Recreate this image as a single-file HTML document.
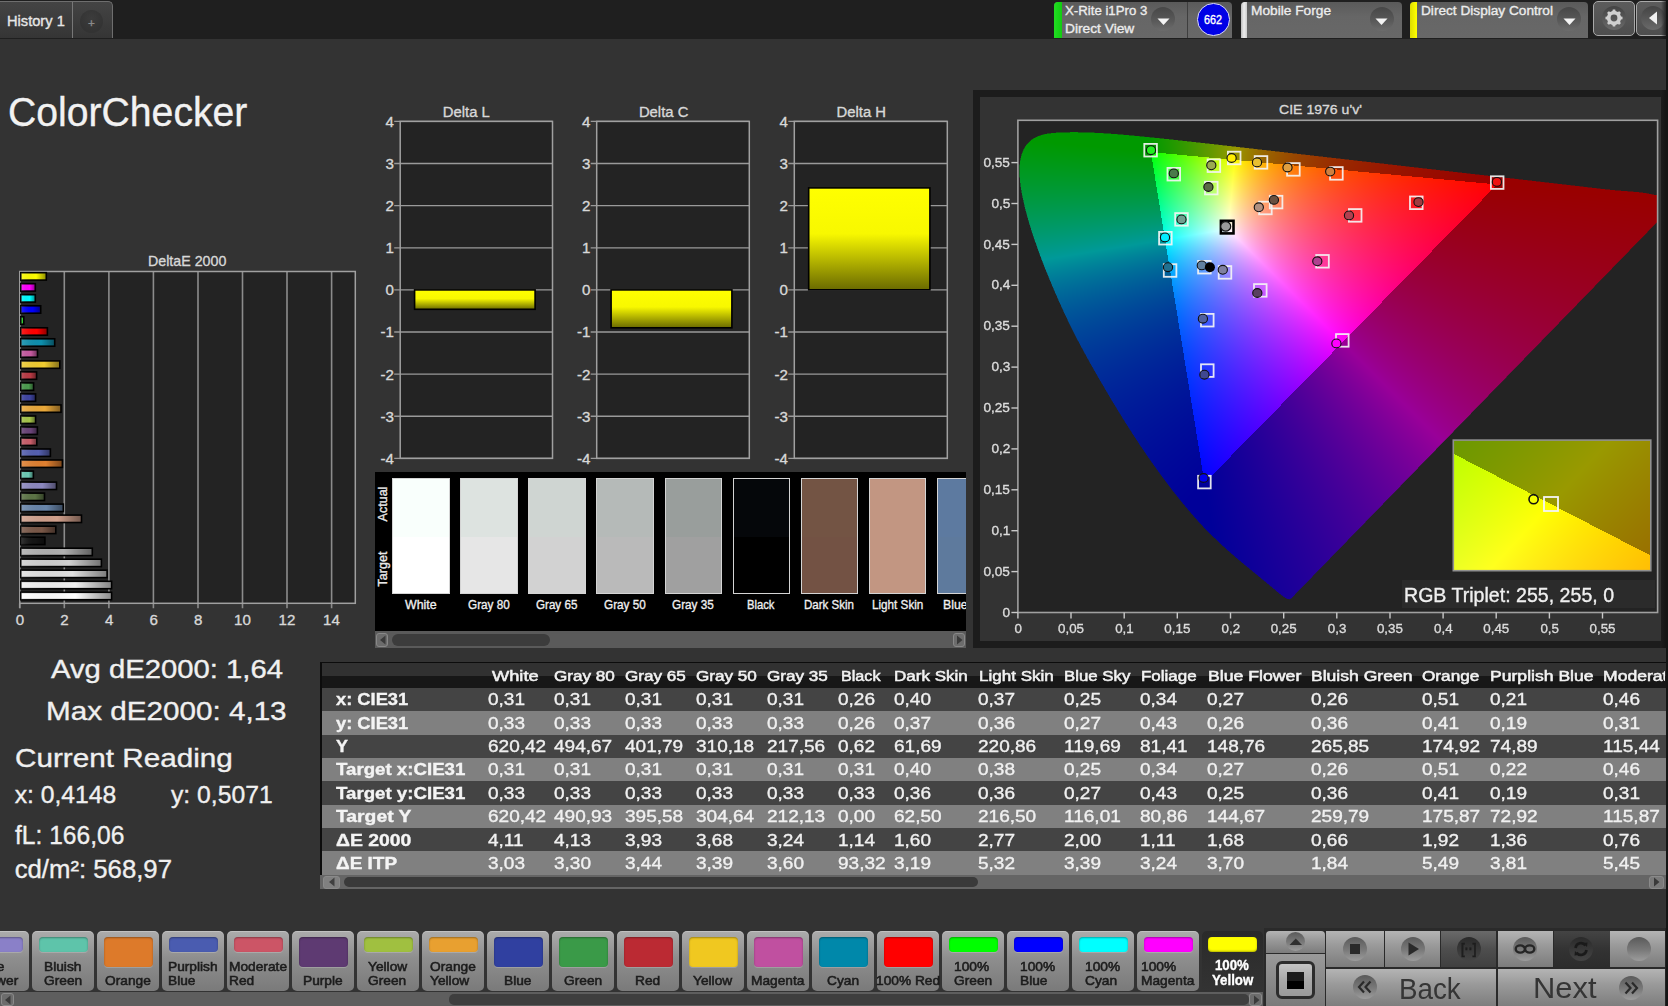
<!DOCTYPE html><html><head><meta charset="utf-8"><style>
html,body{margin:0;padding:0;width:1668px;height:1006px;overflow:hidden;background:#333333;font-family:"Liberation Sans",sans-serif}
.t{position:absolute;white-space:nowrap;-webkit-text-stroke:0.35px currentColor}
svg{position:absolute;left:0;top:0}
</style></head><body>
<div style="position:absolute;left:0.00px;top:0.00px;width:1668.00px;height:39.00px;background:#1f1f1f"></div>
<div style="position:absolute;left:-4px;top:1px;width:117px;height:37px;border:1px solid #6e6e6e;border-bottom:none;border-radius:0 5px 0 0;background:linear-gradient(#444,#353535);box-sizing:border-box"></div>
<div style="position:absolute;left:72.00px;top:2.00px;width:1.00px;height:36.00px;background:#777"></div>
<div style="position:absolute;left:80px;top:10px;width:23px;height:23px;border-radius:50%;background:radial-gradient(circle at 50% 35%,#3c3c3c,#333 70%)"></div>
<div class="t" style="left:88.00px;top:17.15px;font-size:11.63px;line-height:11.63px;color:#8a8a8a;">+</div>
<div class="t" style="left:7.00px;top:13.69px;font-size:14.53px;line-height:14.53px;color:#e6e6e6;transform:scaleX(1.0088);transform-origin:0 0;">History 1</div>
<div style="position:absolute;left:1054.4px;top:1.5px;width:177.5999999999999px;height:36.6px;border-radius:4px 4px 0 0;background:linear-gradient(#5a5a5a,#666 40%,#686868);overflow:hidden"><div style="position:absolute;left:0;top:0;width:7.4px;height:100%;background:linear-gradient(90deg,#22dd22,#11cc11)"></div></div>
<div class="t" style="left:1064.80px;top:3.92px;font-size:13.08px;line-height:13.08px;color:#ececec;transform:scaleX(1.0111);transform-origin:0 0;">X-Rite i1Pro 3</div>
<div class="t" style="left:1064.80px;top:22.97px;font-size:12.79px;line-height:12.79px;color:#ececec;transform:scaleX(1.0754);transform-origin:0 0;">Direct View</div>
<div style="position:absolute;left:1151.1px;top:7.2px;width:24px;height:24px;border-radius:50%;background:linear-gradient(#474747,#5a5a5a 60%,#6c6c6c)"></div>
<svg width="14" height="8" style="left:1156.6px;top:17.7px"><path d="M0.5 0.5 L12.5 0.5 L6.5 7 Z" fill="#f4f4f4"/></svg>
<div style="position:absolute;left:1187.00px;top:2.00px;width:1.20px;height:36.00px;background:#3e3e3e"></div>
<div style="position:absolute;left:1196.8px;top:2.8px;width:32.8px;height:32.8px;border-radius:50%;background:#0000e6;border:1.6px solid #dcdcf8;box-sizing:border-box"></div>
<div class="t" style="left:1203.90px;top:14.26px;font-size:12.21px;line-height:12.21px;color:#ffffff;transform:scaleX(0.8857);transform-origin:0 0;">662</div>
<div style="position:absolute;left:1241px;top:1.5px;width:160.9000000000001px;height:36.6px;border-radius:4px 4px 0 0;background:linear-gradient(#5a5a5a,#666 40%,#686868);overflow:hidden"><div style="position:absolute;left:0;top:0;width:6px;height:100%;background:linear-gradient(90deg,#bbb,#eee 50%,#ccc)"></div></div>
<div class="t" style="left:1251.20px;top:3.92px;font-size:13.08px;line-height:13.08px;color:#ececec;transform:scaleX(1.0487);transform-origin:0 0;">Mobile Forge</div>
<div style="position:absolute;left:1369.9px;top:7.2px;width:24px;height:24px;border-radius:50%;background:linear-gradient(#474747,#5a5a5a 60%,#6c6c6c)"></div>
<svg width="14" height="8" style="left:1375.4px;top:17.7px"><path d="M0.5 0.5 L12.5 0.5 L6.5 7 Z" fill="#f4f4f4"/></svg>
<div style="position:absolute;left:1410.3px;top:1.5px;width:178.20000000000005px;height:36.6px;border-radius:4px 4px 0 0;background:linear-gradient(#5a5a5a,#666 40%,#686868);overflow:hidden"><div style="position:absolute;left:0;top:0;width:7px;height:100%;background:linear-gradient(90deg,#dddd00,#ffff00)"></div></div>
<div class="t" style="left:1421.00px;top:3.92px;font-size:13.08px;line-height:13.08px;color:#ececec;transform:scaleX(1.0437);transform-origin:0 0;">Direct Display Control</div>
<div style="position:absolute;left:1557.1px;top:7.2px;width:24px;height:24px;border-radius:50%;background:linear-gradient(#474747,#5a5a5a 60%,#6c6c6c)"></div>
<svg width="14" height="8" style="left:1562.6px;top:17.7px"><path d="M0.5 0.5 L12.5 0.5 L6.5 7 Z" fill="#f4f4f4"/></svg>
<div style="position:absolute;left:1593.3px;top:1.2px;width:41.6px;height:34.5px;border:1.5px solid #a8a8a8;border-radius:5px;box-sizing:border-box;background:linear-gradient(#5c5c5c,#4e4e4e)"></div>
<div style="position:absolute;left:1602px;top:6px;width:24px;height:24px;border-radius:50%;background:linear-gradient(#444,#5a5a5a 60%,#6a6a6a)"></div>
<svg width="24" height="24" viewBox="-12 -12 24 24" style="left:1602px;top:6px"><path d="M7.03 -1.57 L8.52 -1.20 L8.52 1.20 L7.03 1.57 L6.08 3.86 L6.87 5.17 L5.17 6.87 L3.86 6.08 L1.57 7.03 L1.20 8.52 L-1.20 8.52 L-1.57 7.03 L-3.86 6.08 L-5.17 6.87 L-6.87 5.17 L-6.08 3.86 L-7.03 1.57 L-8.52 1.20 L-8.52 -1.20 L-7.03 -1.57 L-6.08 -3.86 L-6.87 -5.17 L-5.17 -6.87 L-3.86 -6.08 L-1.57 -7.03 L-1.20 -8.52 L1.20 -8.52 L1.57 -7.03 L3.86 -6.08 L5.17 -6.87 L6.87 -5.17 L6.08 -3.86 Z M3.4 0 A3.4 3.4 0 1 0 -3.4 0 A3.4 3.4 0 1 0 3.4 0 Z" fill="#d0d0d0" fill-rule="evenodd"/></svg>
<div style="position:absolute;left:1635.9px;top:1.2px;width:50px;height:34.5px;border:1.5px solid #a8a8a8;border-radius:5px;box-sizing:border-box;background:linear-gradient(#5c5c5c,#4e4e4e)"></div>
<div style="position:absolute;left:1640.7px;top:6px;width:24px;height:24px;border-radius:50%;background:linear-gradient(#444,#5a5a5a 60%,#6a6a6a)"></div>
<svg width="10" height="14" style="left:1648px;top:11px"><path d="M9 0.5 L9 13.5 L1 7 Z" fill="#f0f0f0"/></svg>
<div style="position:absolute;left:1661.00px;top:0.00px;width:7.00px;height:39.00px;background:linear-gradient(90deg,rgba(0,0,0,0),#111)"></div>
<div class="t" style="left:8.40px;top:90.80px;font-size:41.57px;line-height:41.57px;color:#f2f2f2;transform:scaleX(0.9421);transform-origin:0 0;">ColorChecker</div>
<div class="t" style="left:147.90px;top:252.63px;font-size:15.55px;line-height:15.55px;color:#d8d8d8;transform:scaleX(0.9151);transform-origin:0 0;">DeltaE 2000</div>
<svg width="1668" height="1006" style="position:absolute;left:0;top:0"><rect x="19.8" y="271.5" width="335.5" height="331.79999999999995" fill="#232323"/><line x1="64.3" y1="271.5" x2="64.3" y2="608.3" stroke="#8c8c8c" stroke-width="1.6"/><line x1="108.9" y1="271.5" x2="108.9" y2="608.3" stroke="#8c8c8c" stroke-width="1.6"/><line x1="153.4" y1="271.5" x2="153.4" y2="608.3" stroke="#8c8c8c" stroke-width="1.6"/><line x1="198.0" y1="271.5" x2="198.0" y2="608.3" stroke="#8c8c8c" stroke-width="1.6"/><line x1="242.5" y1="271.5" x2="242.5" y2="608.3" stroke="#8c8c8c" stroke-width="1.6"/><line x1="287.0" y1="271.5" x2="287.0" y2="608.3" stroke="#8c8c8c" stroke-width="1.6"/><line x1="331.6" y1="271.5" x2="331.6" y2="608.3" stroke="#8c8c8c" stroke-width="1.6"/><rect x="19.8" y="271.5" width="335.5" height="331.79999999999995" fill="none" stroke="#a0a0a0" stroke-width="1.5"/><line x1="19.8" y1="603.3" x2="19.8" y2="608.3" stroke="#9a9a9a" stroke-width="1.8"/><defs><linearGradient id="bshade" x1="0" y1="0" x2="1" y2="0"><stop offset="0" stop-color="#fff" stop-opacity="0.15"/><stop offset="0.6" stop-color="#000" stop-opacity="0"/><stop offset="1" stop-color="#000" stop-opacity="0.45"/></linearGradient></defs><rect x="20.8" y="272.7" width="25.5" height="7.4" fill="#ffff00" stroke="#000" stroke-width="1.6"/><rect x="20.8" y="272.7" width="25.5" height="7.4" fill="url(#bshade)"/><rect x="20.8" y="283.7" width="14.5" height="7.4" fill="#ff00ff" stroke="#000" stroke-width="1.6"/><rect x="20.8" y="283.7" width="14.5" height="7.4" fill="url(#bshade)"/><rect x="20.8" y="294.7" width="14.5" height="7.4" fill="#00ffff" stroke="#000" stroke-width="1.6"/><rect x="20.8" y="294.7" width="14.5" height="7.4" fill="url(#bshade)"/><rect x="20.8" y="305.8" width="19.9" height="7.4" fill="#0000ff" stroke="#000" stroke-width="1.6"/><rect x="20.8" y="305.8" width="19.9" height="7.4" fill="url(#bshade)"/><rect x="20.8" y="316.8" width="3.0" height="7.4" fill="#33cc33" stroke="#000" stroke-width="1.6"/><rect x="20.8" y="316.8" width="3.0" height="7.4" fill="url(#bshade)"/><rect x="20.8" y="327.8" width="26.6" height="7.4" fill="#ff0000" stroke="#000" stroke-width="1.6"/><rect x="20.8" y="327.8" width="26.6" height="7.4" fill="url(#bshade)"/><rect x="20.8" y="338.8" width="33.9" height="7.4" fill="#0e8fad" stroke="#000" stroke-width="1.6"/><rect x="20.8" y="338.8" width="33.9" height="7.4" fill="url(#bshade)"/><rect x="20.8" y="349.8" width="16.7" height="7.4" fill="#c55aa0" stroke="#000" stroke-width="1.6"/><rect x="20.8" y="349.8" width="16.7" height="7.4" fill="url(#bshade)"/><rect x="20.8" y="360.9" width="39.0" height="7.4" fill="#f0cc30" stroke="#000" stroke-width="1.6"/><rect x="20.8" y="360.9" width="39.0" height="7.4" fill="url(#bshade)"/><rect x="20.8" y="371.9" width="15.8" height="7.4" fill="#b83a44" stroke="#000" stroke-width="1.6"/><rect x="20.8" y="371.9" width="15.8" height="7.4" fill="url(#bshade)"/><rect x="20.8" y="382.9" width="12.8" height="7.4" fill="#4b9a4e" stroke="#000" stroke-width="1.6"/><rect x="20.8" y="382.9" width="12.8" height="7.4" fill="url(#bshade)"/><rect x="20.8" y="393.9" width="14.8" height="7.4" fill="#3f45a0" stroke="#000" stroke-width="1.6"/><rect x="20.8" y="393.9" width="14.8" height="7.4" fill="url(#bshade)"/><rect x="20.8" y="404.9" width="40.2" height="7.4" fill="#eaa83a" stroke="#000" stroke-width="1.6"/><rect x="20.8" y="404.9" width="40.2" height="7.4" fill="url(#bshade)"/><rect x="20.8" y="416.0" width="14.8" height="7.4" fill="#a6c44a" stroke="#000" stroke-width="1.6"/><rect x="20.8" y="416.0" width="14.8" height="7.4" fill="url(#bshade)"/><rect x="20.8" y="427.0" width="16.6" height="7.4" fill="#6a4478" stroke="#000" stroke-width="1.6"/><rect x="20.8" y="427.0" width="16.6" height="7.4" fill="url(#bshade)"/><rect x="20.8" y="438.0" width="16.0" height="7.4" fill="#c85e6a" stroke="#000" stroke-width="1.6"/><rect x="20.8" y="438.0" width="16.0" height="7.4" fill="url(#bshade)"/><rect x="20.8" y="449.0" width="29.6" height="7.4" fill="#5560b0" stroke="#000" stroke-width="1.6"/><rect x="20.8" y="449.0" width="29.6" height="7.4" fill="url(#bshade)"/><rect x="20.8" y="460.0" width="41.6" height="7.4" fill="#e08030" stroke="#000" stroke-width="1.6"/><rect x="20.8" y="460.0" width="41.6" height="7.4" fill="url(#bshade)"/><rect x="20.8" y="471.1" width="12.6" height="7.4" fill="#6ccab4" stroke="#000" stroke-width="1.6"/><rect x="20.8" y="471.1" width="12.6" height="7.4" fill="url(#bshade)"/><rect x="20.8" y="482.1" width="35.7" height="7.4" fill="#8c88c0" stroke="#000" stroke-width="1.6"/><rect x="20.8" y="482.1" width="35.7" height="7.4" fill="url(#bshade)"/><rect x="20.8" y="493.1" width="23.7" height="7.4" fill="#5c7446" stroke="#000" stroke-width="1.6"/><rect x="20.8" y="493.1" width="23.7" height="7.4" fill="url(#bshade)"/><rect x="20.8" y="504.1" width="42.5" height="7.4" fill="#6885aa" stroke="#000" stroke-width="1.6"/><rect x="20.8" y="504.1" width="42.5" height="7.4" fill="url(#bshade)"/><rect x="20.8" y="515.1" width="60.7" height="7.4" fill="#d0a08c" stroke="#000" stroke-width="1.6"/><rect x="20.8" y="515.1" width="60.7" height="7.4" fill="url(#bshade)"/><rect x="20.8" y="526.2" width="35.0" height="7.4" fill="#7a5848" stroke="#000" stroke-width="1.6"/><rect x="20.8" y="526.2" width="35.0" height="7.4" fill="url(#bshade)"/><rect x="20.8" y="537.2" width="24.1" height="7.4" fill="#151515" stroke="#000" stroke-width="1.6"/><rect x="20.8" y="537.2" width="24.1" height="7.4" fill="url(#bshade)"/><rect x="20.8" y="548.2" width="71.5" height="7.4" fill="#b0b0b0" stroke="#000" stroke-width="1.6"/><rect x="20.8" y="548.2" width="71.5" height="7.4" fill="url(#bshade)"/><rect x="20.8" y="559.2" width="80.6" height="7.4" fill="#d0d0d0" stroke="#000" stroke-width="1.6"/><rect x="20.8" y="559.2" width="80.6" height="7.4" fill="url(#bshade)"/><rect x="20.8" y="570.2" width="86.3" height="7.4" fill="#e0e0e0" stroke="#000" stroke-width="1.6"/><rect x="20.8" y="570.2" width="86.3" height="7.4" fill="url(#bshade)"/><rect x="20.8" y="581.3" width="90.8" height="7.4" fill="#f0f0f0" stroke="#000" stroke-width="1.6"/><rect x="20.8" y="581.3" width="90.8" height="7.4" fill="url(#bshade)"/><rect x="20.8" y="592.3" width="90.8" height="7.4" fill="#ffffff" stroke="#000" stroke-width="1.6"/><rect x="20.8" y="592.3" width="90.8" height="7.4" fill="url(#bshade)"/></svg>
<div class="t" style="left:15.80px;top:612.20px;font-size:15.12px;line-height:15.12px;color:#d8d8d8;">0</div>
<div class="t" style="left:60.34px;top:612.20px;font-size:15.12px;line-height:15.12px;color:#d8d8d8;">2</div>
<div class="t" style="left:104.88px;top:612.20px;font-size:15.12px;line-height:15.12px;color:#d8d8d8;">4</div>
<div class="t" style="left:149.42px;top:612.20px;font-size:15.12px;line-height:15.12px;color:#d8d8d8;">6</div>
<div class="t" style="left:193.96px;top:612.20px;font-size:15.12px;line-height:15.12px;color:#d8d8d8;">8</div>
<div class="t" style="left:234.00px;top:612.20px;font-size:15.12px;line-height:15.12px;color:#d8d8d8;">10</div>
<div class="t" style="left:278.54px;top:612.20px;font-size:15.12px;line-height:15.12px;color:#d8d8d8;">12</div>
<div class="t" style="left:323.08px;top:612.20px;font-size:15.12px;line-height:15.12px;color:#d8d8d8;">14</div>
<svg width="1668" height="1006" style="position:absolute;left:0;top:0"><defs><linearGradient id="yb" x1="0" y1="0" x2="0" y2="1"><stop offset="0" stop-color="#ffff00"/><stop offset="0.45" stop-color="#f8f800"/><stop offset="1" stop-color="#6a6a00"/></linearGradient></defs><rect x="400.2" y="121.4" width="152.3" height="336.96" fill="#232323"/><line x1="394.2" y1="121.4" x2="552.5" y2="121.4" stroke="#9a9a9a" stroke-width="1.35"/><line x1="394.2" y1="163.5" x2="552.5" y2="163.5" stroke="#9a9a9a" stroke-width="1.35"/><line x1="394.2" y1="205.6" x2="552.5" y2="205.6" stroke="#9a9a9a" stroke-width="1.35"/><line x1="394.2" y1="247.8" x2="552.5" y2="247.8" stroke="#9a9a9a" stroke-width="1.35"/><line x1="394.2" y1="289.9" x2="552.5" y2="289.9" stroke="#9a9a9a" stroke-width="1.35"/><line x1="394.2" y1="332.0" x2="552.5" y2="332.0" stroke="#9a9a9a" stroke-width="1.35"/><line x1="394.2" y1="374.1" x2="552.5" y2="374.1" stroke="#9a9a9a" stroke-width="1.35"/><line x1="394.2" y1="416.2" x2="552.5" y2="416.2" stroke="#9a9a9a" stroke-width="1.35"/><line x1="394.2" y1="458.4" x2="552.5" y2="458.4" stroke="#9a9a9a" stroke-width="1.35"/><rect x="400.2" y="121.4" width="152.3" height="336.96" fill="none" stroke="#a0a0a0" stroke-width="1.5"/><rect x="414.6" y="289.9" width="120.5" height="19.4" fill="url(#yb)" stroke="#000" stroke-width="1.6"/><rect x="596.7" y="121.4" width="152.5999999999999" height="336.96" fill="#232323"/><line x1="590.7" y1="121.4" x2="749.3" y2="121.4" stroke="#9a9a9a" stroke-width="1.35"/><line x1="590.7" y1="163.5" x2="749.3" y2="163.5" stroke="#9a9a9a" stroke-width="1.35"/><line x1="590.7" y1="205.6" x2="749.3" y2="205.6" stroke="#9a9a9a" stroke-width="1.35"/><line x1="590.7" y1="247.8" x2="749.3" y2="247.8" stroke="#9a9a9a" stroke-width="1.35"/><line x1="590.7" y1="289.9" x2="749.3" y2="289.9" stroke="#9a9a9a" stroke-width="1.35"/><line x1="590.7" y1="332.0" x2="749.3" y2="332.0" stroke="#9a9a9a" stroke-width="1.35"/><line x1="590.7" y1="374.1" x2="749.3" y2="374.1" stroke="#9a9a9a" stroke-width="1.35"/><line x1="590.7" y1="416.2" x2="749.3" y2="416.2" stroke="#9a9a9a" stroke-width="1.35"/><line x1="590.7" y1="458.4" x2="749.3" y2="458.4" stroke="#9a9a9a" stroke-width="1.35"/><rect x="596.7" y="121.4" width="152.5999999999999" height="336.96" fill="none" stroke="#a0a0a0" stroke-width="1.5"/><rect x="611.1" y="289.9" width="120.8" height="37.9" fill="url(#yb)" stroke="#000" stroke-width="1.6"/><rect x="794.3" y="121.4" width="153.0" height="336.96" fill="#232323"/><line x1="788.3" y1="121.4" x2="947.3" y2="121.4" stroke="#9a9a9a" stroke-width="1.35"/><line x1="788.3" y1="163.5" x2="947.3" y2="163.5" stroke="#9a9a9a" stroke-width="1.35"/><line x1="788.3" y1="205.6" x2="947.3" y2="205.6" stroke="#9a9a9a" stroke-width="1.35"/><line x1="788.3" y1="247.8" x2="947.3" y2="247.8" stroke="#9a9a9a" stroke-width="1.35"/><line x1="788.3" y1="289.9" x2="947.3" y2="289.9" stroke="#9a9a9a" stroke-width="1.35"/><line x1="788.3" y1="332.0" x2="947.3" y2="332.0" stroke="#9a9a9a" stroke-width="1.35"/><line x1="788.3" y1="374.1" x2="947.3" y2="374.1" stroke="#9a9a9a" stroke-width="1.35"/><line x1="788.3" y1="416.2" x2="947.3" y2="416.2" stroke="#9a9a9a" stroke-width="1.35"/><line x1="788.3" y1="458.4" x2="947.3" y2="458.4" stroke="#9a9a9a" stroke-width="1.35"/><rect x="794.3" y="121.4" width="153.0" height="336.96" fill="none" stroke="#a0a0a0" stroke-width="1.5"/><rect x="808.7" y="187.9" width="121.2" height="101.9" fill="url(#yb)" stroke="#000" stroke-width="1.6"/></svg>
<div class="t" style="left:442.80px;top:104.65px;font-size:14.83px;line-height:14.83px;color:#d8d8d8;">Delta L</div>
<div class="t" style="left:385.40px;top:113.80px;font-size:15.12px;line-height:15.12px;color:#d8d8d8;">4</div>
<div class="t" style="left:385.40px;top:155.92px;font-size:15.12px;line-height:15.12px;color:#d8d8d8;">3</div>
<div class="t" style="left:385.40px;top:198.04px;font-size:15.12px;line-height:15.12px;color:#d8d8d8;">2</div>
<div class="t" style="left:385.40px;top:240.16px;font-size:15.12px;line-height:15.12px;color:#d8d8d8;">1</div>
<div class="t" style="left:385.40px;top:282.28px;font-size:15.12px;line-height:15.12px;color:#d8d8d8;">0</div>
<div class="t" style="left:380.40px;top:324.40px;font-size:15.12px;line-height:15.12px;color:#d8d8d8;">-1</div>
<div class="t" style="left:380.40px;top:366.52px;font-size:15.12px;line-height:15.12px;color:#d8d8d8;">-2</div>
<div class="t" style="left:380.40px;top:408.64px;font-size:15.12px;line-height:15.12px;color:#d8d8d8;">-3</div>
<div class="t" style="left:380.40px;top:450.76px;font-size:15.12px;line-height:15.12px;color:#d8d8d8;">-4</div>
<div class="t" style="left:638.90px;top:104.65px;font-size:14.83px;line-height:14.83px;color:#d8d8d8;">Delta C</div>
<div class="t" style="left:581.90px;top:113.80px;font-size:15.12px;line-height:15.12px;color:#d8d8d8;">4</div>
<div class="t" style="left:581.90px;top:155.92px;font-size:15.12px;line-height:15.12px;color:#d8d8d8;">3</div>
<div class="t" style="left:581.90px;top:198.04px;font-size:15.12px;line-height:15.12px;color:#d8d8d8;">2</div>
<div class="t" style="left:581.90px;top:240.16px;font-size:15.12px;line-height:15.12px;color:#d8d8d8;">1</div>
<div class="t" style="left:581.90px;top:282.28px;font-size:15.12px;line-height:15.12px;color:#d8d8d8;">0</div>
<div class="t" style="left:576.90px;top:324.40px;font-size:15.12px;line-height:15.12px;color:#d8d8d8;">-1</div>
<div class="t" style="left:576.90px;top:366.52px;font-size:15.12px;line-height:15.12px;color:#d8d8d8;">-2</div>
<div class="t" style="left:576.90px;top:408.64px;font-size:15.12px;line-height:15.12px;color:#d8d8d8;">-3</div>
<div class="t" style="left:576.90px;top:450.76px;font-size:15.12px;line-height:15.12px;color:#d8d8d8;">-4</div>
<div class="t" style="left:836.60px;top:104.65px;font-size:14.83px;line-height:14.83px;color:#d8d8d8;">Delta H</div>
<div class="t" style="left:779.50px;top:113.80px;font-size:15.12px;line-height:15.12px;color:#d8d8d8;">4</div>
<div class="t" style="left:779.50px;top:155.92px;font-size:15.12px;line-height:15.12px;color:#d8d8d8;">3</div>
<div class="t" style="left:779.50px;top:198.04px;font-size:15.12px;line-height:15.12px;color:#d8d8d8;">2</div>
<div class="t" style="left:779.50px;top:240.16px;font-size:15.12px;line-height:15.12px;color:#d8d8d8;">1</div>
<div class="t" style="left:779.50px;top:282.28px;font-size:15.12px;line-height:15.12px;color:#d8d8d8;">0</div>
<div class="t" style="left:774.50px;top:324.40px;font-size:15.12px;line-height:15.12px;color:#d8d8d8;">-1</div>
<div class="t" style="left:774.50px;top:366.52px;font-size:15.12px;line-height:15.12px;color:#d8d8d8;">-2</div>
<div class="t" style="left:774.50px;top:408.64px;font-size:15.12px;line-height:15.12px;color:#d8d8d8;">-3</div>
<div class="t" style="left:774.50px;top:450.76px;font-size:15.12px;line-height:15.12px;color:#d8d8d8;">-4</div>
<div class="t" style="left:50.70px;top:657.42px;font-size:25.73px;line-height:25.73px;color:#f0f0f0;transform:scaleX(1.1373);transform-origin:0 0;">Avg dE2000: 1,64</div>
<div class="t" style="left:46.40px;top:698.52px;font-size:25.73px;line-height:25.73px;color:#f0f0f0;transform:scaleX(1.1526);transform-origin:0 0;">Max dE2000: 4,13</div>
<div class="t" style="left:14.70px;top:746.22px;font-size:25.73px;line-height:25.73px;color:#f0f0f0;transform:scaleX(1.1540);transform-origin:0 0;">Current Reading</div>
<div class="t" style="left:14.70px;top:782.58px;font-size:24.71px;line-height:24.71px;color:#f0f0f0;">x: 0,4148</div>
<div class="t" style="left:171.00px;top:782.58px;font-size:24.71px;line-height:24.71px;color:#f0f0f0;">y: 0,5071</div>
<div class="t" style="left:14.70px;top:823.02px;font-size:25.73px;line-height:25.73px;color:#f0f0f0;transform:scaleX(0.9565);transform-origin:0 0;">fL: 166,06</div>
<div class="t" style="left:14.70px;top:856.52px;font-size:25.73px;line-height:25.73px;color:#f0f0f0;">cd/m²: 568,97</div>
<div style="position:absolute;left:375.00px;top:471.50px;width:591.40px;height:176.50px;background:#000"></div>
<div style="position:absolute;left:375px;top:471.5px;width:591.4px;height:160px;overflow:hidden">
<div style="position:absolute;left:17.30px;top:6.8px;width:57.6px;height:116.2px;border:1.6px solid #d4d4d4;box-sizing:border-box;background:linear-gradient(#f9fffc 51%,#ffffff 51%)"></div>
<div style="position:absolute;left:85.35px;top:6.8px;width:57.6px;height:116.2px;border:1.6px solid #d4d4d4;box-sizing:border-box;background:linear-gradient(#dde3e0 51%,#e6e6e6 51%)"></div>
<div style="position:absolute;left:153.40px;top:6.8px;width:57.6px;height:116.2px;border:1.6px solid #d4d4d4;box-sizing:border-box;background:linear-gradient(#cfd5d2 51%,#d2d2d2 51%)"></div>
<div style="position:absolute;left:221.45px;top:6.8px;width:57.6px;height:116.2px;border:1.6px solid #d4d4d4;box-sizing:border-box;background:linear-gradient(#b5bab8 51%,#bababa 51%)"></div>
<div style="position:absolute;left:289.50px;top:6.8px;width:57.6px;height:116.2px;border:1.6px solid #d4d4d4;box-sizing:border-box;background:linear-gradient(#999e9c 51%,#a0a0a0 51%)"></div>
<div style="position:absolute;left:357.55px;top:6.8px;width:57.6px;height:116.2px;border:1.6px solid #d4d4d4;box-sizing:border-box;background:linear-gradient(#05070a 51%,#000000 51%)"></div>
<div style="position:absolute;left:425.60px;top:6.8px;width:57.6px;height:116.2px;border:1.6px solid #d4d4d4;box-sizing:border-box;background:linear-gradient(#735444 51%,#735244 51%)"></div>
<div style="position:absolute;left:493.65px;top:6.8px;width:57.6px;height:116.2px;border:1.6px solid #d4d4d4;box-sizing:border-box;background:linear-gradient(#c29682 51%,#c29682 51%)"></div>
<div style="position:absolute;left:561.70px;top:6.8px;width:57.6px;height:116.2px;border:1.6px solid #d4d4d4;box-sizing:border-box;background:linear-gradient(#5d7aa0 51%,#5e7a9d 51%)"></div>
</div>
<div class="t" style="left:404.75px;top:598.43px;font-size:13.66px;line-height:13.66px;color:#f0f0f0;transform:scaleX(0.9083);transform-origin:0 0;">White</div>
<div class="t" style="left:468.10px;top:598.43px;font-size:13.66px;line-height:13.66px;color:#f0f0f0;transform:scaleX(0.8592);transform-origin:0 0;">Gray 80</div>
<div class="t" style="left:536.35px;top:598.43px;font-size:13.66px;line-height:13.66px;color:#f0f0f0;transform:scaleX(0.8510);transform-origin:0 0;">Gray 65</div>
<div class="t" style="left:604.20px;top:598.43px;font-size:13.66px;line-height:13.66px;color:#f0f0f0;transform:scaleX(0.8592);transform-origin:0 0;">Gray 50</div>
<div class="t" style="left:672.25px;top:598.43px;font-size:13.66px;line-height:13.66px;color:#f0f0f0;transform:scaleX(0.8592);transform-origin:0 0;">Gray 35</div>
<div class="t" style="left:746.95px;top:598.43px;font-size:13.66px;line-height:13.66px;color:#f0f0f0;transform:scaleX(0.8229);transform-origin:0 0;">Black</div>
<div class="t" style="left:804.05px;top:598.43px;font-size:13.66px;line-height:13.66px;color:#f0f0f0;transform:scaleX(0.8450);transform-origin:0 0;">Dark Skin</div>
<div class="t" style="left:871.75px;top:598.43px;font-size:13.66px;line-height:13.66px;color:#f0f0f0;transform:scaleX(0.8567);transform-origin:0 0;">Light Skin</div>
<div class="t" style="left:943.00px;top:598.43px;font-size:13.66px;line-height:13.66px;color:#f0f0f0;transform:scaleX(0.9000);transform-origin:0 0;">Blue</div>
<div style="position:absolute;left:966.40px;top:471.50px;width:10.00px;height:176.50px;background:#333"></div>
<div class="t" style="left:383.2px;top:503.8px;font-size:12.5px;line-height:12.5px;color:#e8e8e8;transform:translate(-50%,-50%) rotate(-90deg)">Actual</div>
<div class="t" style="left:383.2px;top:569.4px;font-size:12.5px;line-height:12.5px;color:#e8e8e8;transform:translate(-50%,-50%) rotate(-90deg)">Target</div>
<div style="position:absolute;left:375.00px;top:631.20px;width:591.40px;height:16.50px;background:#5a5a5a"></div>
<div style="position:absolute;left:392.3px;top:633.5px;width:157.6px;height:12px;border-radius:6px;background:#3c3c3c"></div>
<div style="position:absolute;left:376px;top:632.5px;width:12px;height:14px;border-radius:3px;background:#6c6c6c;border:1px solid #888;box-sizing:border-box"></div>
<svg width="8" height="10" style="left:378.5px;top:635px"><path d="M6.5 0.5 L6.5 9.5 L1 5 Z" fill="#3a3a3a"/></svg>
<div style="position:absolute;left:952.7px;top:632.5px;width:12px;height:14px;border-radius:3px;background:#6c6c6c;border:1px solid #888;box-sizing:border-box"></div>
<svg width="8" height="10" style="left:956px;top:635px"><path d="M1 0.5 L1 9.5 L6.5 5 Z" fill="#3a3a3a"/></svg>
<div style="position:absolute;left:973.40px;top:90.00px;width:694.60px;height:557.50px;background:#1c1c1c"></div>
<div style="position:absolute;left:980.00px;top:97.00px;width:680.80px;height:544.30px;background:#333333"></div>
<div style="position:absolute;left:1661.00px;top:90.00px;width:7.00px;height:558.00px;background:linear-gradient(90deg,#1c1c1c,#111)"></div>
<div class="t" style="left:1279.15px;top:102.63px;font-size:13.66px;line-height:13.66px;color:#d8d8d8;transform:scaleX(1.0309);transform-origin:0 0;">CIE 1976 u'v'</div>
<svg width="1668" height="1006" style="position:absolute;left:0;top:0"><rect x="1017.9" y="120.3" width="639.6999999999999" height="492.2" fill="#232323"/><clipPath id="pc"><rect x="1017.9" y="120.3" width="639.6999999999999" height="492.2"/></clipPath><clipPath id="lc"><polygon points="1290.9,598.9 1290.8,599.0 1290.6,599.1 1290.4,599.2 1290.1,599.3 1289.9,599.4 1289.7,599.5 1289.5,599.5 1289.3,599.5 1289.2,599.6 1289.0,599.5 1288.7,599.5 1288.5,599.5 1288.2,599.4 1287.9,599.4 1287.6,599.4 1287.2,599.3 1286.7,599.1 1286.0,598.7 1285.2,598.2 1284.3,597.6 1283.4,596.9 1282.3,596.1 1281.0,595.1 1279.5,594.0 1277.9,592.7 1276.2,591.2 1274.3,589.7 1272.2,587.9 1269.9,586.0 1267.4,583.9 1264.4,581.4 1261.1,578.7 1257.6,575.8 1254.0,572.8 1250.6,570.1 1247.6,567.6 1245.0,565.4 1242.7,563.5 1240.6,561.8 1238.6,560.1 1236.4,558.3 1234.1,556.2 1231.5,554.0 1228.9,551.7 1226.1,549.3 1223.3,546.8 1220.4,544.1 1217.4,541.2 1214.4,538.3 1211.3,535.3 1208.1,532.1 1204.8,528.8 1201.2,525.0 1197.5,520.9 1193.5,516.4 1189.3,511.6 1185.0,506.4 1180.5,500.9 1175.8,495.1 1171.1,489.0 1166.2,482.5 1161.1,475.7 1155.9,468.6 1150.6,461.1 1145.2,453.4 1139.8,445.3 1134.3,436.9 1128.7,428.2 1123.0,419.1 1117.2,409.8 1111.5,400.4 1105.9,391.0 1100.3,381.4 1094.7,371.6 1089.1,361.7 1083.6,351.8 1078.3,341.9 1073.3,332.2 1068.6,322.5 1064.0,312.9 1059.6,303.3 1055.5,293.8 1051.5,284.6 1047.8,275.7 1044.4,267.2 1041.2,258.8 1038.2,250.6 1035.4,242.8 1032.8,235.3 1030.5,228.2 1028.5,221.4 1026.7,215.1 1025.1,209.1 1023.8,203.3 1022.6,197.9 1021.6,192.8 1020.8,188.0 1020.2,183.5 1019.7,179.4 1019.5,175.4 1019.4,171.7 1019.4,168.2 1019.6,164.9 1020.0,161.8 1020.5,158.9 1021.1,156.2 1021.9,153.6 1022.8,151.3 1023.9,149.1 1025.1,147.0 1026.4,145.2 1027.8,143.5 1029.4,142.0 1031.0,140.5 1032.7,139.3 1034.5,138.2 1036.4,137.3 1038.3,136.4 1040.4,135.7 1042.5,135.1 1044.6,134.5 1046.8,134.1 1049.1,133.7 1051.4,133.5 1053.8,133.2 1056.2,133.0 1058.6,132.9 1061.1,132.7 1063.6,132.6 1066.1,132.6 1068.6,132.6 1071.1,132.5 1073.6,132.5 1076.1,132.5 1078.6,132.6 1081.2,132.6 1083.7,132.7 1086.3,132.7 1088.9,132.8 1091.5,132.9 1094.1,133.0 1096.7,133.2 1099.4,133.3 1102.1,133.5 1104.9,133.6 1107.7,133.8 1110.5,134.0 1113.3,134.2 1116.2,134.5 1119.2,134.7 1122.2,134.9 1125.2,135.2 1128.2,135.5 1131.3,135.8 1134.5,136.1 1137.7,136.4 1141.0,136.7 1144.3,137.0 1147.6,137.3 1151.0,137.7 1154.5,138.1 1158.1,138.4 1161.7,138.8 1165.3,139.2 1169.1,139.6 1172.9,140.0 1176.7,140.4 1180.6,140.8 1184.6,141.3 1188.7,141.7 1192.8,142.2 1197.0,142.7 1201.3,143.1 1205.6,143.6 1210.0,144.1 1214.5,144.6 1219.1,145.2 1223.7,145.7 1228.5,146.2 1233.3,146.8 1238.1,147.3 1243.1,147.9 1248.1,148.5 1253.2,149.0 1258.4,149.6 1263.6,150.2 1269.0,150.9 1274.4,151.5 1279.9,152.1 1285.4,152.8 1291.1,153.4 1296.8,154.1 1302.6,154.7 1308.4,155.4 1314.3,156.1 1320.3,156.8 1326.4,157.5 1332.5,158.2 1338.7,158.9 1344.9,159.6 1351.2,160.3 1357.6,161.0 1363.9,161.8 1370.3,162.5 1376.7,163.2 1383.2,164.0 1389.7,164.8 1396.3,165.5 1402.7,166.3 1409.1,167.0 1415.1,167.7 1420.6,168.3 1426.0,168.9 1431.9,169.6 1438.7,170.4 1446.8,171.3 1456.7,172.5 1468.3,173.8 1480.7,175.2 1493.3,176.6 1505.5,178.0 1516.6,179.3 1526.8,180.5 1536.5,181.6 1545.7,182.7 1554.6,183.7 1563.0,184.7 1570.9,185.6 1578.4,186.5 1585.2,187.3 1591.6,188.0 1597.7,188.7 1603.6,189.4 1609.5,190.0 1615.3,190.6 1621.1,191.1 1626.6,191.5 1631.9,191.9 1636.7,192.3 1640.9,192.8 1644.3,193.2 1646.9,193.6 1649.0,194.1 1651.0,194.5 1653.3,194.9 1656.2,195.4 1660.0,195.9 1664.6,196.4 1669.4,196.9 1673.9,197.5 1677.8,197.9 1680.6,198.2"/></clipPath><g clip-path="url(#pc)"><g clip-path="url(#lc)"><rect x="1018" y="120" width="10.5" height="10.5" fill="#009900"/><rect x="1028" y="120" width="10.5" height="10.5" fill="#009900"/><rect x="1038" y="120" width="10.5" height="10.5" fill="#009900"/><rect x="1048" y="120" width="10.5" height="10.5" fill="#009900"/><rect x="1058" y="120" width="10.5" height="10.5" fill="#009900"/><rect x="1068" y="120" width="10.5" height="10.5" fill="#009900"/><rect x="1078" y="120" width="10.5" height="10.5" fill="#009900"/><rect x="1088" y="120" width="10.5" height="10.5" fill="#009900"/><rect x="1098" y="120" width="10.5" height="10.5" fill="#009900"/><rect x="1108" y="120" width="10.5" height="10.5" fill="#009900"/><rect x="1118" y="120" width="10.5" height="10.5" fill="#009900"/><rect x="1128" y="120" width="10.5" height="10.5" fill="#009900"/><rect x="1138" y="120" width="10.5" height="10.5" fill="#009900"/><rect x="1148" y="120" width="10.5" height="10.5" fill="#089900"/><rect x="1158" y="120" width="10.5" height="10.5" fill="#169900"/><rect x="1168" y="120" width="10.5" height="10.5" fill="#249900"/><rect x="1178" y="120" width="10.5" height="10.5" fill="#339900"/><rect x="1188" y="120" width="10.5" height="10.5" fill="#449900"/><rect x="1198" y="120" width="10.5" height="10.5" fill="#559900"/><rect x="1208" y="120" width="10.5" height="10.5" fill="#669900"/><rect x="1218" y="120" width="10.5" height="10.5" fill="#7a9900"/><rect x="1228" y="120" width="10.5" height="10.5" fill="#8e9900"/><rect x="1238" y="120" width="10.5" height="10.5" fill="#998e00"/><rect x="1248" y="120" width="10.5" height="10.5" fill="#997d00"/><rect x="1258" y="120" width="10.5" height="10.5" fill="#996e00"/><rect x="1268" y="120" width="10.5" height="10.5" fill="#996200"/><rect x="1278" y="120" width="10.5" height="10.5" fill="#995800"/><rect x="1288" y="120" width="10.5" height="10.5" fill="#994f00"/><rect x="1298" y="120" width="10.5" height="10.5" fill="#994700"/><rect x="1308" y="120" width="10.5" height="10.5" fill="#994000"/><rect x="1318" y="120" width="10.5" height="10.5" fill="#993a00"/><rect x="1328" y="120" width="10.5" height="10.5" fill="#993400"/><rect x="1338" y="120" width="10.5" height="10.5" fill="#992f00"/><rect x="1348" y="120" width="10.5" height="10.5" fill="#992b00"/><rect x="1358" y="120" width="10.5" height="10.5" fill="#992700"/><rect x="1368" y="120" width="10.5" height="10.5" fill="#992300"/><rect x="1378" y="120" width="10.5" height="10.5" fill="#992000"/><rect x="1388" y="120" width="10.5" height="10.5" fill="#991d00"/><rect x="1398" y="120" width="10.5" height="10.5" fill="#991a00"/><rect x="1408" y="120" width="10.5" height="10.5" fill="#991700"/><rect x="1418" y="120" width="10.5" height="10.5" fill="#991500"/><rect x="1428" y="120" width="10.5" height="10.5" fill="#991200"/><rect x="1438" y="120" width="10.5" height="10.5" fill="#991000"/><rect x="1448" y="120" width="10.5" height="10.5" fill="#990e00"/><rect x="1458" y="120" width="10.5" height="10.5" fill="#990c00"/><rect x="1468" y="120" width="10.5" height="10.5" fill="#990b00"/><rect x="1478" y="120" width="10.5" height="10.5" fill="#990900"/><rect x="1488" y="120" width="10.5" height="10.5" fill="#990700"/><rect x="1498" y="120" width="10.5" height="10.5" fill="#990600"/><rect x="1508" y="120" width="10.5" height="10.5" fill="#990500"/><rect x="1518" y="120" width="10.5" height="10.5" fill="#990300"/><rect x="1528" y="120" width="10.5" height="10.5" fill="#990200"/><rect x="1538" y="120" width="10.5" height="10.5" fill="#990100"/><rect x="1548" y="120" width="10.5" height="10.5" fill="#990000"/><rect x="1558" y="120" width="10.5" height="10.5" fill="#990000"/><rect x="1568" y="120" width="10.5" height="10.5" fill="#990000"/><rect x="1578" y="120" width="10.5" height="10.5" fill="#990000"/><rect x="1588" y="120" width="10.5" height="10.5" fill="#990000"/><rect x="1598" y="120" width="10.5" height="10.5" fill="#990000"/><rect x="1608" y="120" width="10.5" height="10.5" fill="#990000"/><rect x="1618" y="120" width="10.5" height="10.5" fill="#990000"/><rect x="1628" y="120" width="10.5" height="10.5" fill="#990000"/><rect x="1638" y="120" width="10.5" height="10.5" fill="#990000"/><rect x="1648" y="120" width="10.5" height="10.5" fill="#990000"/><rect x="1018" y="130" width="10.5" height="10.5" fill="#009900"/><rect x="1028" y="130" width="10.5" height="10.5" fill="#009900"/><rect x="1038" y="130" width="10.5" height="10.5" fill="#009900"/><rect x="1048" y="130" width="10.5" height="10.5" fill="#009900"/><rect x="1058" y="130" width="10.5" height="10.5" fill="#009900"/><rect x="1068" y="130" width="10.5" height="10.5" fill="#009900"/><rect x="1078" y="130" width="10.5" height="10.5" fill="#009900"/><rect x="1088" y="130" width="10.5" height="10.5" fill="#009900"/><rect x="1098" y="130" width="10.5" height="10.5" fill="#009900"/><rect x="1108" y="130" width="10.5" height="10.5" fill="#009900"/><rect x="1118" y="130" width="10.5" height="10.5" fill="#009900"/><rect x="1128" y="130" width="10.5" height="10.5" fill="#009900"/><rect x="1138" y="130" width="10.5" height="10.5" fill="#009900"/><rect x="1148" y="130" width="10.5" height="10.5" fill="#069900"/><rect x="1158" y="130" width="10.5" height="10.5" fill="#149900"/><rect x="1168" y="130" width="10.5" height="10.5" fill="#239900"/><rect x="1178" y="130" width="10.5" height="10.5" fill="#339900"/><rect x="1188" y="130" width="10.5" height="10.5" fill="#439900"/><rect x="1198" y="130" width="10.5" height="10.5" fill="#549900"/><rect x="1208" y="130" width="10.5" height="10.5" fill="#679900"/><rect x="1218" y="130" width="10.5" height="10.5" fill="#7b9900"/><rect x="1228" y="130" width="10.5" height="10.5" fill="#8f9900"/><rect x="1238" y="130" width="10.5" height="10.5" fill="#998c00"/><rect x="1248" y="130" width="10.5" height="10.5" fill="#997b00"/><rect x="1258" y="130" width="10.5" height="10.5" fill="#996c00"/><rect x="1268" y="130" width="10.5" height="10.5" fill="#996000"/><rect x="1278" y="130" width="10.5" height="10.5" fill="#995500"/><rect x="1288" y="130" width="10.5" height="10.5" fill="#994c00"/><rect x="1298" y="130" width="10.5" height="10.5" fill="#994500"/><rect x="1308" y="130" width="10.5" height="10.5" fill="#993e00"/><rect x="1318" y="130" width="10.5" height="10.5" fill="#993800"/><rect x="1328" y="130" width="10.5" height="10.5" fill="#993200"/><rect x="1338" y="130" width="10.5" height="10.5" fill="#992d00"/><rect x="1348" y="130" width="10.5" height="10.5" fill="#992900"/><rect x="1358" y="130" width="10.5" height="10.5" fill="#992500"/><rect x="1368" y="130" width="10.5" height="10.5" fill="#992100"/><rect x="1378" y="130" width="10.5" height="10.5" fill="#991e00"/><rect x="1388" y="130" width="10.5" height="10.5" fill="#991b00"/><rect x="1398" y="130" width="10.5" height="10.5" fill="#991800"/><rect x="1408" y="130" width="10.5" height="10.5" fill="#991600"/><rect x="1418" y="130" width="10.5" height="10.5" fill="#991300"/><rect x="1428" y="130" width="10.5" height="10.5" fill="#991100"/><rect x="1438" y="130" width="10.5" height="10.5" fill="#990f00"/><rect x="1448" y="130" width="10.5" height="10.5" fill="#990d00"/><rect x="1458" y="130" width="10.5" height="10.5" fill="#990b00"/><rect x="1468" y="130" width="10.5" height="10.5" fill="#990900"/><rect x="1478" y="130" width="10.5" height="10.5" fill="#990800"/><rect x="1488" y="130" width="10.5" height="10.5" fill="#990600"/><rect x="1498" y="130" width="10.5" height="10.5" fill="#990500"/><rect x="1508" y="130" width="10.5" height="10.5" fill="#990300"/><rect x="1518" y="130" width="10.5" height="10.5" fill="#990200"/><rect x="1528" y="130" width="10.5" height="10.5" fill="#990100"/><rect x="1538" y="130" width="10.5" height="10.5" fill="#990000"/><rect x="1548" y="130" width="10.5" height="10.5" fill="#990000"/><rect x="1558" y="130" width="10.5" height="10.5" fill="#990000"/><rect x="1568" y="130" width="10.5" height="10.5" fill="#990000"/><rect x="1578" y="130" width="10.5" height="10.5" fill="#990000"/><rect x="1588" y="130" width="10.5" height="10.5" fill="#990000"/><rect x="1598" y="130" width="10.5" height="10.5" fill="#990000"/><rect x="1608" y="130" width="10.5" height="10.5" fill="#990000"/><rect x="1618" y="130" width="10.5" height="10.5" fill="#990000"/><rect x="1628" y="130" width="10.5" height="10.5" fill="#990000"/><rect x="1638" y="130" width="10.5" height="10.5" fill="#990000"/><rect x="1648" y="130" width="10.5" height="10.5" fill="#990000"/><rect x="1018" y="140" width="10.5" height="10.5" fill="#009904"/><rect x="1028" y="140" width="10.5" height="10.5" fill="#009903"/><rect x="1038" y="140" width="10.5" height="10.5" fill="#009903"/><rect x="1048" y="140" width="10.5" height="10.5" fill="#009902"/><rect x="1058" y="140" width="10.5" height="10.5" fill="#009901"/><rect x="1068" y="140" width="10.5" height="10.5" fill="#009900"/><rect x="1078" y="140" width="10.5" height="10.5" fill="#009900"/><rect x="1088" y="140" width="10.5" height="10.5" fill="#009900"/><rect x="1098" y="140" width="10.5" height="10.5" fill="#009900"/><rect x="1108" y="140" width="10.5" height="10.5" fill="#009900"/><rect x="1118" y="140" width="10.5" height="10.5" fill="#009900"/><rect x="1128" y="140" width="10.5" height="10.5" fill="#009900"/><rect x="1138" y="140" width="10.5" height="10.5" fill="#009900"/><rect x="1148" y="140" width="10.5" height="10.5" fill="#049900"/><rect x="1158" y="140" width="10.5" height="10.5" fill="#129900"/><rect x="1168" y="140" width="10.5" height="10.5" fill="#229900"/><rect x="1178" y="140" width="10.5" height="10.5" fill="#329900"/><rect x="1188" y="140" width="10.5" height="10.5" fill="#429900"/><rect x="1198" y="140" width="10.5" height="10.5" fill="#549900"/><rect x="1208" y="140" width="10.5" height="10.5" fill="#679900"/><rect x="1218" y="140" width="10.5" height="10.5" fill="#7c9900"/><rect x="1228" y="140" width="10.5" height="10.5" fill="#919900"/><rect x="1238" y="140" width="10.5" height="10.5" fill="#998a00"/><rect x="1248" y="140" width="10.5" height="10.5" fill="#997800"/><rect x="1258" y="140" width="10.5" height="10.5" fill="#996a00"/><rect x="1268" y="140" width="10.5" height="10.5" fill="#995e00"/><rect x="1278" y="140" width="10.5" height="10.5" fill="#995300"/><rect x="1288" y="140" width="10.5" height="10.5" fill="#994a00"/><rect x="1298" y="140" width="10.5" height="10.5" fill="#994300"/><rect x="1308" y="140" width="10.5" height="10.5" fill="#993c00"/><rect x="1318" y="140" width="10.5" height="10.5" fill="#993600"/><rect x="1328" y="140" width="10.5" height="10.5" fill="#993000"/><rect x="1338" y="140" width="10.5" height="10.5" fill="#992c00"/><rect x="1348" y="140" width="10.5" height="10.5" fill="#992700"/><rect x="1358" y="140" width="10.5" height="10.5" fill="#992300"/><rect x="1368" y="140" width="10.5" height="10.5" fill="#992000"/><rect x="1378" y="140" width="10.5" height="10.5" fill="#991c00"/><rect x="1388" y="140" width="10.5" height="10.5" fill="#991900"/><rect x="1398" y="140" width="10.5" height="10.5" fill="#991700"/><rect x="1408" y="140" width="10.5" height="10.5" fill="#991400"/><rect x="1418" y="140" width="10.5" height="10.5" fill="#991200"/><rect x="1428" y="140" width="10.5" height="10.5" fill="#991000"/><rect x="1438" y="140" width="10.5" height="10.5" fill="#990d00"/><rect x="1448" y="140" width="10.5" height="10.5" fill="#990c00"/><rect x="1458" y="140" width="10.5" height="10.5" fill="#990a00"/><rect x="1468" y="140" width="10.5" height="10.5" fill="#990800"/><rect x="1478" y="140" width="10.5" height="10.5" fill="#990700"/><rect x="1488" y="140" width="10.5" height="10.5" fill="#990500"/><rect x="1498" y="140" width="10.5" height="10.5" fill="#990400"/><rect x="1508" y="140" width="10.5" height="10.5" fill="#990200"/><rect x="1518" y="140" width="10.5" height="10.5" fill="#990100"/><rect x="1528" y="140" width="10.5" height="10.5" fill="#990000"/><rect x="1538" y="140" width="10.5" height="10.5" fill="#990000"/><rect x="1548" y="140" width="10.5" height="10.5" fill="#990000"/><rect x="1558" y="140" width="10.5" height="10.5" fill="#990000"/><rect x="1568" y="140" width="10.5" height="10.5" fill="#990000"/><rect x="1578" y="140" width="10.5" height="10.5" fill="#990000"/><rect x="1588" y="140" width="10.5" height="10.5" fill="#990000"/><rect x="1598" y="140" width="10.5" height="10.5" fill="#990000"/><rect x="1608" y="140" width="10.5" height="10.5" fill="#990000"/><rect x="1618" y="140" width="10.5" height="10.5" fill="#990000"/><rect x="1628" y="140" width="10.5" height="10.5" fill="#990000"/><rect x="1638" y="140" width="10.5" height="10.5" fill="#990000"/><rect x="1648" y="140" width="10.5" height="10.5" fill="#990000"/><rect x="1018" y="150" width="10.5" height="10.5" fill="#00990e"/><rect x="1028" y="150" width="10.5" height="10.5" fill="#00990d"/><rect x="1038" y="150" width="10.5" height="10.5" fill="#00990d"/><rect x="1048" y="150" width="10.5" height="10.5" fill="#00990c"/><rect x="1058" y="150" width="10.5" height="10.5" fill="#00990b"/><rect x="1068" y="150" width="10.5" height="10.5" fill="#00990b"/><rect x="1078" y="150" width="10.5" height="10.5" fill="#00990a"/><rect x="1088" y="150" width="10.5" height="10.5" fill="#009909"/><rect x="1098" y="150" width="10.5" height="10.5" fill="#009908"/><rect x="1108" y="150" width="10.5" height="10.5" fill="#009907"/><rect x="1118" y="150" width="10.5" height="10.5" fill="#009906"/><rect x="1128" y="150" width="10.5" height="10.5" fill="#009905"/><rect x="1138" y="150" width="10.5" height="10.5" fill="#009904"/><rect x="1148" y="150" width="10.5" height="10.5" fill="#06ff09"/><rect x="1158" y="150" width="10.5" height="10.5" fill="#25ff06"/><rect x="1168" y="150" width="10.5" height="10.5" fill="#42ff03"/><rect x="1178" y="150" width="10.5" height="10.5" fill="#309900"/><rect x="1188" y="150" width="10.5" height="10.5" fill="#429900"/><rect x="1198" y="150" width="10.5" height="10.5" fill="#549900"/><rect x="1208" y="150" width="10.5" height="10.5" fill="#689900"/><rect x="1218" y="150" width="10.5" height="10.5" fill="#7d9900"/><rect x="1228" y="150" width="10.5" height="10.5" fill="#939900"/><rect x="1238" y="150" width="10.5" height="10.5" fill="#998800"/><rect x="1248" y="150" width="10.5" height="10.5" fill="#997600"/><rect x="1258" y="150" width="10.5" height="10.5" fill="#996800"/><rect x="1268" y="150" width="10.5" height="10.5" fill="#995b00"/><rect x="1278" y="150" width="10.5" height="10.5" fill="#995100"/><rect x="1288" y="150" width="10.5" height="10.5" fill="#994800"/><rect x="1298" y="150" width="10.5" height="10.5" fill="#994000"/><rect x="1308" y="150" width="10.5" height="10.5" fill="#993a00"/><rect x="1318" y="150" width="10.5" height="10.5" fill="#993400"/><rect x="1328" y="150" width="10.5" height="10.5" fill="#992e00"/><rect x="1338" y="150" width="10.5" height="10.5" fill="#992a00"/><rect x="1348" y="150" width="10.5" height="10.5" fill="#992500"/><rect x="1358" y="150" width="10.5" height="10.5" fill="#992200"/><rect x="1368" y="150" width="10.5" height="10.5" fill="#991e00"/><rect x="1378" y="150" width="10.5" height="10.5" fill="#991b00"/><rect x="1388" y="150" width="10.5" height="10.5" fill="#991800"/><rect x="1398" y="150" width="10.5" height="10.5" fill="#991500"/><rect x="1408" y="150" width="10.5" height="10.5" fill="#991300"/><rect x="1418" y="150" width="10.5" height="10.5" fill="#991000"/><rect x="1428" y="150" width="10.5" height="10.5" fill="#990e00"/><rect x="1438" y="150" width="10.5" height="10.5" fill="#990c00"/><rect x="1448" y="150" width="10.5" height="10.5" fill="#990a00"/><rect x="1458" y="150" width="10.5" height="10.5" fill="#990800"/><rect x="1468" y="150" width="10.5" height="10.5" fill="#990700"/><rect x="1478" y="150" width="10.5" height="10.5" fill="#990500"/><rect x="1488" y="150" width="10.5" height="10.5" fill="#990400"/><rect x="1498" y="150" width="10.5" height="10.5" fill="#990200"/><rect x="1508" y="150" width="10.5" height="10.5" fill="#990100"/><rect x="1518" y="150" width="10.5" height="10.5" fill="#990000"/><rect x="1528" y="150" width="10.5" height="10.5" fill="#990000"/><rect x="1538" y="150" width="10.5" height="10.5" fill="#990000"/><rect x="1548" y="150" width="10.5" height="10.5" fill="#990000"/><rect x="1558" y="150" width="10.5" height="10.5" fill="#990000"/><rect x="1568" y="150" width="10.5" height="10.5" fill="#990000"/><rect x="1578" y="150" width="10.5" height="10.5" fill="#990000"/><rect x="1588" y="150" width="10.5" height="10.5" fill="#990000"/><rect x="1598" y="150" width="10.5" height="10.5" fill="#990000"/><rect x="1608" y="150" width="10.5" height="10.5" fill="#990000"/><rect x="1618" y="150" width="10.5" height="10.5" fill="#990000"/><rect x="1628" y="150" width="10.5" height="10.5" fill="#990000"/><rect x="1638" y="150" width="10.5" height="10.5" fill="#990000"/><rect x="1648" y="150" width="10.5" height="10.5" fill="#990000"/><rect x="1018" y="160" width="10.5" height="10.5" fill="#009918"/><rect x="1028" y="160" width="10.5" height="10.5" fill="#009918"/><rect x="1038" y="160" width="10.5" height="10.5" fill="#009918"/><rect x="1048" y="160" width="10.5" height="10.5" fill="#009917"/><rect x="1058" y="160" width="10.5" height="10.5" fill="#009917"/><rect x="1068" y="160" width="10.5" height="10.5" fill="#009916"/><rect x="1078" y="160" width="10.5" height="10.5" fill="#009915"/><rect x="1088" y="160" width="10.5" height="10.5" fill="#009915"/><rect x="1098" y="160" width="10.5" height="10.5" fill="#009914"/><rect x="1108" y="160" width="10.5" height="10.5" fill="#009914"/><rect x="1118" y="160" width="10.5" height="10.5" fill="#009913"/><rect x="1128" y="160" width="10.5" height="10.5" fill="#009912"/><rect x="1138" y="160" width="10.5" height="10.5" fill="#009912"/><rect x="1148" y="160" width="10.5" height="10.5" fill="#00ff26"/><rect x="1158" y="160" width="10.5" height="10.5" fill="#21ff24"/><rect x="1168" y="160" width="10.5" height="10.5" fill="#3fff23"/><rect x="1178" y="160" width="10.5" height="10.5" fill="#5cff21"/><rect x="1188" y="160" width="10.5" height="10.5" fill="#7aff1f"/><rect x="1198" y="160" width="10.5" height="10.5" fill="#98ff1d"/><rect x="1208" y="160" width="10.5" height="10.5" fill="#b7ff1b"/><rect x="1218" y="160" width="10.5" height="10.5" fill="#d8ff18"/><rect x="1228" y="160" width="10.5" height="10.5" fill="#faff15"/><rect x="1238" y="160" width="10.5" height="10.5" fill="#ffe311"/><rect x="1248" y="160" width="10.5" height="10.5" fill="#ffc80c"/><rect x="1258" y="160" width="10.5" height="10.5" fill="#ffb208"/><rect x="1268" y="160" width="10.5" height="10.5" fill="#ff9f05"/><rect x="1278" y="160" width="10.5" height="10.5" fill="#ff8f02"/><rect x="1288" y="160" width="10.5" height="10.5" fill="#994600"/><rect x="1298" y="160" width="10.5" height="10.5" fill="#993e00"/><rect x="1308" y="160" width="10.5" height="10.5" fill="#993800"/><rect x="1318" y="160" width="10.5" height="10.5" fill="#993200"/><rect x="1328" y="160" width="10.5" height="10.5" fill="#992c00"/><rect x="1338" y="160" width="10.5" height="10.5" fill="#992800"/><rect x="1348" y="160" width="10.5" height="10.5" fill="#992400"/><rect x="1358" y="160" width="10.5" height="10.5" fill="#992000"/><rect x="1368" y="160" width="10.5" height="10.5" fill="#991c00"/><rect x="1378" y="160" width="10.5" height="10.5" fill="#991900"/><rect x="1388" y="160" width="10.5" height="10.5" fill="#991600"/><rect x="1398" y="160" width="10.5" height="10.5" fill="#991400"/><rect x="1408" y="160" width="10.5" height="10.5" fill="#991100"/><rect x="1418" y="160" width="10.5" height="10.5" fill="#990f00"/><rect x="1428" y="160" width="10.5" height="10.5" fill="#990d00"/><rect x="1438" y="160" width="10.5" height="10.5" fill="#990b00"/><rect x="1448" y="160" width="10.5" height="10.5" fill="#990900"/><rect x="1458" y="160" width="10.5" height="10.5" fill="#990700"/><rect x="1468" y="160" width="10.5" height="10.5" fill="#990500"/><rect x="1478" y="160" width="10.5" height="10.5" fill="#990400"/><rect x="1488" y="160" width="10.5" height="10.5" fill="#990300"/><rect x="1498" y="160" width="10.5" height="10.5" fill="#990100"/><rect x="1508" y="160" width="10.5" height="10.5" fill="#990000"/><rect x="1518" y="160" width="10.5" height="10.5" fill="#990000"/><rect x="1528" y="160" width="10.5" height="10.5" fill="#990000"/><rect x="1538" y="160" width="10.5" height="10.5" fill="#990000"/><rect x="1548" y="160" width="10.5" height="10.5" fill="#990000"/><rect x="1558" y="160" width="10.5" height="10.5" fill="#990000"/><rect x="1568" y="160" width="10.5" height="10.5" fill="#990000"/><rect x="1578" y="160" width="10.5" height="10.5" fill="#990000"/><rect x="1588" y="160" width="10.5" height="10.5" fill="#990000"/><rect x="1598" y="160" width="10.5" height="10.5" fill="#990000"/><rect x="1608" y="160" width="10.5" height="10.5" fill="#990000"/><rect x="1618" y="160" width="10.5" height="10.5" fill="#990000"/><rect x="1628" y="160" width="10.5" height="10.5" fill="#990000"/><rect x="1638" y="160" width="10.5" height="10.5" fill="#990000"/><rect x="1648" y="160" width="10.5" height="10.5" fill="#990000"/><rect x="1018" y="170" width="10.5" height="10.5" fill="#009923"/><rect x="1028" y="170" width="10.5" height="10.5" fill="#009923"/><rect x="1038" y="170" width="10.5" height="10.5" fill="#009923"/><rect x="1048" y="170" width="10.5" height="10.5" fill="#009922"/><rect x="1058" y="170" width="10.5" height="10.5" fill="#009922"/><rect x="1068" y="170" width="10.5" height="10.5" fill="#009922"/><rect x="1078" y="170" width="10.5" height="10.5" fill="#009922"/><rect x="1088" y="170" width="10.5" height="10.5" fill="#009921"/><rect x="1098" y="170" width="10.5" height="10.5" fill="#009921"/><rect x="1108" y="170" width="10.5" height="10.5" fill="#009921"/><rect x="1118" y="170" width="10.5" height="10.5" fill="#009920"/><rect x="1128" y="170" width="10.5" height="10.5" fill="#009920"/><rect x="1138" y="170" width="10.5" height="10.5" fill="#009920"/><rect x="1148" y="170" width="10.5" height="10.5" fill="#00991f"/><rect x="1158" y="170" width="10.5" height="10.5" fill="#1dff40"/><rect x="1168" y="170" width="10.5" height="10.5" fill="#3cff3f"/><rect x="1178" y="170" width="10.5" height="10.5" fill="#5aff3e"/><rect x="1188" y="170" width="10.5" height="10.5" fill="#79ff3d"/><rect x="1198" y="170" width="10.5" height="10.5" fill="#98ff3c"/><rect x="1208" y="170" width="10.5" height="10.5" fill="#b8ff3b"/><rect x="1218" y="170" width="10.5" height="10.5" fill="#daff3a"/><rect x="1228" y="170" width="10.5" height="10.5" fill="#fdff39"/><rect x="1238" y="170" width="10.5" height="10.5" fill="#ffdf31"/><rect x="1248" y="170" width="10.5" height="10.5" fill="#ffc42a"/><rect x="1258" y="170" width="10.5" height="10.5" fill="#ffae24"/><rect x="1268" y="170" width="10.5" height="10.5" fill="#ff9c1f"/><rect x="1278" y="170" width="10.5" height="10.5" fill="#ff8c1b"/><rect x="1288" y="170" width="10.5" height="10.5" fill="#ff7e17"/><rect x="1298" y="170" width="10.5" height="10.5" fill="#ff7114"/><rect x="1308" y="170" width="10.5" height="10.5" fill="#ff6611"/><rect x="1318" y="170" width="10.5" height="10.5" fill="#ff5d0e"/><rect x="1328" y="170" width="10.5" height="10.5" fill="#ff540c"/><rect x="1338" y="170" width="10.5" height="10.5" fill="#ff4c0a"/><rect x="1348" y="170" width="10.5" height="10.5" fill="#ff4508"/><rect x="1358" y="170" width="10.5" height="10.5" fill="#ff3e06"/><rect x="1368" y="170" width="10.5" height="10.5" fill="#ff3804"/><rect x="1378" y="170" width="10.5" height="10.5" fill="#ff3202"/><rect x="1388" y="170" width="10.5" height="10.5" fill="#ff2d00"/><rect x="1398" y="170" width="10.5" height="10.5" fill="#991200"/><rect x="1408" y="170" width="10.5" height="10.5" fill="#990f00"/><rect x="1418" y="170" width="10.5" height="10.5" fill="#990d00"/><rect x="1428" y="170" width="10.5" height="10.5" fill="#990b00"/><rect x="1438" y="170" width="10.5" height="10.5" fill="#990900"/><rect x="1448" y="170" width="10.5" height="10.5" fill="#990700"/><rect x="1458" y="170" width="10.5" height="10.5" fill="#990600"/><rect x="1468" y="170" width="10.5" height="10.5" fill="#990400"/><rect x="1478" y="170" width="10.5" height="10.5" fill="#990300"/><rect x="1488" y="170" width="10.5" height="10.5" fill="#990100"/><rect x="1498" y="170" width="10.5" height="10.5" fill="#990000"/><rect x="1508" y="170" width="10.5" height="10.5" fill="#990000"/><rect x="1518" y="170" width="10.5" height="10.5" fill="#990000"/><rect x="1528" y="170" width="10.5" height="10.5" fill="#990000"/><rect x="1538" y="170" width="10.5" height="10.5" fill="#990000"/><rect x="1548" y="170" width="10.5" height="10.5" fill="#990000"/><rect x="1558" y="170" width="10.5" height="10.5" fill="#990000"/><rect x="1568" y="170" width="10.5" height="10.5" fill="#990000"/><rect x="1578" y="170" width="10.5" height="10.5" fill="#990000"/><rect x="1588" y="170" width="10.5" height="10.5" fill="#990000"/><rect x="1598" y="170" width="10.5" height="10.5" fill="#990000"/><rect x="1608" y="170" width="10.5" height="10.5" fill="#990000"/><rect x="1618" y="170" width="10.5" height="10.5" fill="#990000"/><rect x="1628" y="170" width="10.5" height="10.5" fill="#990000"/><rect x="1638" y="170" width="10.5" height="10.5" fill="#990000"/><rect x="1648" y="170" width="10.5" height="10.5" fill="#990000"/><rect x="1018" y="180" width="10.5" height="10.5" fill="#00992e"/><rect x="1028" y="180" width="10.5" height="10.5" fill="#00992e"/><rect x="1038" y="180" width="10.5" height="10.5" fill="#00992e"/><rect x="1048" y="180" width="10.5" height="10.5" fill="#00992e"/><rect x="1058" y="180" width="10.5" height="10.5" fill="#00992e"/><rect x="1068" y="180" width="10.5" height="10.5" fill="#00992e"/><rect x="1078" y="180" width="10.5" height="10.5" fill="#00992e"/><rect x="1088" y="180" width="10.5" height="10.5" fill="#00992e"/><rect x="1098" y="180" width="10.5" height="10.5" fill="#00992e"/><rect x="1108" y="180" width="10.5" height="10.5" fill="#00992e"/><rect x="1118" y="180" width="10.5" height="10.5" fill="#00992e"/><rect x="1128" y="180" width="10.5" height="10.5" fill="#00992e"/><rect x="1138" y="180" width="10.5" height="10.5" fill="#00992e"/><rect x="1148" y="180" width="10.5" height="10.5" fill="#00992e"/><rect x="1158" y="180" width="10.5" height="10.5" fill="#19ff5b"/><rect x="1168" y="180" width="10.5" height="10.5" fill="#39ff5b"/><rect x="1178" y="180" width="10.5" height="10.5" fill="#58ff5b"/><rect x="1188" y="180" width="10.5" height="10.5" fill="#77ff5b"/><rect x="1198" y="180" width="10.5" height="10.5" fill="#98ff5b"/><rect x="1208" y="180" width="10.5" height="10.5" fill="#b9ff5b"/><rect x="1218" y="180" width="10.5" height="10.5" fill="#dcff5b"/><rect x="1228" y="180" width="10.5" height="10.5" fill="#fffc5b"/><rect x="1238" y="180" width="10.5" height="10.5" fill="#ffdb4f"/><rect x="1248" y="180" width="10.5" height="10.5" fill="#ffc145"/><rect x="1258" y="180" width="10.5" height="10.5" fill="#ffaa3d"/><rect x="1268" y="180" width="10.5" height="10.5" fill="#ff9836"/><rect x="1278" y="180" width="10.5" height="10.5" fill="#ff8831"/><rect x="1288" y="180" width="10.5" height="10.5" fill="#ff7a2c"/><rect x="1298" y="180" width="10.5" height="10.5" fill="#ff6e27"/><rect x="1308" y="180" width="10.5" height="10.5" fill="#ff6324"/><rect x="1318" y="180" width="10.5" height="10.5" fill="#ff5920"/><rect x="1328" y="180" width="10.5" height="10.5" fill="#ff501d"/><rect x="1338" y="180" width="10.5" height="10.5" fill="#ff491a"/><rect x="1348" y="180" width="10.5" height="10.5" fill="#ff4118"/><rect x="1358" y="180" width="10.5" height="10.5" fill="#ff3b15"/><rect x="1368" y="180" width="10.5" height="10.5" fill="#ff3513"/><rect x="1378" y="180" width="10.5" height="10.5" fill="#ff2f11"/><rect x="1388" y="180" width="10.5" height="10.5" fill="#ff2a0f"/><rect x="1398" y="180" width="10.5" height="10.5" fill="#ff250d"/><rect x="1408" y="180" width="10.5" height="10.5" fill="#ff200c"/><rect x="1418" y="180" width="10.5" height="10.5" fill="#ff1c0a"/><rect x="1428" y="180" width="10.5" height="10.5" fill="#ff1809"/><rect x="1438" y="180" width="10.5" height="10.5" fill="#ff1407"/><rect x="1448" y="180" width="10.5" height="10.5" fill="#ff1006"/><rect x="1458" y="180" width="10.5" height="10.5" fill="#ff0c05"/><rect x="1468" y="180" width="10.5" height="10.5" fill="#ff0903"/><rect x="1478" y="180" width="10.5" height="10.5" fill="#ff0502"/><rect x="1488" y="180" width="10.5" height="10.5" fill="#ff0101"/><rect x="1498" y="180" width="10.5" height="10.5" fill="#990000"/><rect x="1508" y="180" width="10.5" height="10.5" fill="#990000"/><rect x="1518" y="180" width="10.5" height="10.5" fill="#990000"/><rect x="1528" y="180" width="10.5" height="10.5" fill="#990000"/><rect x="1538" y="180" width="10.5" height="10.5" fill="#990000"/><rect x="1548" y="180" width="10.5" height="10.5" fill="#990000"/><rect x="1558" y="180" width="10.5" height="10.5" fill="#990000"/><rect x="1568" y="180" width="10.5" height="10.5" fill="#990000"/><rect x="1578" y="180" width="10.5" height="10.5" fill="#990000"/><rect x="1588" y="180" width="10.5" height="10.5" fill="#990000"/><rect x="1598" y="180" width="10.5" height="10.5" fill="#990000"/><rect x="1608" y="180" width="10.5" height="10.5" fill="#990000"/><rect x="1618" y="180" width="10.5" height="10.5" fill="#990000"/><rect x="1628" y="180" width="10.5" height="10.5" fill="#990000"/><rect x="1638" y="180" width="10.5" height="10.5" fill="#990000"/><rect x="1648" y="180" width="10.5" height="10.5" fill="#990000"/><rect x="1018" y="190" width="10.5" height="10.5" fill="#00993a"/><rect x="1028" y="190" width="10.5" height="10.5" fill="#00993a"/><rect x="1038" y="190" width="10.5" height="10.5" fill="#00993a"/><rect x="1048" y="190" width="10.5" height="10.5" fill="#00993b"/><rect x="1058" y="190" width="10.5" height="10.5" fill="#00993b"/><rect x="1068" y="190" width="10.5" height="10.5" fill="#00993b"/><rect x="1078" y="190" width="10.5" height="10.5" fill="#00993c"/><rect x="1088" y="190" width="10.5" height="10.5" fill="#00993c"/><rect x="1098" y="190" width="10.5" height="10.5" fill="#00993c"/><rect x="1108" y="190" width="10.5" height="10.5" fill="#00993d"/><rect x="1118" y="190" width="10.5" height="10.5" fill="#00993d"/><rect x="1128" y="190" width="10.5" height="10.5" fill="#00993e"/><rect x="1138" y="190" width="10.5" height="10.5" fill="#00993e"/><rect x="1148" y="190" width="10.5" height="10.5" fill="#00993f"/><rect x="1158" y="190" width="10.5" height="10.5" fill="#14ff76"/><rect x="1168" y="190" width="10.5" height="10.5" fill="#35ff77"/><rect x="1178" y="190" width="10.5" height="10.5" fill="#56ff78"/><rect x="1188" y="190" width="10.5" height="10.5" fill="#76ff79"/><rect x="1198" y="190" width="10.5" height="10.5" fill="#97ff7a"/><rect x="1208" y="190" width="10.5" height="10.5" fill="#baff7c"/><rect x="1218" y="190" width="10.5" height="10.5" fill="#deff7d"/><rect x="1228" y="190" width="10.5" height="10.5" fill="#fff97b"/><rect x="1238" y="190" width="10.5" height="10.5" fill="#ffd76c"/><rect x="1248" y="190" width="10.5" height="10.5" fill="#ffbd60"/><rect x="1258" y="190" width="10.5" height="10.5" fill="#ffa656"/><rect x="1268" y="190" width="10.5" height="10.5" fill="#ff944d"/><rect x="1278" y="190" width="10.5" height="10.5" fill="#ff8446"/><rect x="1288" y="190" width="10.5" height="10.5" fill="#ff763f"/><rect x="1298" y="190" width="10.5" height="10.5" fill="#ff6a3a"/><rect x="1308" y="190" width="10.5" height="10.5" fill="#ff5f35"/><rect x="1318" y="190" width="10.5" height="10.5" fill="#ff5531"/><rect x="1328" y="190" width="10.5" height="10.5" fill="#ff4d2d"/><rect x="1338" y="190" width="10.5" height="10.5" fill="#ff4529"/><rect x="1348" y="190" width="10.5" height="10.5" fill="#ff3e26"/><rect x="1358" y="190" width="10.5" height="10.5" fill="#ff3723"/><rect x="1368" y="190" width="10.5" height="10.5" fill="#ff3121"/><rect x="1378" y="190" width="10.5" height="10.5" fill="#ff2c1e"/><rect x="1388" y="190" width="10.5" height="10.5" fill="#ff261c"/><rect x="1398" y="190" width="10.5" height="10.5" fill="#ff221a"/><rect x="1408" y="190" width="10.5" height="10.5" fill="#ff1d18"/><rect x="1418" y="190" width="10.5" height="10.5" fill="#ff1916"/><rect x="1428" y="190" width="10.5" height="10.5" fill="#ff1414"/><rect x="1438" y="190" width="10.5" height="10.5" fill="#ff1113"/><rect x="1448" y="190" width="10.5" height="10.5" fill="#ff0d11"/><rect x="1458" y="190" width="10.5" height="10.5" fill="#ff0910"/><rect x="1468" y="190" width="10.5" height="10.5" fill="#ff050e"/><rect x="1478" y="190" width="10.5" height="10.5" fill="#ff010d"/><rect x="1488" y="190" width="10.5" height="10.5" fill="#990004"/><rect x="1498" y="190" width="10.5" height="10.5" fill="#990004"/><rect x="1508" y="190" width="10.5" height="10.5" fill="#990003"/><rect x="1518" y="190" width="10.5" height="10.5" fill="#990003"/><rect x="1528" y="190" width="10.5" height="10.5" fill="#990002"/><rect x="1538" y="190" width="10.5" height="10.5" fill="#990002"/><rect x="1548" y="190" width="10.5" height="10.5" fill="#990001"/><rect x="1558" y="190" width="10.5" height="10.5" fill="#990001"/><rect x="1568" y="190" width="10.5" height="10.5" fill="#990001"/><rect x="1578" y="190" width="10.5" height="10.5" fill="#990000"/><rect x="1588" y="190" width="10.5" height="10.5" fill="#990000"/><rect x="1598" y="190" width="10.5" height="10.5" fill="#990000"/><rect x="1608" y="190" width="10.5" height="10.5" fill="#990000"/><rect x="1618" y="190" width="10.5" height="10.5" fill="#990000"/><rect x="1628" y="190" width="10.5" height="10.5" fill="#990000"/><rect x="1638" y="190" width="10.5" height="10.5" fill="#990000"/><rect x="1648" y="190" width="10.5" height="10.5" fill="#990000"/><rect x="1018" y="200" width="10.5" height="10.5" fill="#009946"/><rect x="1028" y="200" width="10.5" height="10.5" fill="#009947"/><rect x="1038" y="200" width="10.5" height="10.5" fill="#009947"/><rect x="1048" y="200" width="10.5" height="10.5" fill="#009948"/><rect x="1058" y="200" width="10.5" height="10.5" fill="#009948"/><rect x="1068" y="200" width="10.5" height="10.5" fill="#009949"/><rect x="1078" y="200" width="10.5" height="10.5" fill="#00994a"/><rect x="1088" y="200" width="10.5" height="10.5" fill="#00994a"/><rect x="1098" y="200" width="10.5" height="10.5" fill="#00994b"/><rect x="1108" y="200" width="10.5" height="10.5" fill="#00994c"/><rect x="1118" y="200" width="10.5" height="10.5" fill="#00994d"/><rect x="1128" y="200" width="10.5" height="10.5" fill="#00994e"/><rect x="1138" y="200" width="10.5" height="10.5" fill="#00994f"/><rect x="1148" y="200" width="10.5" height="10.5" fill="#009950"/><rect x="1158" y="200" width="10.5" height="10.5" fill="#0fff93"/><rect x="1168" y="200" width="10.5" height="10.5" fill="#32ff95"/><rect x="1178" y="200" width="10.5" height="10.5" fill="#53ff97"/><rect x="1188" y="200" width="10.5" height="10.5" fill="#75ff99"/><rect x="1198" y="200" width="10.5" height="10.5" fill="#97ff9b"/><rect x="1208" y="200" width="10.5" height="10.5" fill="#bbff9d"/><rect x="1218" y="200" width="10.5" height="10.5" fill="#e1ffa0"/><rect x="1228" y="200" width="10.5" height="10.5" fill="#fff59c"/><rect x="1238" y="200" width="10.5" height="10.5" fill="#ffd389"/><rect x="1248" y="200" width="10.5" height="10.5" fill="#ffb87a"/><rect x="1258" y="200" width="10.5" height="10.5" fill="#ffa26e"/><rect x="1268" y="200" width="10.5" height="10.5" fill="#ff9063"/><rect x="1278" y="200" width="10.5" height="10.5" fill="#ff805a"/><rect x="1288" y="200" width="10.5" height="10.5" fill="#ff7253"/><rect x="1298" y="200" width="10.5" height="10.5" fill="#ff664c"/><rect x="1308" y="200" width="10.5" height="10.5" fill="#ff5b46"/><rect x="1318" y="200" width="10.5" height="10.5" fill="#ff5241"/><rect x="1328" y="200" width="10.5" height="10.5" fill="#ff493c"/><rect x="1338" y="200" width="10.5" height="10.5" fill="#ff4138"/><rect x="1348" y="200" width="10.5" height="10.5" fill="#ff3a34"/><rect x="1358" y="200" width="10.5" height="10.5" fill="#ff3431"/><rect x="1368" y="200" width="10.5" height="10.5" fill="#ff2e2e"/><rect x="1378" y="200" width="10.5" height="10.5" fill="#ff282b"/><rect x="1388" y="200" width="10.5" height="10.5" fill="#ff2328"/><rect x="1398" y="200" width="10.5" height="10.5" fill="#ff1e26"/><rect x="1408" y="200" width="10.5" height="10.5" fill="#ff1a23"/><rect x="1418" y="200" width="10.5" height="10.5" fill="#ff1521"/><rect x="1428" y="200" width="10.5" height="10.5" fill="#ff111f"/><rect x="1438" y="200" width="10.5" height="10.5" fill="#ff0d1d"/><rect x="1448" y="200" width="10.5" height="10.5" fill="#ff091b"/><rect x="1458" y="200" width="10.5" height="10.5" fill="#ff051a"/><rect x="1468" y="200" width="10.5" height="10.5" fill="#ff0118"/><rect x="1478" y="200" width="10.5" height="10.5" fill="#990009"/><rect x="1488" y="200" width="10.5" height="10.5" fill="#990008"/><rect x="1498" y="200" width="10.5" height="10.5" fill="#990008"/><rect x="1508" y="200" width="10.5" height="10.5" fill="#990007"/><rect x="1518" y="200" width="10.5" height="10.5" fill="#990007"/><rect x="1528" y="200" width="10.5" height="10.5" fill="#990006"/><rect x="1538" y="200" width="10.5" height="10.5" fill="#990006"/><rect x="1548" y="200" width="10.5" height="10.5" fill="#990005"/><rect x="1558" y="200" width="10.5" height="10.5" fill="#990005"/><rect x="1568" y="200" width="10.5" height="10.5" fill="#990004"/><rect x="1578" y="200" width="10.5" height="10.5" fill="#990004"/><rect x="1588" y="200" width="10.5" height="10.5" fill="#990003"/><rect x="1598" y="200" width="10.5" height="10.5" fill="#990003"/><rect x="1608" y="200" width="10.5" height="10.5" fill="#990003"/><rect x="1618" y="200" width="10.5" height="10.5" fill="#990002"/><rect x="1628" y="200" width="10.5" height="10.5" fill="#990002"/><rect x="1638" y="200" width="10.5" height="10.5" fill="#990002"/><rect x="1648" y="200" width="10.5" height="10.5" fill="#990001"/><rect x="1018" y="210" width="10.5" height="10.5" fill="#009953"/><rect x="1028" y="210" width="10.5" height="10.5" fill="#009954"/><rect x="1038" y="210" width="10.5" height="10.5" fill="#009954"/><rect x="1048" y="210" width="10.5" height="10.5" fill="#009955"/><rect x="1058" y="210" width="10.5" height="10.5" fill="#009956"/><rect x="1068" y="210" width="10.5" height="10.5" fill="#009957"/><rect x="1078" y="210" width="10.5" height="10.5" fill="#009958"/><rect x="1088" y="210" width="10.5" height="10.5" fill="#00995a"/><rect x="1098" y="210" width="10.5" height="10.5" fill="#00995b"/><rect x="1108" y="210" width="10.5" height="10.5" fill="#00995c"/><rect x="1118" y="210" width="10.5" height="10.5" fill="#00995d"/><rect x="1128" y="210" width="10.5" height="10.5" fill="#00995f"/><rect x="1138" y="210" width="10.5" height="10.5" fill="#009960"/><rect x="1148" y="210" width="10.5" height="10.5" fill="#009962"/><rect x="1158" y="210" width="10.5" height="10.5" fill="#09ffb0"/><rect x="1168" y="210" width="10.5" height="10.5" fill="#2effb3"/><rect x="1178" y="210" width="10.5" height="10.5" fill="#50ffb6"/><rect x="1188" y="210" width="10.5" height="10.5" fill="#73ffb9"/><rect x="1198" y="210" width="10.5" height="10.5" fill="#97ffbc"/><rect x="1208" y="210" width="10.5" height="10.5" fill="#bcffc0"/><rect x="1218" y="210" width="10.5" height="10.5" fill="#e3ffc4"/><rect x="1228" y="210" width="10.5" height="10.5" fill="#fff1be"/><rect x="1238" y="210" width="10.5" height="10.5" fill="#ffcfa7"/><rect x="1248" y="210" width="10.5" height="10.5" fill="#ffb495"/><rect x="1258" y="210" width="10.5" height="10.5" fill="#ff9e86"/><rect x="1268" y="210" width="10.5" height="10.5" fill="#ff8b79"/><rect x="1278" y="210" width="10.5" height="10.5" fill="#ff7b6f"/><rect x="1288" y="210" width="10.5" height="10.5" fill="#ff6e66"/><rect x="1298" y="210" width="10.5" height="10.5" fill="#ff625e"/><rect x="1308" y="210" width="10.5" height="10.5" fill="#ff5757"/><rect x="1318" y="210" width="10.5" height="10.5" fill="#ff4e51"/><rect x="1328" y="210" width="10.5" height="10.5" fill="#ff454b"/><rect x="1338" y="210" width="10.5" height="10.5" fill="#ff3e47"/><rect x="1348" y="210" width="10.5" height="10.5" fill="#ff3742"/><rect x="1358" y="210" width="10.5" height="10.5" fill="#ff303e"/><rect x="1368" y="210" width="10.5" height="10.5" fill="#ff2a3a"/><rect x="1378" y="210" width="10.5" height="10.5" fill="#ff2537"/><rect x="1388" y="210" width="10.5" height="10.5" fill="#ff2034"/><rect x="1398" y="210" width="10.5" height="10.5" fill="#ff1b31"/><rect x="1408" y="210" width="10.5" height="10.5" fill="#ff162e"/><rect x="1418" y="210" width="10.5" height="10.5" fill="#ff122c"/><rect x="1428" y="210" width="10.5" height="10.5" fill="#ff0e29"/><rect x="1438" y="210" width="10.5" height="10.5" fill="#ff0a27"/><rect x="1448" y="210" width="10.5" height="10.5" fill="#ff0625"/><rect x="1458" y="210" width="10.5" height="10.5" fill="#ff0223"/><rect x="1468" y="210" width="10.5" height="10.5" fill="#99000e"/><rect x="1478" y="210" width="10.5" height="10.5" fill="#99000e"/><rect x="1488" y="210" width="10.5" height="10.5" fill="#99000d"/><rect x="1498" y="210" width="10.5" height="10.5" fill="#99000c"/><rect x="1508" y="210" width="10.5" height="10.5" fill="#99000b"/><rect x="1518" y="210" width="10.5" height="10.5" fill="#99000b"/><rect x="1528" y="210" width="10.5" height="10.5" fill="#99000a"/><rect x="1538" y="210" width="10.5" height="10.5" fill="#990009"/><rect x="1548" y="210" width="10.5" height="10.5" fill="#990009"/><rect x="1558" y="210" width="10.5" height="10.5" fill="#990008"/><rect x="1568" y="210" width="10.5" height="10.5" fill="#990008"/><rect x="1578" y="210" width="10.5" height="10.5" fill="#990007"/><rect x="1588" y="210" width="10.5" height="10.5" fill="#990007"/><rect x="1598" y="210" width="10.5" height="10.5" fill="#990006"/><rect x="1608" y="210" width="10.5" height="10.5" fill="#990006"/><rect x="1618" y="210" width="10.5" height="10.5" fill="#990005"/><rect x="1628" y="210" width="10.5" height="10.5" fill="#990005"/><rect x="1638" y="210" width="10.5" height="10.5" fill="#990004"/><rect x="1648" y="210" width="10.5" height="10.5" fill="#990004"/><rect x="1018" y="220" width="10.5" height="10.5" fill="#009960"/><rect x="1028" y="220" width="10.5" height="10.5" fill="#009961"/><rect x="1038" y="220" width="10.5" height="10.5" fill="#009962"/><rect x="1048" y="220" width="10.5" height="10.5" fill="#009964"/><rect x="1058" y="220" width="10.5" height="10.5" fill="#009965"/><rect x="1068" y="220" width="10.5" height="10.5" fill="#009966"/><rect x="1078" y="220" width="10.5" height="10.5" fill="#009968"/><rect x="1088" y="220" width="10.5" height="10.5" fill="#00996a"/><rect x="1098" y="220" width="10.5" height="10.5" fill="#00996b"/><rect x="1108" y="220" width="10.5" height="10.5" fill="#00996d"/><rect x="1118" y="220" width="10.5" height="10.5" fill="#00996f"/><rect x="1128" y="220" width="10.5" height="10.5" fill="#009971"/><rect x="1138" y="220" width="10.5" height="10.5" fill="#009973"/><rect x="1148" y="220" width="10.5" height="10.5" fill="#009975"/><rect x="1158" y="220" width="10.5" height="10.5" fill="#01ffce"/><rect x="1168" y="220" width="10.5" height="10.5" fill="#29ffd2"/><rect x="1178" y="220" width="10.5" height="10.5" fill="#4effd6"/><rect x="1188" y="220" width="10.5" height="10.5" fill="#72ffdb"/><rect x="1198" y="220" width="10.5" height="10.5" fill="#97ffe0"/><rect x="1208" y="220" width="10.5" height="10.5" fill="#beffe5"/><rect x="1218" y="220" width="10.5" height="10.5" fill="#e6ffeb"/><rect x="1228" y="220" width="10.5" height="10.5" fill="#ffede0"/><rect x="1238" y="220" width="10.5" height="10.5" fill="#ffcbc5"/><rect x="1248" y="220" width="10.5" height="10.5" fill="#ffb0b0"/><rect x="1258" y="220" width="10.5" height="10.5" fill="#ff999e"/><rect x="1268" y="220" width="10.5" height="10.5" fill="#ff8790"/><rect x="1278" y="220" width="10.5" height="10.5" fill="#ff7783"/><rect x="1288" y="220" width="10.5" height="10.5" fill="#ff6979"/><rect x="1298" y="220" width="10.5" height="10.5" fill="#ff5e70"/><rect x="1308" y="220" width="10.5" height="10.5" fill="#ff5368"/><rect x="1318" y="220" width="10.5" height="10.5" fill="#ff4a61"/><rect x="1328" y="220" width="10.5" height="10.5" fill="#ff415a"/><rect x="1338" y="220" width="10.5" height="10.5" fill="#ff3a55"/><rect x="1348" y="220" width="10.5" height="10.5" fill="#ff3350"/><rect x="1358" y="220" width="10.5" height="10.5" fill="#ff2d4b"/><rect x="1368" y="220" width="10.5" height="10.5" fill="#ff2747"/><rect x="1378" y="220" width="10.5" height="10.5" fill="#ff2143"/><rect x="1388" y="220" width="10.5" height="10.5" fill="#ff1c3f"/><rect x="1398" y="220" width="10.5" height="10.5" fill="#ff173c"/><rect x="1408" y="220" width="10.5" height="10.5" fill="#ff1339"/><rect x="1418" y="220" width="10.5" height="10.5" fill="#ff0e36"/><rect x="1428" y="220" width="10.5" height="10.5" fill="#ff0a33"/><rect x="1438" y="220" width="10.5" height="10.5" fill="#ff0631"/><rect x="1448" y="220" width="10.5" height="10.5" fill="#ff022f"/><rect x="1458" y="220" width="10.5" height="10.5" fill="#990014"/><rect x="1468" y="220" width="10.5" height="10.5" fill="#990013"/><rect x="1478" y="220" width="10.5" height="10.5" fill="#990012"/><rect x="1488" y="220" width="10.5" height="10.5" fill="#990011"/><rect x="1498" y="220" width="10.5" height="10.5" fill="#990010"/><rect x="1508" y="220" width="10.5" height="10.5" fill="#99000f"/><rect x="1518" y="220" width="10.5" height="10.5" fill="#99000f"/><rect x="1528" y="220" width="10.5" height="10.5" fill="#99000e"/><rect x="1538" y="220" width="10.5" height="10.5" fill="#99000d"/><rect x="1548" y="220" width="10.5" height="10.5" fill="#99000c"/><rect x="1558" y="220" width="10.5" height="10.5" fill="#99000c"/><rect x="1568" y="220" width="10.5" height="10.5" fill="#99000b"/><rect x="1578" y="220" width="10.5" height="10.5" fill="#99000b"/><rect x="1588" y="220" width="10.5" height="10.5" fill="#99000a"/><rect x="1598" y="220" width="10.5" height="10.5" fill="#990009"/><rect x="1608" y="220" width="10.5" height="10.5" fill="#990009"/><rect x="1618" y="220" width="10.5" height="10.5" fill="#990008"/><rect x="1628" y="220" width="10.5" height="10.5" fill="#990008"/><rect x="1638" y="220" width="10.5" height="10.5" fill="#990007"/><rect x="1648" y="220" width="10.5" height="10.5" fill="#990007"/><rect x="1018" y="230" width="10.5" height="10.5" fill="#00996e"/><rect x="1028" y="230" width="10.5" height="10.5" fill="#00996f"/><rect x="1038" y="230" width="10.5" height="10.5" fill="#009971"/><rect x="1048" y="230" width="10.5" height="10.5" fill="#009973"/><rect x="1058" y="230" width="10.5" height="10.5" fill="#009974"/><rect x="1068" y="230" width="10.5" height="10.5" fill="#009976"/><rect x="1078" y="230" width="10.5" height="10.5" fill="#009978"/><rect x="1088" y="230" width="10.5" height="10.5" fill="#00997a"/><rect x="1098" y="230" width="10.5" height="10.5" fill="#00997d"/><rect x="1108" y="230" width="10.5" height="10.5" fill="#00997f"/><rect x="1118" y="230" width="10.5" height="10.5" fill="#009982"/><rect x="1128" y="230" width="10.5" height="10.5" fill="#009984"/><rect x="1138" y="230" width="10.5" height="10.5" fill="#009987"/><rect x="1148" y="230" width="10.5" height="10.5" fill="#00998a"/><rect x="1158" y="230" width="10.5" height="10.5" fill="#00998d"/><rect x="1168" y="230" width="10.5" height="10.5" fill="#25fff3"/><rect x="1178" y="230" width="10.5" height="10.5" fill="#4afff9"/><rect x="1188" y="230" width="10.5" height="10.5" fill="#70feff"/><rect x="1198" y="230" width="10.5" height="10.5" fill="#93f8ff"/><rect x="1208" y="230" width="10.5" height="10.5" fill="#b5f2ff"/><rect x="1218" y="230" width="10.5" height="10.5" fill="#d8ebff"/><rect x="1228" y="230" width="10.5" height="10.5" fill="#fae5ff"/><rect x="1238" y="230" width="10.5" height="10.5" fill="#ffc6e3"/><rect x="1248" y="230" width="10.5" height="10.5" fill="#ffabcb"/><rect x="1258" y="230" width="10.5" height="10.5" fill="#ff95b7"/><rect x="1268" y="230" width="10.5" height="10.5" fill="#ff82a6"/><rect x="1278" y="230" width="10.5" height="10.5" fill="#ff7398"/><rect x="1288" y="230" width="10.5" height="10.5" fill="#ff658c"/><rect x="1298" y="230" width="10.5" height="10.5" fill="#ff5982"/><rect x="1308" y="230" width="10.5" height="10.5" fill="#ff4f78"/><rect x="1318" y="230" width="10.5" height="10.5" fill="#ff4670"/><rect x="1328" y="230" width="10.5" height="10.5" fill="#ff3d69"/><rect x="1338" y="230" width="10.5" height="10.5" fill="#ff3663"/><rect x="1348" y="230" width="10.5" height="10.5" fill="#ff2f5d"/><rect x="1358" y="230" width="10.5" height="10.5" fill="#ff2958"/><rect x="1368" y="230" width="10.5" height="10.5" fill="#ff2353"/><rect x="1378" y="230" width="10.5" height="10.5" fill="#ff1d4f"/><rect x="1388" y="230" width="10.5" height="10.5" fill="#ff184b"/><rect x="1398" y="230" width="10.5" height="10.5" fill="#ff1447"/><rect x="1408" y="230" width="10.5" height="10.5" fill="#ff0f43"/><rect x="1418" y="230" width="10.5" height="10.5" fill="#ff0b40"/><rect x="1428" y="230" width="10.5" height="10.5" fill="#ff063d"/><rect x="1438" y="230" width="10.5" height="10.5" fill="#ff023a"/><rect x="1448" y="230" width="10.5" height="10.5" fill="#99001a"/><rect x="1458" y="230" width="10.5" height="10.5" fill="#990019"/><rect x="1468" y="230" width="10.5" height="10.5" fill="#990018"/><rect x="1478" y="230" width="10.5" height="10.5" fill="#990017"/><rect x="1488" y="230" width="10.5" height="10.5" fill="#990016"/><rect x="1498" y="230" width="10.5" height="10.5" fill="#990015"/><rect x="1508" y="230" width="10.5" height="10.5" fill="#990014"/><rect x="1518" y="230" width="10.5" height="10.5" fill="#990013"/><rect x="1528" y="230" width="10.5" height="10.5" fill="#990012"/><rect x="1538" y="230" width="10.5" height="10.5" fill="#990011"/><rect x="1548" y="230" width="10.5" height="10.5" fill="#990010"/><rect x="1558" y="230" width="10.5" height="10.5" fill="#99000f"/><rect x="1568" y="230" width="10.5" height="10.5" fill="#99000f"/><rect x="1578" y="230" width="10.5" height="10.5" fill="#99000e"/><rect x="1588" y="230" width="10.5" height="10.5" fill="#99000d"/><rect x="1598" y="230" width="10.5" height="10.5" fill="#99000d"/><rect x="1608" y="230" width="10.5" height="10.5" fill="#99000c"/><rect x="1618" y="230" width="10.5" height="10.5" fill="#99000c"/><rect x="1628" y="230" width="10.5" height="10.5" fill="#99000b"/><rect x="1638" y="230" width="10.5" height="10.5" fill="#99000a"/><rect x="1648" y="230" width="10.5" height="10.5" fill="#99000a"/><rect x="1018" y="240" width="10.5" height="10.5" fill="#00997c"/><rect x="1028" y="240" width="10.5" height="10.5" fill="#00997e"/><rect x="1038" y="240" width="10.5" height="10.5" fill="#009980"/><rect x="1048" y="240" width="10.5" height="10.5" fill="#009982"/><rect x="1058" y="240" width="10.5" height="10.5" fill="#009985"/><rect x="1068" y="240" width="10.5" height="10.5" fill="#009987"/><rect x="1078" y="240" width="10.5" height="10.5" fill="#00998a"/><rect x="1088" y="240" width="10.5" height="10.5" fill="#00998c"/><rect x="1098" y="240" width="10.5" height="10.5" fill="#00998f"/><rect x="1108" y="240" width="10.5" height="10.5" fill="#009992"/><rect x="1118" y="240" width="10.5" height="10.5" fill="#009995"/><rect x="1128" y="240" width="10.5" height="10.5" fill="#009899"/><rect x="1138" y="240" width="10.5" height="10.5" fill="#009599"/><rect x="1148" y="240" width="10.5" height="10.5" fill="#009199"/><rect x="1158" y="240" width="10.5" height="10.5" fill="#008e99"/><rect x="1168" y="240" width="10.5" height="10.5" fill="#1de9ff"/><rect x="1178" y="240" width="10.5" height="10.5" fill="#3fe3ff"/><rect x="1188" y="240" width="10.5" height="10.5" fill="#60deff"/><rect x="1198" y="240" width="10.5" height="10.5" fill="#7fd8ff"/><rect x="1208" y="240" width="10.5" height="10.5" fill="#9ed2ff"/><rect x="1218" y="240" width="10.5" height="10.5" fill="#bdcbff"/><rect x="1228" y="240" width="10.5" height="10.5" fill="#dcc5ff"/><rect x="1238" y="240" width="10.5" height="10.5" fill="#fbbeff"/><rect x="1248" y="240" width="10.5" height="10.5" fill="#ffa6e6"/><rect x="1258" y="240" width="10.5" height="10.5" fill="#ff90cf"/><rect x="1268" y="240" width="10.5" height="10.5" fill="#ff7dbc"/><rect x="1278" y="240" width="10.5" height="10.5" fill="#ff6ead"/><rect x="1288" y="240" width="10.5" height="10.5" fill="#ff609f"/><rect x="1298" y="240" width="10.5" height="10.5" fill="#ff5593"/><rect x="1308" y="240" width="10.5" height="10.5" fill="#ff4b89"/><rect x="1318" y="240" width="10.5" height="10.5" fill="#ff4180"/><rect x="1328" y="240" width="10.5" height="10.5" fill="#ff3978"/><rect x="1338" y="240" width="10.5" height="10.5" fill="#ff3271"/><rect x="1348" y="240" width="10.5" height="10.5" fill="#ff2b6a"/><rect x="1358" y="240" width="10.5" height="10.5" fill="#ff2565"/><rect x="1368" y="240" width="10.5" height="10.5" fill="#ff1f5f"/><rect x="1378" y="240" width="10.5" height="10.5" fill="#ff1a5a"/><rect x="1388" y="240" width="10.5" height="10.5" fill="#ff1556"/><rect x="1398" y="240" width="10.5" height="10.5" fill="#ff1052"/><rect x="1408" y="240" width="10.5" height="10.5" fill="#ff0b4e"/><rect x="1418" y="240" width="10.5" height="10.5" fill="#ff074a"/><rect x="1428" y="240" width="10.5" height="10.5" fill="#ff0247"/><rect x="1438" y="240" width="10.5" height="10.5" fill="#990021"/><rect x="1448" y="240" width="10.5" height="10.5" fill="#990020"/><rect x="1458" y="240" width="10.5" height="10.5" fill="#99001e"/><rect x="1468" y="240" width="10.5" height="10.5" fill="#99001d"/><rect x="1478" y="240" width="10.5" height="10.5" fill="#99001b"/><rect x="1488" y="240" width="10.5" height="10.5" fill="#99001a"/><rect x="1498" y="240" width="10.5" height="10.5" fill="#990019"/><rect x="1508" y="240" width="10.5" height="10.5" fill="#990018"/><rect x="1518" y="240" width="10.5" height="10.5" fill="#990017"/><rect x="1528" y="240" width="10.5" height="10.5" fill="#990016"/><rect x="1538" y="240" width="10.5" height="10.5" fill="#990015"/><rect x="1548" y="240" width="10.5" height="10.5" fill="#990014"/><rect x="1558" y="240" width="10.5" height="10.5" fill="#990013"/><rect x="1568" y="240" width="10.5" height="10.5" fill="#990012"/><rect x="1578" y="240" width="10.5" height="10.5" fill="#990011"/><rect x="1588" y="240" width="10.5" height="10.5" fill="#990011"/><rect x="1598" y="240" width="10.5" height="10.5" fill="#990010"/><rect x="1608" y="240" width="10.5" height="10.5" fill="#99000f"/><rect x="1618" y="240" width="10.5" height="10.5" fill="#99000f"/><rect x="1628" y="240" width="10.5" height="10.5" fill="#99000e"/><rect x="1638" y="240" width="10.5" height="10.5" fill="#99000d"/><rect x="1648" y="240" width="10.5" height="10.5" fill="#99000d"/><rect x="1018" y="250" width="10.5" height="10.5" fill="#00998b"/><rect x="1028" y="250" width="10.5" height="10.5" fill="#00998e"/><rect x="1038" y="250" width="10.5" height="10.5" fill="#009990"/><rect x="1048" y="250" width="10.5" height="10.5" fill="#009993"/><rect x="1058" y="250" width="10.5" height="10.5" fill="#009996"/><rect x="1068" y="250" width="10.5" height="10.5" fill="#009899"/><rect x="1078" y="250" width="10.5" height="10.5" fill="#009599"/><rect x="1088" y="250" width="10.5" height="10.5" fill="#009299"/><rect x="1098" y="250" width="10.5" height="10.5" fill="#008f99"/><rect x="1108" y="250" width="10.5" height="10.5" fill="#008c99"/><rect x="1118" y="250" width="10.5" height="10.5" fill="#008999"/><rect x="1128" y="250" width="10.5" height="10.5" fill="#008599"/><rect x="1138" y="250" width="10.5" height="10.5" fill="#008299"/><rect x="1148" y="250" width="10.5" height="10.5" fill="#007f99"/><rect x="1158" y="250" width="10.5" height="10.5" fill="#007b99"/><rect x="1168" y="250" width="10.5" height="10.5" fill="#15ceff"/><rect x="1178" y="250" width="10.5" height="10.5" fill="#35c8ff"/><rect x="1188" y="250" width="10.5" height="10.5" fill="#53c3ff"/><rect x="1198" y="250" width="10.5" height="10.5" fill="#70bdff"/><rect x="1208" y="250" width="10.5" height="10.5" fill="#8cb7ff"/><rect x="1218" y="250" width="10.5" height="10.5" fill="#a8b1ff"/><rect x="1228" y="250" width="10.5" height="10.5" fill="#c3abff"/><rect x="1238" y="250" width="10.5" height="10.5" fill="#dfa5ff"/><rect x="1248" y="250" width="10.5" height="10.5" fill="#fb9fff"/><rect x="1258" y="250" width="10.5" height="10.5" fill="#ff8be8"/><rect x="1268" y="250" width="10.5" height="10.5" fill="#ff78d3"/><rect x="1278" y="250" width="10.5" height="10.5" fill="#ff69c1"/><rect x="1288" y="250" width="10.5" height="10.5" fill="#ff5cb2"/><rect x="1298" y="250" width="10.5" height="10.5" fill="#ff50a5"/><rect x="1308" y="250" width="10.5" height="10.5" fill="#ff469a"/><rect x="1318" y="250" width="10.5" height="10.5" fill="#ff3d90"/><rect x="1328" y="250" width="10.5" height="10.5" fill="#ff3587"/><rect x="1338" y="250" width="10.5" height="10.5" fill="#ff2e7f"/><rect x="1348" y="250" width="10.5" height="10.5" fill="#ff2778"/><rect x="1358" y="250" width="10.5" height="10.5" fill="#ff2171"/><rect x="1368" y="250" width="10.5" height="10.5" fill="#ff1b6b"/><rect x="1378" y="250" width="10.5" height="10.5" fill="#ff1666"/><rect x="1388" y="250" width="10.5" height="10.5" fill="#ff1161"/><rect x="1398" y="250" width="10.5" height="10.5" fill="#ff0c5d"/><rect x="1408" y="250" width="10.5" height="10.5" fill="#ff0758"/><rect x="1418" y="250" width="10.5" height="10.5" fill="#ff0254"/><rect x="1428" y="250" width="10.5" height="10.5" fill="#990029"/><rect x="1438" y="250" width="10.5" height="10.5" fill="#990027"/><rect x="1448" y="250" width="10.5" height="10.5" fill="#990025"/><rect x="1458" y="250" width="10.5" height="10.5" fill="#990023"/><rect x="1468" y="250" width="10.5" height="10.5" fill="#990021"/><rect x="1478" y="250" width="10.5" height="10.5" fill="#990020"/><rect x="1488" y="250" width="10.5" height="10.5" fill="#99001f"/><rect x="1498" y="250" width="10.5" height="10.5" fill="#99001d"/><rect x="1508" y="250" width="10.5" height="10.5" fill="#99001c"/><rect x="1518" y="250" width="10.5" height="10.5" fill="#99001b"/><rect x="1528" y="250" width="10.5" height="10.5" fill="#99001a"/><rect x="1538" y="250" width="10.5" height="10.5" fill="#990019"/><rect x="1548" y="250" width="10.5" height="10.5" fill="#990018"/><rect x="1558" y="250" width="10.5" height="10.5" fill="#990017"/><rect x="1568" y="250" width="10.5" height="10.5" fill="#990016"/><rect x="1578" y="250" width="10.5" height="10.5" fill="#990015"/><rect x="1588" y="250" width="10.5" height="10.5" fill="#990014"/><rect x="1598" y="250" width="10.5" height="10.5" fill="#990013"/><rect x="1608" y="250" width="10.5" height="10.5" fill="#990013"/><rect x="1618" y="250" width="10.5" height="10.5" fill="#990012"/><rect x="1628" y="250" width="10.5" height="10.5" fill="#990011"/><rect x="1638" y="250" width="10.5" height="10.5" fill="#990011"/><rect x="1648" y="250" width="10.5" height="10.5" fill="#990010"/><rect x="1018" y="260" width="10.5" height="10.5" fill="#009699"/><rect x="1028" y="260" width="10.5" height="10.5" fill="#009399"/><rect x="1038" y="260" width="10.5" height="10.5" fill="#009099"/><rect x="1048" y="260" width="10.5" height="10.5" fill="#008d99"/><rect x="1058" y="260" width="10.5" height="10.5" fill="#008b99"/><rect x="1068" y="260" width="10.5" height="10.5" fill="#008899"/><rect x="1078" y="260" width="10.5" height="10.5" fill="#008599"/><rect x="1088" y="260" width="10.5" height="10.5" fill="#008299"/><rect x="1098" y="260" width="10.5" height="10.5" fill="#007f99"/><rect x="1108" y="260" width="10.5" height="10.5" fill="#007c99"/><rect x="1118" y="260" width="10.5" height="10.5" fill="#007999"/><rect x="1128" y="260" width="10.5" height="10.5" fill="#007699"/><rect x="1138" y="260" width="10.5" height="10.5" fill="#007299"/><rect x="1148" y="260" width="10.5" height="10.5" fill="#006f99"/><rect x="1158" y="260" width="10.5" height="10.5" fill="#006c99"/><rect x="1168" y="260" width="10.5" height="10.5" fill="#0eb7ff"/><rect x="1178" y="260" width="10.5" height="10.5" fill="#2cb2ff"/><rect x="1188" y="260" width="10.5" height="10.5" fill="#48adff"/><rect x="1198" y="260" width="10.5" height="10.5" fill="#62a7ff"/><rect x="1208" y="260" width="10.5" height="10.5" fill="#7ca2ff"/><rect x="1218" y="260" width="10.5" height="10.5" fill="#969cff"/><rect x="1228" y="260" width="10.5" height="10.5" fill="#af96ff"/><rect x="1238" y="260" width="10.5" height="10.5" fill="#c990ff"/><rect x="1248" y="260" width="10.5" height="10.5" fill="#e28aff"/><rect x="1258" y="260" width="10.5" height="10.5" fill="#fb84ff"/><rect x="1268" y="260" width="10.5" height="10.5" fill="#ff73ea"/><rect x="1278" y="260" width="10.5" height="10.5" fill="#ff64d7"/><rect x="1288" y="260" width="10.5" height="10.5" fill="#ff57c6"/><rect x="1298" y="260" width="10.5" height="10.5" fill="#ff4bb7"/><rect x="1308" y="260" width="10.5" height="10.5" fill="#ff41ab"/><rect x="1318" y="260" width="10.5" height="10.5" fill="#ff39a0"/><rect x="1328" y="260" width="10.5" height="10.5" fill="#ff3196"/><rect x="1338" y="260" width="10.5" height="10.5" fill="#ff298d"/><rect x="1348" y="260" width="10.5" height="10.5" fill="#ff2385"/><rect x="1358" y="260" width="10.5" height="10.5" fill="#ff1d7e"/><rect x="1368" y="260" width="10.5" height="10.5" fill="#ff1778"/><rect x="1378" y="260" width="10.5" height="10.5" fill="#ff1272"/><rect x="1388" y="260" width="10.5" height="10.5" fill="#ff0c6c"/><rect x="1398" y="260" width="10.5" height="10.5" fill="#ff0867"/><rect x="1408" y="260" width="10.5" height="10.5" fill="#ff0363"/><rect x="1418" y="260" width="10.5" height="10.5" fill="#990031"/><rect x="1428" y="260" width="10.5" height="10.5" fill="#99002e"/><rect x="1438" y="260" width="10.5" height="10.5" fill="#99002c"/><rect x="1448" y="260" width="10.5" height="10.5" fill="#99002a"/><rect x="1458" y="260" width="10.5" height="10.5" fill="#990028"/><rect x="1468" y="260" width="10.5" height="10.5" fill="#990026"/><rect x="1478" y="260" width="10.5" height="10.5" fill="#990025"/><rect x="1488" y="260" width="10.5" height="10.5" fill="#990023"/><rect x="1498" y="260" width="10.5" height="10.5" fill="#990022"/><rect x="1508" y="260" width="10.5" height="10.5" fill="#990020"/><rect x="1518" y="260" width="10.5" height="10.5" fill="#99001f"/><rect x="1528" y="260" width="10.5" height="10.5" fill="#99001e"/><rect x="1538" y="260" width="10.5" height="10.5" fill="#99001d"/><rect x="1548" y="260" width="10.5" height="10.5" fill="#99001b"/><rect x="1558" y="260" width="10.5" height="10.5" fill="#99001a"/><rect x="1568" y="260" width="10.5" height="10.5" fill="#990019"/><rect x="1578" y="260" width="10.5" height="10.5" fill="#990018"/><rect x="1588" y="260" width="10.5" height="10.5" fill="#990018"/><rect x="1598" y="260" width="10.5" height="10.5" fill="#990017"/><rect x="1608" y="260" width="10.5" height="10.5" fill="#990016"/><rect x="1618" y="260" width="10.5" height="10.5" fill="#990015"/><rect x="1628" y="260" width="10.5" height="10.5" fill="#990014"/><rect x="1638" y="260" width="10.5" height="10.5" fill="#990014"/><rect x="1648" y="260" width="10.5" height="10.5" fill="#990013"/><rect x="1018" y="270" width="10.5" height="10.5" fill="#008799"/><rect x="1028" y="270" width="10.5" height="10.5" fill="#008499"/><rect x="1038" y="270" width="10.5" height="10.5" fill="#008299"/><rect x="1048" y="270" width="10.5" height="10.5" fill="#007f99"/><rect x="1058" y="270" width="10.5" height="10.5" fill="#007c99"/><rect x="1068" y="270" width="10.5" height="10.5" fill="#007a99"/><rect x="1078" y="270" width="10.5" height="10.5" fill="#007799"/><rect x="1088" y="270" width="10.5" height="10.5" fill="#007499"/><rect x="1098" y="270" width="10.5" height="10.5" fill="#007199"/><rect x="1108" y="270" width="10.5" height="10.5" fill="#006e99"/><rect x="1118" y="270" width="10.5" height="10.5" fill="#006b99"/><rect x="1128" y="270" width="10.5" height="10.5" fill="#006899"/><rect x="1138" y="270" width="10.5" height="10.5" fill="#006599"/><rect x="1148" y="270" width="10.5" height="10.5" fill="#006299"/><rect x="1158" y="270" width="10.5" height="10.5" fill="#005f99"/><rect x="1168" y="270" width="10.5" height="10.5" fill="#08a4ff"/><rect x="1178" y="270" width="10.5" height="10.5" fill="#259fff"/><rect x="1188" y="270" width="10.5" height="10.5" fill="#3f9aff"/><rect x="1198" y="270" width="10.5" height="10.5" fill="#5795ff"/><rect x="1208" y="270" width="10.5" height="10.5" fill="#6f8fff"/><rect x="1218" y="270" width="10.5" height="10.5" fill="#878aff"/><rect x="1228" y="270" width="10.5" height="10.5" fill="#9e84ff"/><rect x="1238" y="270" width="10.5" height="10.5" fill="#b67fff"/><rect x="1248" y="270" width="10.5" height="10.5" fill="#cd79ff"/><rect x="1258" y="270" width="10.5" height="10.5" fill="#e473ff"/><rect x="1268" y="270" width="10.5" height="10.5" fill="#fb6dff"/><rect x="1278" y="270" width="10.5" height="10.5" fill="#ff5fec"/><rect x="1288" y="270" width="10.5" height="10.5" fill="#ff52d9"/><rect x="1298" y="270" width="10.5" height="10.5" fill="#ff47ca"/><rect x="1308" y="270" width="10.5" height="10.5" fill="#ff3dbc"/><rect x="1318" y="270" width="10.5" height="10.5" fill="#ff34b0"/><rect x="1328" y="270" width="10.5" height="10.5" fill="#ff2ca5"/><rect x="1338" y="270" width="10.5" height="10.5" fill="#ff259b"/><rect x="1348" y="270" width="10.5" height="10.5" fill="#ff1e93"/><rect x="1358" y="270" width="10.5" height="10.5" fill="#ff188b"/><rect x="1368" y="270" width="10.5" height="10.5" fill="#ff1384"/><rect x="1378" y="270" width="10.5" height="10.5" fill="#ff0d7d"/><rect x="1388" y="270" width="10.5" height="10.5" fill="#ff0877"/><rect x="1398" y="270" width="10.5" height="10.5" fill="#ff0372"/><rect x="1408" y="270" width="10.5" height="10.5" fill="#990039"/><rect x="1418" y="270" width="10.5" height="10.5" fill="#990037"/><rect x="1428" y="270" width="10.5" height="10.5" fill="#990034"/><rect x="1438" y="270" width="10.5" height="10.5" fill="#990031"/><rect x="1448" y="270" width="10.5" height="10.5" fill="#99002f"/><rect x="1458" y="270" width="10.5" height="10.5" fill="#99002d"/><rect x="1468" y="270" width="10.5" height="10.5" fill="#99002b"/><rect x="1478" y="270" width="10.5" height="10.5" fill="#990029"/><rect x="1488" y="270" width="10.5" height="10.5" fill="#990028"/><rect x="1498" y="270" width="10.5" height="10.5" fill="#990026"/><rect x="1508" y="270" width="10.5" height="10.5" fill="#990025"/><rect x="1518" y="270" width="10.5" height="10.5" fill="#990023"/><rect x="1528" y="270" width="10.5" height="10.5" fill="#990022"/><rect x="1538" y="270" width="10.5" height="10.5" fill="#990020"/><rect x="1548" y="270" width="10.5" height="10.5" fill="#99001f"/><rect x="1558" y="270" width="10.5" height="10.5" fill="#99001e"/><rect x="1568" y="270" width="10.5" height="10.5" fill="#99001d"/><rect x="1578" y="270" width="10.5" height="10.5" fill="#99001c"/><rect x="1588" y="270" width="10.5" height="10.5" fill="#99001b"/><rect x="1598" y="270" width="10.5" height="10.5" fill="#99001a"/><rect x="1608" y="270" width="10.5" height="10.5" fill="#990019"/><rect x="1618" y="270" width="10.5" height="10.5" fill="#990018"/><rect x="1628" y="270" width="10.5" height="10.5" fill="#990017"/><rect x="1638" y="270" width="10.5" height="10.5" fill="#990017"/><rect x="1648" y="270" width="10.5" height="10.5" fill="#990016"/><rect x="1018" y="280" width="10.5" height="10.5" fill="#007a99"/><rect x="1028" y="280" width="10.5" height="10.5" fill="#007899"/><rect x="1038" y="280" width="10.5" height="10.5" fill="#007599"/><rect x="1048" y="280" width="10.5" height="10.5" fill="#007399"/><rect x="1058" y="280" width="10.5" height="10.5" fill="#007099"/><rect x="1068" y="280" width="10.5" height="10.5" fill="#006e99"/><rect x="1078" y="280" width="10.5" height="10.5" fill="#006b99"/><rect x="1088" y="280" width="10.5" height="10.5" fill="#006899"/><rect x="1098" y="280" width="10.5" height="10.5" fill="#006699"/><rect x="1108" y="280" width="10.5" height="10.5" fill="#006399"/><rect x="1118" y="280" width="10.5" height="10.5" fill="#006099"/><rect x="1128" y="280" width="10.5" height="10.5" fill="#005d99"/><rect x="1138" y="280" width="10.5" height="10.5" fill="#005a99"/><rect x="1148" y="280" width="10.5" height="10.5" fill="#005799"/><rect x="1158" y="280" width="10.5" height="10.5" fill="#005499"/><rect x="1168" y="280" width="10.5" height="10.5" fill="#0293ff"/><rect x="1178" y="280" width="10.5" height="10.5" fill="#1e8fff"/><rect x="1188" y="280" width="10.5" height="10.5" fill="#378aff"/><rect x="1198" y="280" width="10.5" height="10.5" fill="#4e85ff"/><rect x="1208" y="280" width="10.5" height="10.5" fill="#6480ff"/><rect x="1218" y="280" width="10.5" height="10.5" fill="#7a7aff"/><rect x="1228" y="280" width="10.5" height="10.5" fill="#9075ff"/><rect x="1238" y="280" width="10.5" height="10.5" fill="#a56fff"/><rect x="1248" y="280" width="10.5" height="10.5" fill="#bb6aff"/><rect x="1258" y="280" width="10.5" height="10.5" fill="#d064ff"/><rect x="1268" y="280" width="10.5" height="10.5" fill="#e65eff"/><rect x="1278" y="280" width="10.5" height="10.5" fill="#fb58ff"/><rect x="1288" y="280" width="10.5" height="10.5" fill="#ff4ded"/><rect x="1298" y="280" width="10.5" height="10.5" fill="#ff41dc"/><rect x="1308" y="280" width="10.5" height="10.5" fill="#ff38cd"/><rect x="1318" y="280" width="10.5" height="10.5" fill="#ff2fc0"/><rect x="1328" y="280" width="10.5" height="10.5" fill="#ff27b4"/><rect x="1338" y="280" width="10.5" height="10.5" fill="#ff20a9"/><rect x="1348" y="280" width="10.5" height="10.5" fill="#ff1aa0"/><rect x="1358" y="280" width="10.5" height="10.5" fill="#ff1498"/><rect x="1368" y="280" width="10.5" height="10.5" fill="#ff0e90"/><rect x="1378" y="280" width="10.5" height="10.5" fill="#ff0989"/><rect x="1388" y="280" width="10.5" height="10.5" fill="#ff0383"/><rect x="1398" y="280" width="10.5" height="10.5" fill="#990043"/><rect x="1408" y="280" width="10.5" height="10.5" fill="#990040"/><rect x="1418" y="280" width="10.5" height="10.5" fill="#99003d"/><rect x="1428" y="280" width="10.5" height="10.5" fill="#99003a"/><rect x="1438" y="280" width="10.5" height="10.5" fill="#990037"/><rect x="1448" y="280" width="10.5" height="10.5" fill="#990035"/><rect x="1458" y="280" width="10.5" height="10.5" fill="#990032"/><rect x="1468" y="280" width="10.5" height="10.5" fill="#990030"/><rect x="1478" y="280" width="10.5" height="10.5" fill="#99002e"/><rect x="1488" y="280" width="10.5" height="10.5" fill="#99002c"/><rect x="1498" y="280" width="10.5" height="10.5" fill="#99002b"/><rect x="1508" y="280" width="10.5" height="10.5" fill="#990029"/><rect x="1518" y="280" width="10.5" height="10.5" fill="#990027"/><rect x="1528" y="280" width="10.5" height="10.5" fill="#990026"/><rect x="1538" y="280" width="10.5" height="10.5" fill="#990024"/><rect x="1548" y="280" width="10.5" height="10.5" fill="#990023"/><rect x="1558" y="280" width="10.5" height="10.5" fill="#990022"/><rect x="1568" y="280" width="10.5" height="10.5" fill="#990021"/><rect x="1578" y="280" width="10.5" height="10.5" fill="#990020"/><rect x="1588" y="280" width="10.5" height="10.5" fill="#99001e"/><rect x="1598" y="280" width="10.5" height="10.5" fill="#99001d"/><rect x="1608" y="280" width="10.5" height="10.5" fill="#99001c"/><rect x="1618" y="280" width="10.5" height="10.5" fill="#99001c"/><rect x="1628" y="280" width="10.5" height="10.5" fill="#99001b"/><rect x="1638" y="280" width="10.5" height="10.5" fill="#99001a"/><rect x="1648" y="280" width="10.5" height="10.5" fill="#990019"/><rect x="1018" y="290" width="10.5" height="10.5" fill="#007099"/><rect x="1028" y="290" width="10.5" height="10.5" fill="#006d99"/><rect x="1038" y="290" width="10.5" height="10.5" fill="#006b99"/><rect x="1048" y="290" width="10.5" height="10.5" fill="#006899"/><rect x="1058" y="290" width="10.5" height="10.5" fill="#006699"/><rect x="1068" y="290" width="10.5" height="10.5" fill="#006399"/><rect x="1078" y="290" width="10.5" height="10.5" fill="#006199"/><rect x="1088" y="290" width="10.5" height="10.5" fill="#005e99"/><rect x="1098" y="290" width="10.5" height="10.5" fill="#005b99"/><rect x="1108" y="290" width="10.5" height="10.5" fill="#005999"/><rect x="1118" y="290" width="10.5" height="10.5" fill="#005699"/><rect x="1128" y="290" width="10.5" height="10.5" fill="#005399"/><rect x="1138" y="290" width="10.5" height="10.5" fill="#005199"/><rect x="1148" y="290" width="10.5" height="10.5" fill="#004e99"/><rect x="1158" y="290" width="10.5" height="10.5" fill="#004b99"/><rect x="1168" y="290" width="10.5" height="10.5" fill="#004899"/><rect x="1178" y="290" width="10.5" height="10.5" fill="#1880ff"/><rect x="1188" y="290" width="10.5" height="10.5" fill="#307cff"/><rect x="1198" y="290" width="10.5" height="10.5" fill="#4577ff"/><rect x="1208" y="290" width="10.5" height="10.5" fill="#5a72ff"/><rect x="1218" y="290" width="10.5" height="10.5" fill="#6f6dff"/><rect x="1228" y="290" width="10.5" height="10.5" fill="#8368ff"/><rect x="1238" y="290" width="10.5" height="10.5" fill="#9862ff"/><rect x="1248" y="290" width="10.5" height="10.5" fill="#ac5dff"/><rect x="1258" y="290" width="10.5" height="10.5" fill="#c058ff"/><rect x="1268" y="290" width="10.5" height="10.5" fill="#d452ff"/><rect x="1278" y="290" width="10.5" height="10.5" fill="#e74cff"/><rect x="1288" y="290" width="10.5" height="10.5" fill="#fb46ff"/><rect x="1298" y="290" width="10.5" height="10.5" fill="#ff3cef"/><rect x="1308" y="290" width="10.5" height="10.5" fill="#ff33de"/><rect x="1318" y="290" width="10.5" height="10.5" fill="#ff2ad0"/><rect x="1328" y="290" width="10.5" height="10.5" fill="#ff22c3"/><rect x="1338" y="290" width="10.5" height="10.5" fill="#ff1bb8"/><rect x="1348" y="290" width="10.5" height="10.5" fill="#ff15ae"/><rect x="1358" y="290" width="10.5" height="10.5" fill="#ff0fa4"/><rect x="1368" y="290" width="10.5" height="10.5" fill="#ff099c"/><rect x="1378" y="290" width="10.5" height="10.5" fill="#ff0395"/><rect x="1388" y="290" width="10.5" height="10.5" fill="#99004e"/><rect x="1398" y="290" width="10.5" height="10.5" fill="#99004a"/><rect x="1408" y="290" width="10.5" height="10.5" fill="#990046"/><rect x="1418" y="290" width="10.5" height="10.5" fill="#990043"/><rect x="1428" y="290" width="10.5" height="10.5" fill="#990040"/><rect x="1438" y="290" width="10.5" height="10.5" fill="#99003d"/><rect x="1448" y="290" width="10.5" height="10.5" fill="#99003a"/><rect x="1458" y="290" width="10.5" height="10.5" fill="#990038"/><rect x="1468" y="290" width="10.5" height="10.5" fill="#990035"/><rect x="1478" y="290" width="10.5" height="10.5" fill="#990033"/><rect x="1488" y="290" width="10.5" height="10.5" fill="#990031"/><rect x="1498" y="290" width="10.5" height="10.5" fill="#99002f"/><rect x="1508" y="290" width="10.5" height="10.5" fill="#99002d"/><rect x="1518" y="290" width="10.5" height="10.5" fill="#99002c"/><rect x="1528" y="290" width="10.5" height="10.5" fill="#99002a"/><rect x="1538" y="290" width="10.5" height="10.5" fill="#990028"/><rect x="1548" y="290" width="10.5" height="10.5" fill="#990027"/><rect x="1558" y="290" width="10.5" height="10.5" fill="#990026"/><rect x="1568" y="290" width="10.5" height="10.5" fill="#990024"/><rect x="1578" y="290" width="10.5" height="10.5" fill="#990023"/><rect x="1588" y="290" width="10.5" height="10.5" fill="#990022"/><rect x="1598" y="290" width="10.5" height="10.5" fill="#990021"/><rect x="1608" y="290" width="10.5" height="10.5" fill="#990020"/><rect x="1618" y="290" width="10.5" height="10.5" fill="#99001f"/><rect x="1628" y="290" width="10.5" height="10.5" fill="#99001e"/><rect x="1638" y="290" width="10.5" height="10.5" fill="#99001d"/><rect x="1648" y="290" width="10.5" height="10.5" fill="#99001c"/><rect x="1018" y="300" width="10.5" height="10.5" fill="#006699"/><rect x="1028" y="300" width="10.5" height="10.5" fill="#006499"/><rect x="1038" y="300" width="10.5" height="10.5" fill="#006199"/><rect x="1048" y="300" width="10.5" height="10.5" fill="#005f99"/><rect x="1058" y="300" width="10.5" height="10.5" fill="#005d99"/><rect x="1068" y="300" width="10.5" height="10.5" fill="#005a99"/><rect x="1078" y="300" width="10.5" height="10.5" fill="#005899"/><rect x="1088" y="300" width="10.5" height="10.5" fill="#005599"/><rect x="1098" y="300" width="10.5" height="10.5" fill="#005399"/><rect x="1108" y="300" width="10.5" height="10.5" fill="#005099"/><rect x="1118" y="300" width="10.5" height="10.5" fill="#004e99"/><rect x="1128" y="300" width="10.5" height="10.5" fill="#004b99"/><rect x="1138" y="300" width="10.5" height="10.5" fill="#004899"/><rect x="1148" y="300" width="10.5" height="10.5" fill="#004699"/><rect x="1158" y="300" width="10.5" height="10.5" fill="#004399"/><rect x="1168" y="300" width="10.5" height="10.5" fill="#004099"/><rect x="1178" y="300" width="10.5" height="10.5" fill="#1374ff"/><rect x="1188" y="300" width="10.5" height="10.5" fill="#296fff"/><rect x="1198" y="300" width="10.5" height="10.5" fill="#3e6bff"/><rect x="1208" y="300" width="10.5" height="10.5" fill="#5266ff"/><rect x="1218" y="300" width="10.5" height="10.5" fill="#6561ff"/><rect x="1228" y="300" width="10.5" height="10.5" fill="#785cff"/><rect x="1238" y="300" width="10.5" height="10.5" fill="#8b57ff"/><rect x="1248" y="300" width="10.5" height="10.5" fill="#9e52ff"/><rect x="1258" y="300" width="10.5" height="10.5" fill="#b14dff"/><rect x="1268" y="300" width="10.5" height="10.5" fill="#c447ff"/><rect x="1278" y="300" width="10.5" height="10.5" fill="#d642ff"/><rect x="1288" y="300" width="10.5" height="10.5" fill="#e93cff"/><rect x="1298" y="300" width="10.5" height="10.5" fill="#fc36ff"/><rect x="1308" y="300" width="10.5" height="10.5" fill="#ff2df0"/><rect x="1318" y="300" width="10.5" height="10.5" fill="#ff25e0"/><rect x="1328" y="300" width="10.5" height="10.5" fill="#ff1dd2"/><rect x="1338" y="300" width="10.5" height="10.5" fill="#ff16c6"/><rect x="1348" y="300" width="10.5" height="10.5" fill="#ff10bb"/><rect x="1358" y="300" width="10.5" height="10.5" fill="#ff0ab1"/><rect x="1368" y="300" width="10.5" height="10.5" fill="#ff04a9"/><rect x="1378" y="300" width="10.5" height="10.5" fill="#99005a"/><rect x="1388" y="300" width="10.5" height="10.5" fill="#990055"/><rect x="1398" y="300" width="10.5" height="10.5" fill="#990050"/><rect x="1408" y="300" width="10.5" height="10.5" fill="#99004d"/><rect x="1418" y="300" width="10.5" height="10.5" fill="#990049"/><rect x="1428" y="300" width="10.5" height="10.5" fill="#990046"/><rect x="1438" y="300" width="10.5" height="10.5" fill="#990042"/><rect x="1448" y="300" width="10.5" height="10.5" fill="#99003f"/><rect x="1458" y="300" width="10.5" height="10.5" fill="#99003d"/><rect x="1468" y="300" width="10.5" height="10.5" fill="#99003a"/><rect x="1478" y="300" width="10.5" height="10.5" fill="#990038"/><rect x="1488" y="300" width="10.5" height="10.5" fill="#990036"/><rect x="1498" y="300" width="10.5" height="10.5" fill="#990034"/><rect x="1508" y="300" width="10.5" height="10.5" fill="#990032"/><rect x="1518" y="300" width="10.5" height="10.5" fill="#990030"/><rect x="1528" y="300" width="10.5" height="10.5" fill="#99002e"/><rect x="1538" y="300" width="10.5" height="10.5" fill="#99002d"/><rect x="1548" y="300" width="10.5" height="10.5" fill="#99002b"/><rect x="1558" y="300" width="10.5" height="10.5" fill="#99002a"/><rect x="1568" y="300" width="10.5" height="10.5" fill="#990028"/><rect x="1578" y="300" width="10.5" height="10.5" fill="#990027"/><rect x="1588" y="300" width="10.5" height="10.5" fill="#990026"/><rect x="1598" y="300" width="10.5" height="10.5" fill="#990024"/><rect x="1608" y="300" width="10.5" height="10.5" fill="#990023"/><rect x="1618" y="300" width="10.5" height="10.5" fill="#990022"/><rect x="1628" y="300" width="10.5" height="10.5" fill="#990021"/><rect x="1638" y="300" width="10.5" height="10.5" fill="#990020"/><rect x="1648" y="300" width="10.5" height="10.5" fill="#99001f"/><rect x="1018" y="310" width="10.5" height="10.5" fill="#005d99"/><rect x="1028" y="310" width="10.5" height="10.5" fill="#005b99"/><rect x="1038" y="310" width="10.5" height="10.5" fill="#005999"/><rect x="1048" y="310" width="10.5" height="10.5" fill="#005799"/><rect x="1058" y="310" width="10.5" height="10.5" fill="#005499"/><rect x="1068" y="310" width="10.5" height="10.5" fill="#005299"/><rect x="1078" y="310" width="10.5" height="10.5" fill="#005099"/><rect x="1088" y="310" width="10.5" height="10.5" fill="#004d99"/><rect x="1098" y="310" width="10.5" height="10.5" fill="#004b99"/><rect x="1108" y="310" width="10.5" height="10.5" fill="#004999"/><rect x="1118" y="310" width="10.5" height="10.5" fill="#004699"/><rect x="1128" y="310" width="10.5" height="10.5" fill="#004499"/><rect x="1138" y="310" width="10.5" height="10.5" fill="#004199"/><rect x="1148" y="310" width="10.5" height="10.5" fill="#003f99"/><rect x="1158" y="310" width="10.5" height="10.5" fill="#003c99"/><rect x="1168" y="310" width="10.5" height="10.5" fill="#003999"/><rect x="1178" y="310" width="10.5" height="10.5" fill="#0f69ff"/><rect x="1188" y="310" width="10.5" height="10.5" fill="#2464ff"/><rect x="1198" y="310" width="10.5" height="10.5" fill="#3760ff"/><rect x="1208" y="310" width="10.5" height="10.5" fill="#4a5bff"/><rect x="1218" y="310" width="10.5" height="10.5" fill="#5d56ff"/><rect x="1228" y="310" width="10.5" height="10.5" fill="#6f52ff"/><rect x="1238" y="310" width="10.5" height="10.5" fill="#814dff"/><rect x="1248" y="310" width="10.5" height="10.5" fill="#9248ff"/><rect x="1258" y="310" width="10.5" height="10.5" fill="#a443ff"/><rect x="1268" y="310" width="10.5" height="10.5" fill="#b63eff"/><rect x="1278" y="310" width="10.5" height="10.5" fill="#c738ff"/><rect x="1288" y="310" width="10.5" height="10.5" fill="#d933ff"/><rect x="1298" y="310" width="10.5" height="10.5" fill="#ea2dff"/><rect x="1308" y="310" width="10.5" height="10.5" fill="#fc27ff"/><rect x="1318" y="310" width="10.5" height="10.5" fill="#ff1ff1"/><rect x="1328" y="310" width="10.5" height="10.5" fill="#ff18e2"/><rect x="1338" y="310" width="10.5" height="10.5" fill="#ff11d5"/><rect x="1348" y="310" width="10.5" height="10.5" fill="#ff0ac9"/><rect x="1358" y="310" width="10.5" height="10.5" fill="#ff04be"/><rect x="1368" y="310" width="10.5" height="10.5" fill="#990067"/><rect x="1378" y="310" width="10.5" height="10.5" fill="#990061"/><rect x="1388" y="310" width="10.5" height="10.5" fill="#99005c"/><rect x="1398" y="310" width="10.5" height="10.5" fill="#990057"/><rect x="1408" y="310" width="10.5" height="10.5" fill="#990053"/><rect x="1418" y="310" width="10.5" height="10.5" fill="#99004f"/><rect x="1428" y="310" width="10.5" height="10.5" fill="#99004c"/><rect x="1438" y="310" width="10.5" height="10.5" fill="#990048"/><rect x="1448" y="310" width="10.5" height="10.5" fill="#990045"/><rect x="1458" y="310" width="10.5" height="10.5" fill="#990042"/><rect x="1468" y="310" width="10.5" height="10.5" fill="#99003f"/><rect x="1478" y="310" width="10.5" height="10.5" fill="#99003d"/><rect x="1488" y="310" width="10.5" height="10.5" fill="#99003b"/><rect x="1498" y="310" width="10.5" height="10.5" fill="#990038"/><rect x="1508" y="310" width="10.5" height="10.5" fill="#990036"/><rect x="1518" y="310" width="10.5" height="10.5" fill="#990034"/><rect x="1528" y="310" width="10.5" height="10.5" fill="#990032"/><rect x="1538" y="310" width="10.5" height="10.5" fill="#990031"/><rect x="1548" y="310" width="10.5" height="10.5" fill="#99002f"/><rect x="1558" y="310" width="10.5" height="10.5" fill="#99002d"/><rect x="1568" y="310" width="10.5" height="10.5" fill="#99002c"/><rect x="1578" y="310" width="10.5" height="10.5" fill="#99002a"/><rect x="1588" y="310" width="10.5" height="10.5" fill="#990029"/><rect x="1598" y="310" width="10.5" height="10.5" fill="#990028"/><rect x="1608" y="310" width="10.5" height="10.5" fill="#990027"/><rect x="1618" y="310" width="10.5" height="10.5" fill="#990025"/><rect x="1628" y="310" width="10.5" height="10.5" fill="#990024"/><rect x="1638" y="310" width="10.5" height="10.5" fill="#990023"/><rect x="1648" y="310" width="10.5" height="10.5" fill="#990022"/><rect x="1018" y="320" width="10.5" height="10.5" fill="#005699"/><rect x="1028" y="320" width="10.5" height="10.5" fill="#005499"/><rect x="1038" y="320" width="10.5" height="10.5" fill="#005299"/><rect x="1048" y="320" width="10.5" height="10.5" fill="#004f99"/><rect x="1058" y="320" width="10.5" height="10.5" fill="#004d99"/><rect x="1068" y="320" width="10.5" height="10.5" fill="#004b99"/><rect x="1078" y="320" width="10.5" height="10.5" fill="#004999"/><rect x="1088" y="320" width="10.5" height="10.5" fill="#004699"/><rect x="1098" y="320" width="10.5" height="10.5" fill="#004499"/><rect x="1108" y="320" width="10.5" height="10.5" fill="#004299"/><rect x="1118" y="320" width="10.5" height="10.5" fill="#003f99"/><rect x="1128" y="320" width="10.5" height="10.5" fill="#003d99"/><rect x="1138" y="320" width="10.5" height="10.5" fill="#003b99"/><rect x="1148" y="320" width="10.5" height="10.5" fill="#003899"/><rect x="1158" y="320" width="10.5" height="10.5" fill="#003699"/><rect x="1168" y="320" width="10.5" height="10.5" fill="#003399"/><rect x="1178" y="320" width="10.5" height="10.5" fill="#0a5fff"/><rect x="1188" y="320" width="10.5" height="10.5" fill="#1f5aff"/><rect x="1198" y="320" width="10.5" height="10.5" fill="#3256ff"/><rect x="1208" y="320" width="10.5" height="10.5" fill="#4452ff"/><rect x="1218" y="320" width="10.5" height="10.5" fill="#554dff"/><rect x="1228" y="320" width="10.5" height="10.5" fill="#6648ff"/><rect x="1238" y="320" width="10.5" height="10.5" fill="#7744ff"/><rect x="1248" y="320" width="10.5" height="10.5" fill="#883fff"/><rect x="1258" y="320" width="10.5" height="10.5" fill="#993aff"/><rect x="1268" y="320" width="10.5" height="10.5" fill="#a935ff"/><rect x="1278" y="320" width="10.5" height="10.5" fill="#ba30ff"/><rect x="1288" y="320" width="10.5" height="10.5" fill="#ca2aff"/><rect x="1298" y="320" width="10.5" height="10.5" fill="#db25ff"/><rect x="1308" y="320" width="10.5" height="10.5" fill="#eb1fff"/><rect x="1318" y="320" width="10.5" height="10.5" fill="#fc19ff"/><rect x="1328" y="320" width="10.5" height="10.5" fill="#ff12f1"/><rect x="1338" y="320" width="10.5" height="10.5" fill="#ff0be3"/><rect x="1348" y="320" width="10.5" height="10.5" fill="#ff04d7"/><rect x="1358" y="320" width="10.5" height="10.5" fill="#990076"/><rect x="1368" y="320" width="10.5" height="10.5" fill="#99006f"/><rect x="1378" y="320" width="10.5" height="10.5" fill="#990069"/><rect x="1388" y="320" width="10.5" height="10.5" fill="#990063"/><rect x="1398" y="320" width="10.5" height="10.5" fill="#99005e"/><rect x="1408" y="320" width="10.5" height="10.5" fill="#99005a"/><rect x="1418" y="320" width="10.5" height="10.5" fill="#990056"/><rect x="1428" y="320" width="10.5" height="10.5" fill="#990052"/><rect x="1438" y="320" width="10.5" height="10.5" fill="#99004e"/><rect x="1448" y="320" width="10.5" height="10.5" fill="#99004b"/><rect x="1458" y="320" width="10.5" height="10.5" fill="#990048"/><rect x="1468" y="320" width="10.5" height="10.5" fill="#990045"/><rect x="1478" y="320" width="10.5" height="10.5" fill="#990042"/><rect x="1488" y="320" width="10.5" height="10.5" fill="#99003f"/><rect x="1498" y="320" width="10.5" height="10.5" fill="#99003d"/><rect x="1508" y="320" width="10.5" height="10.5" fill="#99003b"/><rect x="1518" y="320" width="10.5" height="10.5" fill="#990039"/><rect x="1528" y="320" width="10.5" height="10.5" fill="#990037"/><rect x="1538" y="320" width="10.5" height="10.5" fill="#990035"/><rect x="1548" y="320" width="10.5" height="10.5" fill="#990033"/><rect x="1558" y="320" width="10.5" height="10.5" fill="#990031"/><rect x="1568" y="320" width="10.5" height="10.5" fill="#990030"/><rect x="1578" y="320" width="10.5" height="10.5" fill="#99002e"/><rect x="1588" y="320" width="10.5" height="10.5" fill="#99002d"/><rect x="1598" y="320" width="10.5" height="10.5" fill="#99002b"/><rect x="1608" y="320" width="10.5" height="10.5" fill="#99002a"/><rect x="1618" y="320" width="10.5" height="10.5" fill="#990029"/><rect x="1628" y="320" width="10.5" height="10.5" fill="#990028"/><rect x="1638" y="320" width="10.5" height="10.5" fill="#990026"/><rect x="1648" y="320" width="10.5" height="10.5" fill="#990025"/><rect x="1018" y="330" width="10.5" height="10.5" fill="#004f99"/><rect x="1028" y="330" width="10.5" height="10.5" fill="#004d99"/><rect x="1038" y="330" width="10.5" height="10.5" fill="#004b99"/><rect x="1048" y="330" width="10.5" height="10.5" fill="#004999"/><rect x="1058" y="330" width="10.5" height="10.5" fill="#004799"/><rect x="1068" y="330" width="10.5" height="10.5" fill="#004499"/><rect x="1078" y="330" width="10.5" height="10.5" fill="#004299"/><rect x="1088" y="330" width="10.5" height="10.5" fill="#004099"/><rect x="1098" y="330" width="10.5" height="10.5" fill="#003e99"/><rect x="1108" y="330" width="10.5" height="10.5" fill="#003c99"/><rect x="1118" y="330" width="10.5" height="10.5" fill="#003999"/><rect x="1128" y="330" width="10.5" height="10.5" fill="#003799"/><rect x="1138" y="330" width="10.5" height="10.5" fill="#003599"/><rect x="1148" y="330" width="10.5" height="10.5" fill="#003399"/><rect x="1158" y="330" width="10.5" height="10.5" fill="#003099"/><rect x="1168" y="330" width="10.5" height="10.5" fill="#002e99"/><rect x="1178" y="330" width="10.5" height="10.5" fill="#0656ff"/><rect x="1188" y="330" width="10.5" height="10.5" fill="#1a52ff"/><rect x="1198" y="330" width="10.5" height="10.5" fill="#2c4dff"/><rect x="1208" y="330" width="10.5" height="10.5" fill="#3e49ff"/><rect x="1218" y="330" width="10.5" height="10.5" fill="#4e45ff"/><rect x="1228" y="330" width="10.5" height="10.5" fill="#5f40ff"/><rect x="1238" y="330" width="10.5" height="10.5" fill="#6f3cff"/><rect x="1248" y="330" width="10.5" height="10.5" fill="#7f37ff"/><rect x="1258" y="330" width="10.5" height="10.5" fill="#8e32ff"/><rect x="1268" y="330" width="10.5" height="10.5" fill="#9e2dff"/><rect x="1278" y="330" width="10.5" height="10.5" fill="#ae28ff"/><rect x="1288" y="330" width="10.5" height="10.5" fill="#bd23ff"/><rect x="1298" y="330" width="10.5" height="10.5" fill="#cd1eff"/><rect x="1308" y="330" width="10.5" height="10.5" fill="#dd18ff"/><rect x="1318" y="330" width="10.5" height="10.5" fill="#ec12ff"/><rect x="1328" y="330" width="10.5" height="10.5" fill="#fc0cff"/><rect x="1338" y="330" width="10.5" height="10.5" fill="#ff05f2"/><rect x="1348" y="330" width="10.5" height="10.5" fill="#990087"/><rect x="1358" y="330" width="10.5" height="10.5" fill="#99007f"/><rect x="1368" y="330" width="10.5" height="10.5" fill="#990077"/><rect x="1378" y="330" width="10.5" height="10.5" fill="#990071"/><rect x="1388" y="330" width="10.5" height="10.5" fill="#99006b"/><rect x="1398" y="330" width="10.5" height="10.5" fill="#990065"/><rect x="1408" y="330" width="10.5" height="10.5" fill="#990061"/><rect x="1418" y="330" width="10.5" height="10.5" fill="#99005c"/><rect x="1428" y="330" width="10.5" height="10.5" fill="#990058"/><rect x="1438" y="330" width="10.5" height="10.5" fill="#990054"/><rect x="1448" y="330" width="10.5" height="10.5" fill="#990050"/><rect x="1458" y="330" width="10.5" height="10.5" fill="#99004d"/><rect x="1468" y="330" width="10.5" height="10.5" fill="#99004a"/><rect x="1478" y="330" width="10.5" height="10.5" fill="#990047"/><rect x="1488" y="330" width="10.5" height="10.5" fill="#990044"/><rect x="1498" y="330" width="10.5" height="10.5" fill="#990042"/><rect x="1508" y="330" width="10.5" height="10.5" fill="#99003f"/><rect x="1518" y="330" width="10.5" height="10.5" fill="#99003d"/><rect x="1528" y="330" width="10.5" height="10.5" fill="#99003b"/><rect x="1538" y="330" width="10.5" height="10.5" fill="#990039"/><rect x="1548" y="330" width="10.5" height="10.5" fill="#990037"/><rect x="1558" y="330" width="10.5" height="10.5" fill="#990035"/><rect x="1568" y="330" width="10.5" height="10.5" fill="#990034"/><rect x="1578" y="330" width="10.5" height="10.5" fill="#990032"/><rect x="1588" y="330" width="10.5" height="10.5" fill="#990030"/><rect x="1598" y="330" width="10.5" height="10.5" fill="#99002f"/><rect x="1608" y="330" width="10.5" height="10.5" fill="#99002d"/><rect x="1618" y="330" width="10.5" height="10.5" fill="#99002c"/><rect x="1628" y="330" width="10.5" height="10.5" fill="#99002b"/><rect x="1638" y="330" width="10.5" height="10.5" fill="#99002a"/><rect x="1648" y="330" width="10.5" height="10.5" fill="#990028"/><rect x="1018" y="340" width="10.5" height="10.5" fill="#004999"/><rect x="1028" y="340" width="10.5" height="10.5" fill="#004799"/><rect x="1038" y="340" width="10.5" height="10.5" fill="#004599"/><rect x="1048" y="340" width="10.5" height="10.5" fill="#004399"/><rect x="1058" y="340" width="10.5" height="10.5" fill="#004199"/><rect x="1068" y="340" width="10.5" height="10.5" fill="#003f99"/><rect x="1078" y="340" width="10.5" height="10.5" fill="#003d99"/><rect x="1088" y="340" width="10.5" height="10.5" fill="#003b99"/><rect x="1098" y="340" width="10.5" height="10.5" fill="#003899"/><rect x="1108" y="340" width="10.5" height="10.5" fill="#003699"/><rect x="1118" y="340" width="10.5" height="10.5" fill="#003499"/><rect x="1128" y="340" width="10.5" height="10.5" fill="#003299"/><rect x="1138" y="340" width="10.5" height="10.5" fill="#003099"/><rect x="1148" y="340" width="10.5" height="10.5" fill="#002d99"/><rect x="1158" y="340" width="10.5" height="10.5" fill="#002b99"/><rect x="1168" y="340" width="10.5" height="10.5" fill="#002999"/><rect x="1178" y="340" width="10.5" height="10.5" fill="#024dff"/><rect x="1188" y="340" width="10.5" height="10.5" fill="#1649ff"/><rect x="1198" y="340" width="10.5" height="10.5" fill="#2845ff"/><rect x="1208" y="340" width="10.5" height="10.5" fill="#3841ff"/><rect x="1218" y="340" width="10.5" height="10.5" fill="#483dff"/><rect x="1228" y="340" width="10.5" height="10.5" fill="#5839ff"/><rect x="1238" y="340" width="10.5" height="10.5" fill="#6734ff"/><rect x="1248" y="340" width="10.5" height="10.5" fill="#7630ff"/><rect x="1258" y="340" width="10.5" height="10.5" fill="#852bff"/><rect x="1268" y="340" width="10.5" height="10.5" fill="#9426ff"/><rect x="1278" y="340" width="10.5" height="10.5" fill="#a321ff"/><rect x="1288" y="340" width="10.5" height="10.5" fill="#b21cff"/><rect x="1298" y="340" width="10.5" height="10.5" fill="#c117ff"/><rect x="1308" y="340" width="10.5" height="10.5" fill="#cf11ff"/><rect x="1318" y="340" width="10.5" height="10.5" fill="#de0bff"/><rect x="1328" y="340" width="10.5" height="10.5" fill="#ed05ff"/><rect x="1338" y="340" width="10.5" height="10.5" fill="#970099"/><rect x="1348" y="340" width="10.5" height="10.5" fill="#990091"/><rect x="1358" y="340" width="10.5" height="10.5" fill="#990088"/><rect x="1368" y="340" width="10.5" height="10.5" fill="#990080"/><rect x="1378" y="340" width="10.5" height="10.5" fill="#990079"/><rect x="1388" y="340" width="10.5" height="10.5" fill="#990072"/><rect x="1398" y="340" width="10.5" height="10.5" fill="#99006d"/><rect x="1408" y="340" width="10.5" height="10.5" fill="#990067"/><rect x="1418" y="340" width="10.5" height="10.5" fill="#990062"/><rect x="1428" y="340" width="10.5" height="10.5" fill="#99005e"/><rect x="1438" y="340" width="10.5" height="10.5" fill="#99005a"/><rect x="1448" y="340" width="10.5" height="10.5" fill="#990056"/><rect x="1458" y="340" width="10.5" height="10.5" fill="#990052"/><rect x="1468" y="340" width="10.5" height="10.5" fill="#99004f"/><rect x="1478" y="340" width="10.5" height="10.5" fill="#99004c"/><rect x="1488" y="340" width="10.5" height="10.5" fill="#990049"/><rect x="1498" y="340" width="10.5" height="10.5" fill="#990046"/><rect x="1508" y="340" width="10.5" height="10.5" fill="#990044"/><rect x="1518" y="340" width="10.5" height="10.5" fill="#990042"/><rect x="1528" y="340" width="10.5" height="10.5" fill="#99003f"/><rect x="1538" y="340" width="10.5" height="10.5" fill="#99003d"/><rect x="1548" y="340" width="10.5" height="10.5" fill="#99003b"/><rect x="1558" y="340" width="10.5" height="10.5" fill="#990039"/><rect x="1568" y="340" width="10.5" height="10.5" fill="#990037"/><rect x="1578" y="340" width="10.5" height="10.5" fill="#990036"/><rect x="1588" y="340" width="10.5" height="10.5" fill="#990034"/><rect x="1598" y="340" width="10.5" height="10.5" fill="#990032"/><rect x="1608" y="340" width="10.5" height="10.5" fill="#990031"/><rect x="1618" y="340" width="10.5" height="10.5" fill="#990030"/><rect x="1628" y="340" width="10.5" height="10.5" fill="#99002e"/><rect x="1638" y="340" width="10.5" height="10.5" fill="#99002d"/><rect x="1648" y="340" width="10.5" height="10.5" fill="#99002c"/><rect x="1018" y="350" width="10.5" height="10.5" fill="#004399"/><rect x="1028" y="350" width="10.5" height="10.5" fill="#004199"/><rect x="1038" y="350" width="10.5" height="10.5" fill="#003f99"/><rect x="1048" y="350" width="10.5" height="10.5" fill="#003d99"/><rect x="1058" y="350" width="10.5" height="10.5" fill="#003b99"/><rect x="1068" y="350" width="10.5" height="10.5" fill="#003999"/><rect x="1078" y="350" width="10.5" height="10.5" fill="#003799"/><rect x="1088" y="350" width="10.5" height="10.5" fill="#003599"/><rect x="1098" y="350" width="10.5" height="10.5" fill="#003399"/><rect x="1108" y="350" width="10.5" height="10.5" fill="#003199"/><rect x="1118" y="350" width="10.5" height="10.5" fill="#002f99"/><rect x="1128" y="350" width="10.5" height="10.5" fill="#002d99"/><rect x="1138" y="350" width="10.5" height="10.5" fill="#002b99"/><rect x="1148" y="350" width="10.5" height="10.5" fill="#002999"/><rect x="1158" y="350" width="10.5" height="10.5" fill="#002799"/><rect x="1168" y="350" width="10.5" height="10.5" fill="#002599"/><rect x="1178" y="350" width="10.5" height="10.5" fill="#002299"/><rect x="1188" y="350" width="10.5" height="10.5" fill="#1242ff"/><rect x="1198" y="350" width="10.5" height="10.5" fill="#233eff"/><rect x="1208" y="350" width="10.5" height="10.5" fill="#333aff"/><rect x="1218" y="350" width="10.5" height="10.5" fill="#4236ff"/><rect x="1228" y="350" width="10.5" height="10.5" fill="#5132ff"/><rect x="1238" y="350" width="10.5" height="10.5" fill="#602dff"/><rect x="1248" y="350" width="10.5" height="10.5" fill="#6f29ff"/><rect x="1258" y="350" width="10.5" height="10.5" fill="#7d24ff"/><rect x="1268" y="350" width="10.5" height="10.5" fill="#8b20ff"/><rect x="1278" y="350" width="10.5" height="10.5" fill="#991bff"/><rect x="1288" y="350" width="10.5" height="10.5" fill="#a816ff"/><rect x="1298" y="350" width="10.5" height="10.5" fill="#b610ff"/><rect x="1308" y="350" width="10.5" height="10.5" fill="#c40bff"/><rect x="1318" y="350" width="10.5" height="10.5" fill="#d205ff"/><rect x="1328" y="350" width="10.5" height="10.5" fill="#840099"/><rect x="1338" y="350" width="10.5" height="10.5" fill="#8d0099"/><rect x="1348" y="350" width="10.5" height="10.5" fill="#970099"/><rect x="1358" y="350" width="10.5" height="10.5" fill="#990091"/><rect x="1368" y="350" width="10.5" height="10.5" fill="#990089"/><rect x="1378" y="350" width="10.5" height="10.5" fill="#990081"/><rect x="1388" y="350" width="10.5" height="10.5" fill="#99007a"/><rect x="1398" y="350" width="10.5" height="10.5" fill="#990074"/><rect x="1408" y="350" width="10.5" height="10.5" fill="#99006e"/><rect x="1418" y="350" width="10.5" height="10.5" fill="#990069"/><rect x="1428" y="350" width="10.5" height="10.5" fill="#990064"/><rect x="1438" y="350" width="10.5" height="10.5" fill="#990060"/><rect x="1448" y="350" width="10.5" height="10.5" fill="#99005c"/><rect x="1458" y="350" width="10.5" height="10.5" fill="#990058"/><rect x="1468" y="350" width="10.5" height="10.5" fill="#990055"/><rect x="1478" y="350" width="10.5" height="10.5" fill="#990051"/><rect x="1488" y="350" width="10.5" height="10.5" fill="#99004e"/><rect x="1498" y="350" width="10.5" height="10.5" fill="#99004b"/><rect x="1508" y="350" width="10.5" height="10.5" fill="#990049"/><rect x="1518" y="350" width="10.5" height="10.5" fill="#990046"/><rect x="1528" y="350" width="10.5" height="10.5" fill="#990044"/><rect x="1538" y="350" width="10.5" height="10.5" fill="#990041"/><rect x="1548" y="350" width="10.5" height="10.5" fill="#99003f"/><rect x="1558" y="350" width="10.5" height="10.5" fill="#99003d"/><rect x="1568" y="350" width="10.5" height="10.5" fill="#99003b"/><rect x="1578" y="350" width="10.5" height="10.5" fill="#990039"/><rect x="1588" y="350" width="10.5" height="10.5" fill="#990038"/><rect x="1598" y="350" width="10.5" height="10.5" fill="#990036"/><rect x="1608" y="350" width="10.5" height="10.5" fill="#990034"/><rect x="1618" y="350" width="10.5" height="10.5" fill="#990033"/><rect x="1628" y="350" width="10.5" height="10.5" fill="#990032"/><rect x="1638" y="350" width="10.5" height="10.5" fill="#990030"/><rect x="1648" y="350" width="10.5" height="10.5" fill="#99002f"/><rect x="1018" y="360" width="10.5" height="10.5" fill="#003e99"/><rect x="1028" y="360" width="10.5" height="10.5" fill="#003c99"/><rect x="1038" y="360" width="10.5" height="10.5" fill="#003a99"/><rect x="1048" y="360" width="10.5" height="10.5" fill="#003999"/><rect x="1058" y="360" width="10.5" height="10.5" fill="#003799"/><rect x="1068" y="360" width="10.5" height="10.5" fill="#003599"/><rect x="1078" y="360" width="10.5" height="10.5" fill="#003399"/><rect x="1088" y="360" width="10.5" height="10.5" fill="#003199"/><rect x="1098" y="360" width="10.5" height="10.5" fill="#002f99"/><rect x="1108" y="360" width="10.5" height="10.5" fill="#002d99"/><rect x="1118" y="360" width="10.5" height="10.5" fill="#002b99"/><rect x="1128" y="360" width="10.5" height="10.5" fill="#002999"/><rect x="1138" y="360" width="10.5" height="10.5" fill="#002799"/><rect x="1148" y="360" width="10.5" height="10.5" fill="#002599"/><rect x="1158" y="360" width="10.5" height="10.5" fill="#002399"/><rect x="1168" y="360" width="10.5" height="10.5" fill="#002199"/><rect x="1178" y="360" width="10.5" height="10.5" fill="#001f99"/><rect x="1188" y="360" width="10.5" height="10.5" fill="#0f3bff"/><rect x="1198" y="360" width="10.5" height="10.5" fill="#1f37ff"/><rect x="1208" y="360" width="10.5" height="10.5" fill="#2f33ff"/><rect x="1218" y="360" width="10.5" height="10.5" fill="#3d2fff"/><rect x="1228" y="360" width="10.5" height="10.5" fill="#4c2bff"/><rect x="1238" y="360" width="10.5" height="10.5" fill="#5a27ff"/><rect x="1248" y="360" width="10.5" height="10.5" fill="#6823ff"/><rect x="1258" y="360" width="10.5" height="10.5" fill="#751eff"/><rect x="1268" y="360" width="10.5" height="10.5" fill="#831aff"/><rect x="1278" y="360" width="10.5" height="10.5" fill="#9115ff"/><rect x="1288" y="360" width="10.5" height="10.5" fill="#9e10ff"/><rect x="1298" y="360" width="10.5" height="10.5" fill="#ac0aff"/><rect x="1308" y="360" width="10.5" height="10.5" fill="#b905ff"/><rect x="1318" y="360" width="10.5" height="10.5" fill="#720099"/><rect x="1328" y="360" width="10.5" height="10.5" fill="#7b0099"/><rect x="1338" y="360" width="10.5" height="10.5" fill="#840099"/><rect x="1348" y="360" width="10.5" height="10.5" fill="#8e0099"/><rect x="1358" y="360" width="10.5" height="10.5" fill="#970099"/><rect x="1368" y="360" width="10.5" height="10.5" fill="#990091"/><rect x="1378" y="360" width="10.5" height="10.5" fill="#990089"/><rect x="1388" y="360" width="10.5" height="10.5" fill="#990082"/><rect x="1398" y="360" width="10.5" height="10.5" fill="#99007b"/><rect x="1408" y="360" width="10.5" height="10.5" fill="#990075"/><rect x="1418" y="360" width="10.5" height="10.5" fill="#990070"/><rect x="1428" y="360" width="10.5" height="10.5" fill="#99006b"/><rect x="1438" y="360" width="10.5" height="10.5" fill="#990066"/><rect x="1448" y="360" width="10.5" height="10.5" fill="#990062"/><rect x="1458" y="360" width="10.5" height="10.5" fill="#99005e"/><rect x="1468" y="360" width="10.5" height="10.5" fill="#99005a"/><rect x="1478" y="360" width="10.5" height="10.5" fill="#990056"/><rect x="1488" y="360" width="10.5" height="10.5" fill="#990053"/><rect x="1498" y="360" width="10.5" height="10.5" fill="#990050"/><rect x="1508" y="360" width="10.5" height="10.5" fill="#99004d"/><rect x="1518" y="360" width="10.5" height="10.5" fill="#99004b"/><rect x="1528" y="360" width="10.5" height="10.5" fill="#990048"/><rect x="1538" y="360" width="10.5" height="10.5" fill="#990046"/><rect x="1548" y="360" width="10.5" height="10.5" fill="#990043"/><rect x="1558" y="360" width="10.5" height="10.5" fill="#990041"/><rect x="1568" y="360" width="10.5" height="10.5" fill="#99003f"/><rect x="1578" y="360" width="10.5" height="10.5" fill="#99003d"/><rect x="1588" y="360" width="10.5" height="10.5" fill="#99003b"/><rect x="1598" y="360" width="10.5" height="10.5" fill="#99003a"/><rect x="1608" y="360" width="10.5" height="10.5" fill="#990038"/><rect x="1618" y="360" width="10.5" height="10.5" fill="#990036"/><rect x="1628" y="360" width="10.5" height="10.5" fill="#990035"/><rect x="1638" y="360" width="10.5" height="10.5" fill="#990033"/><rect x="1648" y="360" width="10.5" height="10.5" fill="#990032"/><rect x="1018" y="370" width="10.5" height="10.5" fill="#003a99"/><rect x="1028" y="370" width="10.5" height="10.5" fill="#003899"/><rect x="1038" y="370" width="10.5" height="10.5" fill="#003699"/><rect x="1048" y="370" width="10.5" height="10.5" fill="#003499"/><rect x="1058" y="370" width="10.5" height="10.5" fill="#003299"/><rect x="1068" y="370" width="10.5" height="10.5" fill="#003099"/><rect x="1078" y="370" width="10.5" height="10.5" fill="#002f99"/><rect x="1088" y="370" width="10.5" height="10.5" fill="#002d99"/><rect x="1098" y="370" width="10.5" height="10.5" fill="#002b99"/><rect x="1108" y="370" width="10.5" height="10.5" fill="#002999"/><rect x="1118" y="370" width="10.5" height="10.5" fill="#002799"/><rect x="1128" y="370" width="10.5" height="10.5" fill="#002599"/><rect x="1138" y="370" width="10.5" height="10.5" fill="#002399"/><rect x="1148" y="370" width="10.5" height="10.5" fill="#002199"/><rect x="1158" y="370" width="10.5" height="10.5" fill="#001f99"/><rect x="1168" y="370" width="10.5" height="10.5" fill="#001d99"/><rect x="1178" y="370" width="10.5" height="10.5" fill="#001b99"/><rect x="1188" y="370" width="10.5" height="10.5" fill="#0b35ff"/><rect x="1198" y="370" width="10.5" height="10.5" fill="#1c31ff"/><rect x="1208" y="370" width="10.5" height="10.5" fill="#2a2dff"/><rect x="1218" y="370" width="10.5" height="10.5" fill="#3929ff"/><rect x="1228" y="370" width="10.5" height="10.5" fill="#4625ff"/><rect x="1238" y="370" width="10.5" height="10.5" fill="#5421ff"/><rect x="1248" y="370" width="10.5" height="10.5" fill="#611dff"/><rect x="1258" y="370" width="10.5" height="10.5" fill="#6f18ff"/><rect x="1268" y="370" width="10.5" height="10.5" fill="#7c14ff"/><rect x="1278" y="370" width="10.5" height="10.5" fill="#890fff"/><rect x="1288" y="370" width="10.5" height="10.5" fill="#960aff"/><rect x="1298" y="370" width="10.5" height="10.5" fill="#a205ff"/><rect x="1308" y="370" width="10.5" height="10.5" fill="#630099"/><rect x="1318" y="370" width="10.5" height="10.5" fill="#6c0099"/><rect x="1328" y="370" width="10.5" height="10.5" fill="#740099"/><rect x="1338" y="370" width="10.5" height="10.5" fill="#7d0099"/><rect x="1348" y="370" width="10.5" height="10.5" fill="#850099"/><rect x="1358" y="370" width="10.5" height="10.5" fill="#8e0099"/><rect x="1368" y="370" width="10.5" height="10.5" fill="#970099"/><rect x="1378" y="370" width="10.5" height="10.5" fill="#990092"/><rect x="1388" y="370" width="10.5" height="10.5" fill="#99008a"/><rect x="1398" y="370" width="10.5" height="10.5" fill="#990083"/><rect x="1408" y="370" width="10.5" height="10.5" fill="#99007c"/><rect x="1418" y="370" width="10.5" height="10.5" fill="#990077"/><rect x="1428" y="370" width="10.5" height="10.5" fill="#990071"/><rect x="1438" y="370" width="10.5" height="10.5" fill="#99006c"/><rect x="1448" y="370" width="10.5" height="10.5" fill="#990068"/><rect x="1458" y="370" width="10.5" height="10.5" fill="#990063"/><rect x="1468" y="370" width="10.5" height="10.5" fill="#99005f"/><rect x="1478" y="370" width="10.5" height="10.5" fill="#99005c"/><rect x="1488" y="370" width="10.5" height="10.5" fill="#990058"/><rect x="1498" y="370" width="10.5" height="10.5" fill="#990055"/><rect x="1508" y="370" width="10.5" height="10.5" fill="#990052"/><rect x="1518" y="370" width="10.5" height="10.5" fill="#99004f"/><rect x="1528" y="370" width="10.5" height="10.5" fill="#99004d"/><rect x="1538" y="370" width="10.5" height="10.5" fill="#99004a"/><rect x="1548" y="370" width="10.5" height="10.5" fill="#990048"/><rect x="1558" y="370" width="10.5" height="10.5" fill="#990045"/><rect x="1568" y="370" width="10.5" height="10.5" fill="#990043"/><rect x="1578" y="370" width="10.5" height="10.5" fill="#990041"/><rect x="1588" y="370" width="10.5" height="10.5" fill="#99003f"/><rect x="1598" y="370" width="10.5" height="10.5" fill="#99003d"/><rect x="1608" y="370" width="10.5" height="10.5" fill="#99003c"/><rect x="1618" y="370" width="10.5" height="10.5" fill="#99003a"/><rect x="1628" y="370" width="10.5" height="10.5" fill="#990038"/><rect x="1638" y="370" width="10.5" height="10.5" fill="#990037"/><rect x="1648" y="370" width="10.5" height="10.5" fill="#990035"/><rect x="1018" y="380" width="10.5" height="10.5" fill="#003599"/><rect x="1028" y="380" width="10.5" height="10.5" fill="#003499"/><rect x="1038" y="380" width="10.5" height="10.5" fill="#003299"/><rect x="1048" y="380" width="10.5" height="10.5" fill="#003099"/><rect x="1058" y="380" width="10.5" height="10.5" fill="#002e99"/><rect x="1068" y="380" width="10.5" height="10.5" fill="#002c99"/><rect x="1078" y="380" width="10.5" height="10.5" fill="#002b99"/><rect x="1088" y="380" width="10.5" height="10.5" fill="#002999"/><rect x="1098" y="380" width="10.5" height="10.5" fill="#002799"/><rect x="1108" y="380" width="10.5" height="10.5" fill="#002599"/><rect x="1118" y="380" width="10.5" height="10.5" fill="#002399"/><rect x="1128" y="380" width="10.5" height="10.5" fill="#002199"/><rect x="1138" y="380" width="10.5" height="10.5" fill="#001f99"/><rect x="1148" y="380" width="10.5" height="10.5" fill="#001e99"/><rect x="1158" y="380" width="10.5" height="10.5" fill="#001c99"/><rect x="1168" y="380" width="10.5" height="10.5" fill="#001a99"/><rect x="1178" y="380" width="10.5" height="10.5" fill="#001899"/><rect x="1188" y="380" width="10.5" height="10.5" fill="#082fff"/><rect x="1198" y="380" width="10.5" height="10.5" fill="#182cff"/><rect x="1208" y="380" width="10.5" height="10.5" fill="#2628ff"/><rect x="1218" y="380" width="10.5" height="10.5" fill="#3424ff"/><rect x="1228" y="380" width="10.5" height="10.5" fill="#4220ff"/><rect x="1238" y="380" width="10.5" height="10.5" fill="#4f1cff"/><rect x="1248" y="380" width="10.5" height="10.5" fill="#5c18ff"/><rect x="1258" y="380" width="10.5" height="10.5" fill="#6813ff"/><rect x="1268" y="380" width="10.5" height="10.5" fill="#750fff"/><rect x="1278" y="380" width="10.5" height="10.5" fill="#810aff"/><rect x="1288" y="380" width="10.5" height="10.5" fill="#8e04ff"/><rect x="1298" y="380" width="10.5" height="10.5" fill="#550099"/><rect x="1308" y="380" width="10.5" height="10.5" fill="#5d0099"/><rect x="1318" y="380" width="10.5" height="10.5" fill="#650099"/><rect x="1328" y="380" width="10.5" height="10.5" fill="#6d0099"/><rect x="1338" y="380" width="10.5" height="10.5" fill="#760099"/><rect x="1348" y="380" width="10.5" height="10.5" fill="#7e0099"/><rect x="1358" y="380" width="10.5" height="10.5" fill="#860099"/><rect x="1368" y="380" width="10.5" height="10.5" fill="#8e0099"/><rect x="1378" y="380" width="10.5" height="10.5" fill="#970099"/><rect x="1388" y="380" width="10.5" height="10.5" fill="#990092"/><rect x="1398" y="380" width="10.5" height="10.5" fill="#99008b"/><rect x="1408" y="380" width="10.5" height="10.5" fill="#990084"/><rect x="1418" y="380" width="10.5" height="10.5" fill="#99007e"/><rect x="1428" y="380" width="10.5" height="10.5" fill="#990078"/><rect x="1438" y="380" width="10.5" height="10.5" fill="#990073"/><rect x="1448" y="380" width="10.5" height="10.5" fill="#99006e"/><rect x="1458" y="380" width="10.5" height="10.5" fill="#990069"/><rect x="1468" y="380" width="10.5" height="10.5" fill="#990065"/><rect x="1478" y="380" width="10.5" height="10.5" fill="#990061"/><rect x="1488" y="380" width="10.5" height="10.5" fill="#99005d"/><rect x="1498" y="380" width="10.5" height="10.5" fill="#99005a"/><rect x="1508" y="380" width="10.5" height="10.5" fill="#990057"/><rect x="1518" y="380" width="10.5" height="10.5" fill="#990054"/><rect x="1528" y="380" width="10.5" height="10.5" fill="#990051"/><rect x="1538" y="380" width="10.5" height="10.5" fill="#99004e"/><rect x="1548" y="380" width="10.5" height="10.5" fill="#99004c"/><rect x="1558" y="380" width="10.5" height="10.5" fill="#990049"/><rect x="1568" y="380" width="10.5" height="10.5" fill="#990047"/><rect x="1578" y="380" width="10.5" height="10.5" fill="#990045"/><rect x="1588" y="380" width="10.5" height="10.5" fill="#990043"/><rect x="1598" y="380" width="10.5" height="10.5" fill="#990041"/><rect x="1608" y="380" width="10.5" height="10.5" fill="#99003f"/><rect x="1618" y="380" width="10.5" height="10.5" fill="#99003d"/><rect x="1628" y="380" width="10.5" height="10.5" fill="#99003c"/><rect x="1638" y="380" width="10.5" height="10.5" fill="#99003a"/><rect x="1648" y="380" width="10.5" height="10.5" fill="#990039"/><rect x="1018" y="390" width="10.5" height="10.5" fill="#003199"/><rect x="1028" y="390" width="10.5" height="10.5" fill="#003099"/><rect x="1038" y="390" width="10.5" height="10.5" fill="#002e99"/><rect x="1048" y="390" width="10.5" height="10.5" fill="#002c99"/><rect x="1058" y="390" width="10.5" height="10.5" fill="#002b99"/><rect x="1068" y="390" width="10.5" height="10.5" fill="#002999"/><rect x="1078" y="390" width="10.5" height="10.5" fill="#002799"/><rect x="1088" y="390" width="10.5" height="10.5" fill="#002599"/><rect x="1098" y="390" width="10.5" height="10.5" fill="#002499"/><rect x="1108" y="390" width="10.5" height="10.5" fill="#002299"/><rect x="1118" y="390" width="10.5" height="10.5" fill="#002099"/><rect x="1128" y="390" width="10.5" height="10.5" fill="#001e99"/><rect x="1138" y="390" width="10.5" height="10.5" fill="#001c99"/><rect x="1148" y="390" width="10.5" height="10.5" fill="#001a99"/><rect x="1158" y="390" width="10.5" height="10.5" fill="#001999"/><rect x="1168" y="390" width="10.5" height="10.5" fill="#001799"/><rect x="1178" y="390" width="10.5" height="10.5" fill="#001599"/><rect x="1188" y="390" width="10.5" height="10.5" fill="#052aff"/><rect x="1198" y="390" width="10.5" height="10.5" fill="#1526ff"/><rect x="1208" y="390" width="10.5" height="10.5" fill="#2322ff"/><rect x="1218" y="390" width="10.5" height="10.5" fill="#301fff"/><rect x="1228" y="390" width="10.5" height="10.5" fill="#3d1bff"/><rect x="1238" y="390" width="10.5" height="10.5" fill="#4a17ff"/><rect x="1248" y="390" width="10.5" height="10.5" fill="#5612ff"/><rect x="1258" y="390" width="10.5" height="10.5" fill="#620eff"/><rect x="1268" y="390" width="10.5" height="10.5" fill="#6e09ff"/><rect x="1278" y="390" width="10.5" height="10.5" fill="#7a04ff"/><rect x="1288" y="390" width="10.5" height="10.5" fill="#490099"/><rect x="1298" y="390" width="10.5" height="10.5" fill="#510099"/><rect x="1308" y="390" width="10.5" height="10.5" fill="#580099"/><rect x="1318" y="390" width="10.5" height="10.5" fill="#600099"/><rect x="1328" y="390" width="10.5" height="10.5" fill="#670099"/><rect x="1338" y="390" width="10.5" height="10.5" fill="#6f0099"/><rect x="1348" y="390" width="10.5" height="10.5" fill="#770099"/><rect x="1358" y="390" width="10.5" height="10.5" fill="#7f0099"/><rect x="1368" y="390" width="10.5" height="10.5" fill="#870099"/><rect x="1378" y="390" width="10.5" height="10.5" fill="#8f0099"/><rect x="1388" y="390" width="10.5" height="10.5" fill="#970099"/><rect x="1398" y="390" width="10.5" height="10.5" fill="#990092"/><rect x="1408" y="390" width="10.5" height="10.5" fill="#99008b"/><rect x="1418" y="390" width="10.5" height="10.5" fill="#990085"/><rect x="1428" y="390" width="10.5" height="10.5" fill="#99007e"/><rect x="1438" y="390" width="10.5" height="10.5" fill="#990079"/><rect x="1448" y="390" width="10.5" height="10.5" fill="#990074"/><rect x="1458" y="390" width="10.5" height="10.5" fill="#99006f"/><rect x="1468" y="390" width="10.5" height="10.5" fill="#99006b"/><rect x="1478" y="390" width="10.5" height="10.5" fill="#990067"/><rect x="1488" y="390" width="10.5" height="10.5" fill="#990063"/><rect x="1498" y="390" width="10.5" height="10.5" fill="#99005f"/><rect x="1508" y="390" width="10.5" height="10.5" fill="#99005c"/><rect x="1518" y="390" width="10.5" height="10.5" fill="#990059"/><rect x="1528" y="390" width="10.5" height="10.5" fill="#990056"/><rect x="1538" y="390" width="10.5" height="10.5" fill="#990053"/><rect x="1548" y="390" width="10.5" height="10.5" fill="#990050"/><rect x="1558" y="390" width="10.5" height="10.5" fill="#99004e"/><rect x="1568" y="390" width="10.5" height="10.5" fill="#99004b"/><rect x="1578" y="390" width="10.5" height="10.5" fill="#990049"/><rect x="1588" y="390" width="10.5" height="10.5" fill="#990047"/><rect x="1598" y="390" width="10.5" height="10.5" fill="#990045"/><rect x="1608" y="390" width="10.5" height="10.5" fill="#990043"/><rect x="1618" y="390" width="10.5" height="10.5" fill="#990041"/><rect x="1628" y="390" width="10.5" height="10.5" fill="#99003f"/><rect x="1638" y="390" width="10.5" height="10.5" fill="#99003d"/><rect x="1648" y="390" width="10.5" height="10.5" fill="#99003c"/><rect x="1018" y="400" width="10.5" height="10.5" fill="#002e99"/><rect x="1028" y="400" width="10.5" height="10.5" fill="#002c99"/><rect x="1038" y="400" width="10.5" height="10.5" fill="#002a99"/><rect x="1048" y="400" width="10.5" height="10.5" fill="#002999"/><rect x="1058" y="400" width="10.5" height="10.5" fill="#002799"/><rect x="1068" y="400" width="10.5" height="10.5" fill="#002599"/><rect x="1078" y="400" width="10.5" height="10.5" fill="#002499"/><rect x="1088" y="400" width="10.5" height="10.5" fill="#002299"/><rect x="1098" y="400" width="10.5" height="10.5" fill="#002099"/><rect x="1108" y="400" width="10.5" height="10.5" fill="#001f99"/><rect x="1118" y="400" width="10.5" height="10.5" fill="#001d99"/><rect x="1128" y="400" width="10.5" height="10.5" fill="#001b99"/><rect x="1138" y="400" width="10.5" height="10.5" fill="#001999"/><rect x="1148" y="400" width="10.5" height="10.5" fill="#001899"/><rect x="1158" y="400" width="10.5" height="10.5" fill="#001699"/><rect x="1168" y="400" width="10.5" height="10.5" fill="#001499"/><rect x="1178" y="400" width="10.5" height="10.5" fill="#001299"/><rect x="1188" y="400" width="10.5" height="10.5" fill="#0225ff"/><rect x="1198" y="400" width="10.5" height="10.5" fill="#1221ff"/><rect x="1208" y="400" width="10.5" height="10.5" fill="#201dff"/><rect x="1218" y="400" width="10.5" height="10.5" fill="#2c1aff"/><rect x="1228" y="400" width="10.5" height="10.5" fill="#3916ff"/><rect x="1238" y="400" width="10.5" height="10.5" fill="#4512ff"/><rect x="1248" y="400" width="10.5" height="10.5" fill="#510eff"/><rect x="1258" y="400" width="10.5" height="10.5" fill="#5d09ff"/><rect x="1268" y="400" width="10.5" height="10.5" fill="#6904ff"/><rect x="1278" y="400" width="10.5" height="10.5" fill="#3e0099"/><rect x="1288" y="400" width="10.5" height="10.5" fill="#450099"/><rect x="1298" y="400" width="10.5" height="10.5" fill="#4c0099"/><rect x="1308" y="400" width="10.5" height="10.5" fill="#530099"/><rect x="1318" y="400" width="10.5" height="10.5" fill="#5b0099"/><rect x="1328" y="400" width="10.5" height="10.5" fill="#620099"/><rect x="1338" y="400" width="10.5" height="10.5" fill="#690099"/><rect x="1348" y="400" width="10.5" height="10.5" fill="#710099"/><rect x="1358" y="400" width="10.5" height="10.5" fill="#780099"/><rect x="1368" y="400" width="10.5" height="10.5" fill="#800099"/><rect x="1378" y="400" width="10.5" height="10.5" fill="#870099"/><rect x="1388" y="400" width="10.5" height="10.5" fill="#8f0099"/><rect x="1398" y="400" width="10.5" height="10.5" fill="#970099"/><rect x="1408" y="400" width="10.5" height="10.5" fill="#990093"/><rect x="1418" y="400" width="10.5" height="10.5" fill="#99008c"/><rect x="1428" y="400" width="10.5" height="10.5" fill="#990085"/><rect x="1438" y="400" width="10.5" height="10.5" fill="#99007f"/><rect x="1448" y="400" width="10.5" height="10.5" fill="#99007a"/><rect x="1458" y="400" width="10.5" height="10.5" fill="#990075"/><rect x="1468" y="400" width="10.5" height="10.5" fill="#990070"/><rect x="1478" y="400" width="10.5" height="10.5" fill="#99006c"/><rect x="1488" y="400" width="10.5" height="10.5" fill="#990068"/><rect x="1498" y="400" width="10.5" height="10.5" fill="#990064"/><rect x="1508" y="400" width="10.5" height="10.5" fill="#990061"/><rect x="1518" y="400" width="10.5" height="10.5" fill="#99005d"/><rect x="1528" y="400" width="10.5" height="10.5" fill="#99005a"/><rect x="1538" y="400" width="10.5" height="10.5" fill="#990057"/><rect x="1548" y="400" width="10.5" height="10.5" fill="#990054"/><rect x="1558" y="400" width="10.5" height="10.5" fill="#990052"/><rect x="1568" y="400" width="10.5" height="10.5" fill="#99004f"/><rect x="1578" y="400" width="10.5" height="10.5" fill="#99004d"/><rect x="1588" y="400" width="10.5" height="10.5" fill="#99004b"/><rect x="1598" y="400" width="10.5" height="10.5" fill="#990048"/><rect x="1608" y="400" width="10.5" height="10.5" fill="#990046"/><rect x="1618" y="400" width="10.5" height="10.5" fill="#990044"/><rect x="1628" y="400" width="10.5" height="10.5" fill="#990043"/><rect x="1638" y="400" width="10.5" height="10.5" fill="#990041"/><rect x="1648" y="400" width="10.5" height="10.5" fill="#99003f"/><rect x="1018" y="410" width="10.5" height="10.5" fill="#002a99"/><rect x="1028" y="410" width="10.5" height="10.5" fill="#002999"/><rect x="1038" y="410" width="10.5" height="10.5" fill="#002799"/><rect x="1048" y="410" width="10.5" height="10.5" fill="#002699"/><rect x="1058" y="410" width="10.5" height="10.5" fill="#002499"/><rect x="1068" y="410" width="10.5" height="10.5" fill="#002299"/><rect x="1078" y="410" width="10.5" height="10.5" fill="#002199"/><rect x="1088" y="410" width="10.5" height="10.5" fill="#001f99"/><rect x="1098" y="410" width="10.5" height="10.5" fill="#001d99"/><rect x="1108" y="410" width="10.5" height="10.5" fill="#001c99"/><rect x="1118" y="410" width="10.5" height="10.5" fill="#001a99"/><rect x="1128" y="410" width="10.5" height="10.5" fill="#001899"/><rect x="1138" y="410" width="10.5" height="10.5" fill="#001799"/><rect x="1148" y="410" width="10.5" height="10.5" fill="#001599"/><rect x="1158" y="410" width="10.5" height="10.5" fill="#001399"/><rect x="1168" y="410" width="10.5" height="10.5" fill="#001199"/><rect x="1178" y="410" width="10.5" height="10.5" fill="#001099"/><rect x="1188" y="410" width="10.5" height="10.5" fill="#000e99"/><rect x="1198" y="410" width="10.5" height="10.5" fill="#0f1cff"/><rect x="1208" y="410" width="10.5" height="10.5" fill="#1c19ff"/><rect x="1218" y="410" width="10.5" height="10.5" fill="#2915ff"/><rect x="1228" y="410" width="10.5" height="10.5" fill="#3511ff"/><rect x="1238" y="410" width="10.5" height="10.5" fill="#410dff"/><rect x="1248" y="410" width="10.5" height="10.5" fill="#4d09ff"/><rect x="1258" y="410" width="10.5" height="10.5" fill="#5804ff"/><rect x="1268" y="410" width="10.5" height="10.5" fill="#330099"/><rect x="1278" y="410" width="10.5" height="10.5" fill="#3a0099"/><rect x="1288" y="410" width="10.5" height="10.5" fill="#410099"/><rect x="1298" y="410" width="10.5" height="10.5" fill="#480099"/><rect x="1308" y="410" width="10.5" height="10.5" fill="#4f0099"/><rect x="1318" y="410" width="10.5" height="10.5" fill="#560099"/><rect x="1328" y="410" width="10.5" height="10.5" fill="#5d0099"/><rect x="1338" y="410" width="10.5" height="10.5" fill="#640099"/><rect x="1348" y="410" width="10.5" height="10.5" fill="#6b0099"/><rect x="1358" y="410" width="10.5" height="10.5" fill="#720099"/><rect x="1368" y="410" width="10.5" height="10.5" fill="#790099"/><rect x="1378" y="410" width="10.5" height="10.5" fill="#810099"/><rect x="1388" y="410" width="10.5" height="10.5" fill="#880099"/><rect x="1398" y="410" width="10.5" height="10.5" fill="#8f0099"/><rect x="1408" y="410" width="10.5" height="10.5" fill="#970099"/><rect x="1418" y="410" width="10.5" height="10.5" fill="#990093"/><rect x="1428" y="410" width="10.5" height="10.5" fill="#99008c"/><rect x="1438" y="410" width="10.5" height="10.5" fill="#990086"/><rect x="1448" y="410" width="10.5" height="10.5" fill="#990080"/><rect x="1458" y="410" width="10.5" height="10.5" fill="#99007b"/><rect x="1468" y="410" width="10.5" height="10.5" fill="#990076"/><rect x="1478" y="410" width="10.5" height="10.5" fill="#990072"/><rect x="1488" y="410" width="10.5" height="10.5" fill="#99006d"/><rect x="1498" y="410" width="10.5" height="10.5" fill="#990069"/><rect x="1508" y="410" width="10.5" height="10.5" fill="#990066"/><rect x="1518" y="410" width="10.5" height="10.5" fill="#990062"/><rect x="1528" y="410" width="10.5" height="10.5" fill="#99005f"/><rect x="1538" y="410" width="10.5" height="10.5" fill="#99005c"/><rect x="1548" y="410" width="10.5" height="10.5" fill="#990059"/><rect x="1558" y="410" width="10.5" height="10.5" fill="#990056"/><rect x="1568" y="410" width="10.5" height="10.5" fill="#990053"/><rect x="1578" y="410" width="10.5" height="10.5" fill="#990051"/><rect x="1588" y="410" width="10.5" height="10.5" fill="#99004e"/><rect x="1598" y="410" width="10.5" height="10.5" fill="#99004c"/><rect x="1608" y="410" width="10.5" height="10.5" fill="#99004a"/><rect x="1618" y="410" width="10.5" height="10.5" fill="#990048"/><rect x="1628" y="410" width="10.5" height="10.5" fill="#990046"/><rect x="1638" y="410" width="10.5" height="10.5" fill="#990044"/><rect x="1648" y="410" width="10.5" height="10.5" fill="#990042"/><rect x="1018" y="420" width="10.5" height="10.5" fill="#002799"/><rect x="1028" y="420" width="10.5" height="10.5" fill="#002699"/><rect x="1038" y="420" width="10.5" height="10.5" fill="#002499"/><rect x="1048" y="420" width="10.5" height="10.5" fill="#002399"/><rect x="1058" y="420" width="10.5" height="10.5" fill="#002199"/><rect x="1068" y="420" width="10.5" height="10.5" fill="#001f99"/><rect x="1078" y="420" width="10.5" height="10.5" fill="#001e99"/><rect x="1088" y="420" width="10.5" height="10.5" fill="#001c99"/><rect x="1098" y="420" width="10.5" height="10.5" fill="#001b99"/><rect x="1108" y="420" width="10.5" height="10.5" fill="#001999"/><rect x="1118" y="420" width="10.5" height="10.5" fill="#001799"/><rect x="1128" y="420" width="10.5" height="10.5" fill="#001699"/><rect x="1138" y="420" width="10.5" height="10.5" fill="#001499"/><rect x="1148" y="420" width="10.5" height="10.5" fill="#001299"/><rect x="1158" y="420" width="10.5" height="10.5" fill="#001199"/><rect x="1168" y="420" width="10.5" height="10.5" fill="#000f99"/><rect x="1178" y="420" width="10.5" height="10.5" fill="#000d99"/><rect x="1188" y="420" width="10.5" height="10.5" fill="#000c99"/><rect x="1198" y="420" width="10.5" height="10.5" fill="#0c18ff"/><rect x="1208" y="420" width="10.5" height="10.5" fill="#1914ff"/><rect x="1218" y="420" width="10.5" height="10.5" fill="#2611ff"/><rect x="1228" y="420" width="10.5" height="10.5" fill="#310dff"/><rect x="1238" y="420" width="10.5" height="10.5" fill="#3d09ff"/><rect x="1248" y="420" width="10.5" height="10.5" fill="#4804ff"/><rect x="1258" y="420" width="10.5" height="10.5" fill="#2a0099"/><rect x="1268" y="420" width="10.5" height="10.5" fill="#300099"/><rect x="1278" y="420" width="10.5" height="10.5" fill="#370099"/><rect x="1288" y="420" width="10.5" height="10.5" fill="#3d0099"/><rect x="1298" y="420" width="10.5" height="10.5" fill="#440099"/><rect x="1308" y="420" width="10.5" height="10.5" fill="#4b0099"/><rect x="1318" y="420" width="10.5" height="10.5" fill="#510099"/><rect x="1328" y="420" width="10.5" height="10.5" fill="#580099"/><rect x="1338" y="420" width="10.5" height="10.5" fill="#5f0099"/><rect x="1348" y="420" width="10.5" height="10.5" fill="#660099"/><rect x="1358" y="420" width="10.5" height="10.5" fill="#6d0099"/><rect x="1368" y="420" width="10.5" height="10.5" fill="#740099"/><rect x="1378" y="420" width="10.5" height="10.5" fill="#7a0099"/><rect x="1388" y="420" width="10.5" height="10.5" fill="#820099"/><rect x="1398" y="420" width="10.5" height="10.5" fill="#890099"/><rect x="1408" y="420" width="10.5" height="10.5" fill="#900099"/><rect x="1418" y="420" width="10.5" height="10.5" fill="#970099"/><rect x="1428" y="420" width="10.5" height="10.5" fill="#990093"/><rect x="1438" y="420" width="10.5" height="10.5" fill="#99008d"/><rect x="1448" y="420" width="10.5" height="10.5" fill="#990087"/><rect x="1458" y="420" width="10.5" height="10.5" fill="#990081"/><rect x="1468" y="420" width="10.5" height="10.5" fill="#99007c"/><rect x="1478" y="420" width="10.5" height="10.5" fill="#990077"/><rect x="1488" y="420" width="10.5" height="10.5" fill="#990073"/><rect x="1498" y="420" width="10.5" height="10.5" fill="#99006e"/><rect x="1508" y="420" width="10.5" height="10.5" fill="#99006b"/><rect x="1518" y="420" width="10.5" height="10.5" fill="#990067"/><rect x="1528" y="420" width="10.5" height="10.5" fill="#990063"/><rect x="1538" y="420" width="10.5" height="10.5" fill="#990060"/><rect x="1548" y="420" width="10.5" height="10.5" fill="#99005d"/><rect x="1558" y="420" width="10.5" height="10.5" fill="#99005a"/><rect x="1568" y="420" width="10.5" height="10.5" fill="#990057"/><rect x="1578" y="420" width="10.5" height="10.5" fill="#990055"/><rect x="1588" y="420" width="10.5" height="10.5" fill="#990052"/><rect x="1598" y="420" width="10.5" height="10.5" fill="#990050"/><rect x="1608" y="420" width="10.5" height="10.5" fill="#99004e"/><rect x="1618" y="420" width="10.5" height="10.5" fill="#99004c"/><rect x="1628" y="420" width="10.5" height="10.5" fill="#99004a"/><rect x="1638" y="420" width="10.5" height="10.5" fill="#990048"/><rect x="1648" y="420" width="10.5" height="10.5" fill="#990046"/><rect x="1018" y="430" width="10.5" height="10.5" fill="#002499"/><rect x="1028" y="430" width="10.5" height="10.5" fill="#002399"/><rect x="1038" y="430" width="10.5" height="10.5" fill="#002199"/><rect x="1048" y="430" width="10.5" height="10.5" fill="#002099"/><rect x="1058" y="430" width="10.5" height="10.5" fill="#001e99"/><rect x="1068" y="430" width="10.5" height="10.5" fill="#001d99"/><rect x="1078" y="430" width="10.5" height="10.5" fill="#001b99"/><rect x="1088" y="430" width="10.5" height="10.5" fill="#001a99"/><rect x="1098" y="430" width="10.5" height="10.5" fill="#001899"/><rect x="1108" y="430" width="10.5" height="10.5" fill="#001699"/><rect x="1118" y="430" width="10.5" height="10.5" fill="#001599"/><rect x="1128" y="430" width="10.5" height="10.5" fill="#001399"/><rect x="1138" y="430" width="10.5" height="10.5" fill="#001299"/><rect x="1148" y="430" width="10.5" height="10.5" fill="#001099"/><rect x="1158" y="430" width="10.5" height="10.5" fill="#000e99"/><rect x="1168" y="430" width="10.5" height="10.5" fill="#000d99"/><rect x="1178" y="430" width="10.5" height="10.5" fill="#000b99"/><rect x="1188" y="430" width="10.5" height="10.5" fill="#000999"/><rect x="1198" y="430" width="10.5" height="10.5" fill="#0a14ff"/><rect x="1208" y="430" width="10.5" height="10.5" fill="#1710ff"/><rect x="1218" y="430" width="10.5" height="10.5" fill="#230cff"/><rect x="1228" y="430" width="10.5" height="10.5" fill="#2e08ff"/><rect x="1238" y="430" width="10.5" height="10.5" fill="#3904ff"/><rect x="1248" y="430" width="10.5" height="10.5" fill="#210099"/><rect x="1258" y="430" width="10.5" height="10.5" fill="#280099"/><rect x="1268" y="430" width="10.5" height="10.5" fill="#2e0099"/><rect x="1278" y="430" width="10.5" height="10.5" fill="#340099"/><rect x="1288" y="430" width="10.5" height="10.5" fill="#3a0099"/><rect x="1298" y="430" width="10.5" height="10.5" fill="#410099"/><rect x="1308" y="430" width="10.5" height="10.5" fill="#470099"/><rect x="1318" y="430" width="10.5" height="10.5" fill="#4d0099"/><rect x="1328" y="430" width="10.5" height="10.5" fill="#540099"/><rect x="1338" y="430" width="10.5" height="10.5" fill="#5a0099"/><rect x="1348" y="430" width="10.5" height="10.5" fill="#610099"/><rect x="1358" y="430" width="10.5" height="10.5" fill="#670099"/><rect x="1368" y="430" width="10.5" height="10.5" fill="#6e0099"/><rect x="1378" y="430" width="10.5" height="10.5" fill="#750099"/><rect x="1388" y="430" width="10.5" height="10.5" fill="#7b0099"/><rect x="1398" y="430" width="10.5" height="10.5" fill="#820099"/><rect x="1408" y="430" width="10.5" height="10.5" fill="#890099"/><rect x="1418" y="430" width="10.5" height="10.5" fill="#900099"/><rect x="1428" y="430" width="10.5" height="10.5" fill="#970099"/><rect x="1438" y="430" width="10.5" height="10.5" fill="#990093"/><rect x="1448" y="430" width="10.5" height="10.5" fill="#99008d"/><rect x="1458" y="430" width="10.5" height="10.5" fill="#990087"/><rect x="1468" y="430" width="10.5" height="10.5" fill="#990082"/><rect x="1478" y="430" width="10.5" height="10.5" fill="#99007d"/><rect x="1488" y="430" width="10.5" height="10.5" fill="#990078"/><rect x="1498" y="430" width="10.5" height="10.5" fill="#990074"/><rect x="1508" y="430" width="10.5" height="10.5" fill="#990070"/><rect x="1518" y="430" width="10.5" height="10.5" fill="#99006c"/><rect x="1528" y="430" width="10.5" height="10.5" fill="#990068"/><rect x="1538" y="430" width="10.5" height="10.5" fill="#990065"/><rect x="1548" y="430" width="10.5" height="10.5" fill="#990062"/><rect x="1558" y="430" width="10.5" height="10.5" fill="#99005e"/><rect x="1568" y="430" width="10.5" height="10.5" fill="#99005c"/><rect x="1578" y="430" width="10.5" height="10.5" fill="#990059"/><rect x="1588" y="430" width="10.5" height="10.5" fill="#990056"/><rect x="1598" y="430" width="10.5" height="10.5" fill="#990054"/><rect x="1608" y="430" width="10.5" height="10.5" fill="#990051"/><rect x="1618" y="430" width="10.5" height="10.5" fill="#99004f"/><rect x="1628" y="430" width="10.5" height="10.5" fill="#99004d"/><rect x="1638" y="430" width="10.5" height="10.5" fill="#99004b"/><rect x="1648" y="430" width="10.5" height="10.5" fill="#990049"/><rect x="1018" y="440" width="10.5" height="10.5" fill="#002299"/><rect x="1028" y="440" width="10.5" height="10.5" fill="#002099"/><rect x="1038" y="440" width="10.5" height="10.5" fill="#001f99"/><rect x="1048" y="440" width="10.5" height="10.5" fill="#001d99"/><rect x="1058" y="440" width="10.5" height="10.5" fill="#001c99"/><rect x="1068" y="440" width="10.5" height="10.5" fill="#001a99"/><rect x="1078" y="440" width="10.5" height="10.5" fill="#001999"/><rect x="1088" y="440" width="10.5" height="10.5" fill="#001799"/><rect x="1098" y="440" width="10.5" height="10.5" fill="#001699"/><rect x="1108" y="440" width="10.5" height="10.5" fill="#001499"/><rect x="1118" y="440" width="10.5" height="10.5" fill="#001399"/><rect x="1128" y="440" width="10.5" height="10.5" fill="#001199"/><rect x="1138" y="440" width="10.5" height="10.5" fill="#000f99"/><rect x="1148" y="440" width="10.5" height="10.5" fill="#000e99"/><rect x="1158" y="440" width="10.5" height="10.5" fill="#000c99"/><rect x="1168" y="440" width="10.5" height="10.5" fill="#000b99"/><rect x="1178" y="440" width="10.5" height="10.5" fill="#000999"/><rect x="1188" y="440" width="10.5" height="10.5" fill="#000899"/><rect x="1198" y="440" width="10.5" height="10.5" fill="#0710ff"/><rect x="1208" y="440" width="10.5" height="10.5" fill="#140cff"/><rect x="1218" y="440" width="10.5" height="10.5" fill="#2008ff"/><rect x="1228" y="440" width="10.5" height="10.5" fill="#2b04ff"/><rect x="1238" y="440" width="10.5" height="10.5" fill="#190099"/><rect x="1248" y="440" width="10.5" height="10.5" fill="#1f0099"/><rect x="1258" y="440" width="10.5" height="10.5" fill="#250099"/><rect x="1268" y="440" width="10.5" height="10.5" fill="#2b0099"/><rect x="1278" y="440" width="10.5" height="10.5" fill="#310099"/><rect x="1288" y="440" width="10.5" height="10.5" fill="#370099"/><rect x="1298" y="440" width="10.5" height="10.5" fill="#3d0099"/><rect x="1308" y="440" width="10.5" height="10.5" fill="#430099"/><rect x="1318" y="440" width="10.5" height="10.5" fill="#4a0099"/><rect x="1328" y="440" width="10.5" height="10.5" fill="#500099"/><rect x="1338" y="440" width="10.5" height="10.5" fill="#560099"/><rect x="1348" y="440" width="10.5" height="10.5" fill="#5c0099"/><rect x="1358" y="440" width="10.5" height="10.5" fill="#630099"/><rect x="1368" y="440" width="10.5" height="10.5" fill="#690099"/><rect x="1378" y="440" width="10.5" height="10.5" fill="#6f0099"/><rect x="1388" y="440" width="10.5" height="10.5" fill="#760099"/><rect x="1398" y="440" width="10.5" height="10.5" fill="#7c0099"/><rect x="1408" y="440" width="10.5" height="10.5" fill="#830099"/><rect x="1418" y="440" width="10.5" height="10.5" fill="#8a0099"/><rect x="1428" y="440" width="10.5" height="10.5" fill="#900099"/><rect x="1438" y="440" width="10.5" height="10.5" fill="#970099"/><rect x="1448" y="440" width="10.5" height="10.5" fill="#990093"/><rect x="1458" y="440" width="10.5" height="10.5" fill="#99008d"/><rect x="1468" y="440" width="10.5" height="10.5" fill="#990088"/><rect x="1478" y="440" width="10.5" height="10.5" fill="#990082"/><rect x="1488" y="440" width="10.5" height="10.5" fill="#99007e"/><rect x="1498" y="440" width="10.5" height="10.5" fill="#990079"/><rect x="1508" y="440" width="10.5" height="10.5" fill="#990075"/><rect x="1518" y="440" width="10.5" height="10.5" fill="#990071"/><rect x="1528" y="440" width="10.5" height="10.5" fill="#99006d"/><rect x="1538" y="440" width="10.5" height="10.5" fill="#990069"/><rect x="1548" y="440" width="10.5" height="10.5" fill="#990066"/><rect x="1558" y="440" width="10.5" height="10.5" fill="#990063"/><rect x="1568" y="440" width="10.5" height="10.5" fill="#990060"/><rect x="1578" y="440" width="10.5" height="10.5" fill="#99005d"/><rect x="1588" y="440" width="10.5" height="10.5" fill="#99005a"/><rect x="1598" y="440" width="10.5" height="10.5" fill="#990058"/><rect x="1608" y="440" width="10.5" height="10.5" fill="#990055"/><rect x="1618" y="440" width="10.5" height="10.5" fill="#990053"/><rect x="1628" y="440" width="10.5" height="10.5" fill="#990051"/><rect x="1638" y="440" width="10.5" height="10.5" fill="#99004f"/><rect x="1648" y="440" width="10.5" height="10.5" fill="#99004d"/><rect x="1018" y="450" width="10.5" height="10.5" fill="#001f99"/><rect x="1028" y="450" width="10.5" height="10.5" fill="#001e99"/><rect x="1038" y="450" width="10.5" height="10.5" fill="#001c99"/><rect x="1048" y="450" width="10.5" height="10.5" fill="#001b99"/><rect x="1058" y="450" width="10.5" height="10.5" fill="#001999"/><rect x="1068" y="450" width="10.5" height="10.5" fill="#001899"/><rect x="1078" y="450" width="10.5" height="10.5" fill="#001699"/><rect x="1088" y="450" width="10.5" height="10.5" fill="#001599"/><rect x="1098" y="450" width="10.5" height="10.5" fill="#001399"/><rect x="1108" y="450" width="10.5" height="10.5" fill="#001299"/><rect x="1118" y="450" width="10.5" height="10.5" fill="#001099"/><rect x="1128" y="450" width="10.5" height="10.5" fill="#000f99"/><rect x="1138" y="450" width="10.5" height="10.5" fill="#000d99"/><rect x="1148" y="450" width="10.5" height="10.5" fill="#000c99"/><rect x="1158" y="450" width="10.5" height="10.5" fill="#000a99"/><rect x="1168" y="450" width="10.5" height="10.5" fill="#000999"/><rect x="1178" y="450" width="10.5" height="10.5" fill="#000799"/><rect x="1188" y="450" width="10.5" height="10.5" fill="#000699"/><rect x="1198" y="450" width="10.5" height="10.5" fill="#050cff"/><rect x="1208" y="450" width="10.5" height="10.5" fill="#1108ff"/><rect x="1218" y="450" width="10.5" height="10.5" fill="#1d04ff"/><rect x="1228" y="450" width="10.5" height="10.5" fill="#120099"/><rect x="1238" y="450" width="10.5" height="10.5" fill="#180099"/><rect x="1248" y="450" width="10.5" height="10.5" fill="#1d0099"/><rect x="1258" y="450" width="10.5" height="10.5" fill="#230099"/><rect x="1268" y="450" width="10.5" height="10.5" fill="#290099"/><rect x="1278" y="450" width="10.5" height="10.5" fill="#2e0099"/><rect x="1288" y="450" width="10.5" height="10.5" fill="#340099"/><rect x="1298" y="450" width="10.5" height="10.5" fill="#3a0099"/><rect x="1308" y="450" width="10.5" height="10.5" fill="#400099"/><rect x="1318" y="450" width="10.5" height="10.5" fill="#460099"/><rect x="1328" y="450" width="10.5" height="10.5" fill="#4c0099"/><rect x="1338" y="450" width="10.5" height="10.5" fill="#520099"/><rect x="1348" y="450" width="10.5" height="10.5" fill="#580099"/><rect x="1358" y="450" width="10.5" height="10.5" fill="#5e0099"/><rect x="1368" y="450" width="10.5" height="10.5" fill="#640099"/><rect x="1378" y="450" width="10.5" height="10.5" fill="#6b0099"/><rect x="1388" y="450" width="10.5" height="10.5" fill="#710099"/><rect x="1398" y="450" width="10.5" height="10.5" fill="#770099"/><rect x="1408" y="450" width="10.5" height="10.5" fill="#7d0099"/><rect x="1418" y="450" width="10.5" height="10.5" fill="#840099"/><rect x="1428" y="450" width="10.5" height="10.5" fill="#8a0099"/><rect x="1438" y="450" width="10.5" height="10.5" fill="#900099"/><rect x="1448" y="450" width="10.5" height="10.5" fill="#970099"/><rect x="1458" y="450" width="10.5" height="10.5" fill="#990094"/><rect x="1468" y="450" width="10.5" height="10.5" fill="#99008e"/><rect x="1478" y="450" width="10.5" height="10.5" fill="#990088"/><rect x="1488" y="450" width="10.5" height="10.5" fill="#990083"/><rect x="1498" y="450" width="10.5" height="10.5" fill="#99007e"/><rect x="1508" y="450" width="10.5" height="10.5" fill="#99007a"/><rect x="1518" y="450" width="10.5" height="10.5" fill="#990076"/><rect x="1528" y="450" width="10.5" height="10.5" fill="#990072"/><rect x="1538" y="450" width="10.5" height="10.5" fill="#99006e"/><rect x="1548" y="450" width="10.5" height="10.5" fill="#99006a"/><rect x="1558" y="450" width="10.5" height="10.5" fill="#990067"/><rect x="1568" y="450" width="10.5" height="10.5" fill="#990064"/><rect x="1578" y="450" width="10.5" height="10.5" fill="#990061"/><rect x="1588" y="450" width="10.5" height="10.5" fill="#99005e"/><rect x="1598" y="450" width="10.5" height="10.5" fill="#99005c"/><rect x="1608" y="450" width="10.5" height="10.5" fill="#990059"/><rect x="1618" y="450" width="10.5" height="10.5" fill="#990057"/><rect x="1628" y="450" width="10.5" height="10.5" fill="#990054"/><rect x="1638" y="450" width="10.5" height="10.5" fill="#990052"/><rect x="1648" y="450" width="10.5" height="10.5" fill="#990050"/><rect x="1018" y="460" width="10.5" height="10.5" fill="#001d99"/><rect x="1028" y="460" width="10.5" height="10.5" fill="#001b99"/><rect x="1038" y="460" width="10.5" height="10.5" fill="#001a99"/><rect x="1048" y="460" width="10.5" height="10.5" fill="#001899"/><rect x="1058" y="460" width="10.5" height="10.5" fill="#001799"/><rect x="1068" y="460" width="10.5" height="10.5" fill="#001699"/><rect x="1078" y="460" width="10.5" height="10.5" fill="#001499"/><rect x="1088" y="460" width="10.5" height="10.5" fill="#001399"/><rect x="1098" y="460" width="10.5" height="10.5" fill="#001199"/><rect x="1108" y="460" width="10.5" height="10.5" fill="#001099"/><rect x="1118" y="460" width="10.5" height="10.5" fill="#000e99"/><rect x="1128" y="460" width="10.5" height="10.5" fill="#000d99"/><rect x="1138" y="460" width="10.5" height="10.5" fill="#000b99"/><rect x="1148" y="460" width="10.5" height="10.5" fill="#000a99"/><rect x="1158" y="460" width="10.5" height="10.5" fill="#000999"/><rect x="1168" y="460" width="10.5" height="10.5" fill="#000799"/><rect x="1178" y="460" width="10.5" height="10.5" fill="#000599"/><rect x="1188" y="460" width="10.5" height="10.5" fill="#000499"/><rect x="1198" y="460" width="10.5" height="10.5" fill="#0208ff"/><rect x="1208" y="460" width="10.5" height="10.5" fill="#0f04ff"/><rect x="1218" y="460" width="10.5" height="10.5" fill="#0b0099"/><rect x="1228" y="460" width="10.5" height="10.5" fill="#100099"/><rect x="1238" y="460" width="10.5" height="10.5" fill="#160099"/><rect x="1248" y="460" width="10.5" height="10.5" fill="#1b0099"/><rect x="1258" y="460" width="10.5" height="10.5" fill="#210099"/><rect x="1268" y="460" width="10.5" height="10.5" fill="#260099"/><rect x="1278" y="460" width="10.5" height="10.5" fill="#2c0099"/><rect x="1288" y="460" width="10.5" height="10.5" fill="#320099"/><rect x="1298" y="460" width="10.5" height="10.5" fill="#370099"/><rect x="1308" y="460" width="10.5" height="10.5" fill="#3d0099"/><rect x="1318" y="460" width="10.5" height="10.5" fill="#430099"/><rect x="1328" y="460" width="10.5" height="10.5" fill="#490099"/><rect x="1338" y="460" width="10.5" height="10.5" fill="#4e0099"/><rect x="1348" y="460" width="10.5" height="10.5" fill="#540099"/><rect x="1358" y="460" width="10.5" height="10.5" fill="#5a0099"/><rect x="1368" y="460" width="10.5" height="10.5" fill="#600099"/><rect x="1378" y="460" width="10.5" height="10.5" fill="#660099"/><rect x="1388" y="460" width="10.5" height="10.5" fill="#6c0099"/><rect x="1398" y="460" width="10.5" height="10.5" fill="#720099"/><rect x="1408" y="460" width="10.5" height="10.5" fill="#780099"/><rect x="1418" y="460" width="10.5" height="10.5" fill="#7e0099"/><rect x="1428" y="460" width="10.5" height="10.5" fill="#840099"/><rect x="1438" y="460" width="10.5" height="10.5" fill="#8a0099"/><rect x="1448" y="460" width="10.5" height="10.5" fill="#910099"/><rect x="1458" y="460" width="10.5" height="10.5" fill="#970099"/><rect x="1468" y="460" width="10.5" height="10.5" fill="#990094"/><rect x="1478" y="460" width="10.5" height="10.5" fill="#99008e"/><rect x="1488" y="460" width="10.5" height="10.5" fill="#990089"/><rect x="1498" y="460" width="10.5" height="10.5" fill="#990084"/><rect x="1508" y="460" width="10.5" height="10.5" fill="#99007f"/><rect x="1518" y="460" width="10.5" height="10.5" fill="#99007b"/><rect x="1528" y="460" width="10.5" height="10.5" fill="#990077"/><rect x="1538" y="460" width="10.5" height="10.5" fill="#990073"/><rect x="1548" y="460" width="10.5" height="10.5" fill="#99006f"/><rect x="1558" y="460" width="10.5" height="10.5" fill="#99006c"/><rect x="1568" y="460" width="10.5" height="10.5" fill="#990068"/><rect x="1578" y="460" width="10.5" height="10.5" fill="#990065"/><rect x="1588" y="460" width="10.5" height="10.5" fill="#990062"/><rect x="1598" y="460" width="10.5" height="10.5" fill="#99005f"/><rect x="1608" y="460" width="10.5" height="10.5" fill="#99005d"/><rect x="1618" y="460" width="10.5" height="10.5" fill="#99005a"/><rect x="1628" y="460" width="10.5" height="10.5" fill="#990058"/><rect x="1638" y="460" width="10.5" height="10.5" fill="#990056"/><rect x="1648" y="460" width="10.5" height="10.5" fill="#990053"/><rect x="1018" y="470" width="10.5" height="10.5" fill="#001a99"/><rect x="1028" y="470" width="10.5" height="10.5" fill="#001999"/><rect x="1038" y="470" width="10.5" height="10.5" fill="#001899"/><rect x="1048" y="470" width="10.5" height="10.5" fill="#001699"/><rect x="1058" y="470" width="10.5" height="10.5" fill="#001599"/><rect x="1068" y="470" width="10.5" height="10.5" fill="#001499"/><rect x="1078" y="470" width="10.5" height="10.5" fill="#001299"/><rect x="1088" y="470" width="10.5" height="10.5" fill="#001199"/><rect x="1098" y="470" width="10.5" height="10.5" fill="#000f99"/><rect x="1108" y="470" width="10.5" height="10.5" fill="#000e99"/><rect x="1118" y="470" width="10.5" height="10.5" fill="#000d99"/><rect x="1128" y="470" width="10.5" height="10.5" fill="#000b99"/><rect x="1138" y="470" width="10.5" height="10.5" fill="#000a99"/><rect x="1148" y="470" width="10.5" height="10.5" fill="#000899"/><rect x="1158" y="470" width="10.5" height="10.5" fill="#000799"/><rect x="1168" y="470" width="10.5" height="10.5" fill="#000599"/><rect x="1178" y="470" width="10.5" height="10.5" fill="#000499"/><rect x="1188" y="470" width="10.5" height="10.5" fill="#000299"/><rect x="1198" y="470" width="10.5" height="10.5" fill="#000199"/><rect x="1208" y="470" width="10.5" height="10.5" fill="#050099"/><rect x="1218" y="470" width="10.5" height="10.5" fill="#0a0099"/><rect x="1228" y="470" width="10.5" height="10.5" fill="#0f0099"/><rect x="1238" y="470" width="10.5" height="10.5" fill="#140099"/><rect x="1248" y="470" width="10.5" height="10.5" fill="#1a0099"/><rect x="1258" y="470" width="10.5" height="10.5" fill="#1f0099"/><rect x="1268" y="470" width="10.5" height="10.5" fill="#240099"/><rect x="1278" y="470" width="10.5" height="10.5" fill="#2a0099"/><rect x="1288" y="470" width="10.5" height="10.5" fill="#2f0099"/><rect x="1298" y="470" width="10.5" height="10.5" fill="#350099"/><rect x="1308" y="470" width="10.5" height="10.5" fill="#3a0099"/><rect x="1318" y="470" width="10.5" height="10.5" fill="#400099"/><rect x="1328" y="470" width="10.5" height="10.5" fill="#450099"/><rect x="1338" y="470" width="10.5" height="10.5" fill="#4b0099"/><rect x="1348" y="470" width="10.5" height="10.5" fill="#510099"/><rect x="1358" y="470" width="10.5" height="10.5" fill="#560099"/><rect x="1368" y="470" width="10.5" height="10.5" fill="#5c0099"/><rect x="1378" y="470" width="10.5" height="10.5" fill="#620099"/><rect x="1388" y="470" width="10.5" height="10.5" fill="#670099"/><rect x="1398" y="470" width="10.5" height="10.5" fill="#6d0099"/><rect x="1408" y="470" width="10.5" height="10.5" fill="#730099"/><rect x="1418" y="470" width="10.5" height="10.5" fill="#790099"/><rect x="1428" y="470" width="10.5" height="10.5" fill="#7f0099"/><rect x="1438" y="470" width="10.5" height="10.5" fill="#850099"/><rect x="1448" y="470" width="10.5" height="10.5" fill="#8b0099"/><rect x="1458" y="470" width="10.5" height="10.5" fill="#910099"/><rect x="1468" y="470" width="10.5" height="10.5" fill="#970099"/><rect x="1478" y="470" width="10.5" height="10.5" fill="#990094"/><rect x="1488" y="470" width="10.5" height="10.5" fill="#99008e"/><rect x="1498" y="470" width="10.5" height="10.5" fill="#990089"/><rect x="1508" y="470" width="10.5" height="10.5" fill="#990084"/><rect x="1518" y="470" width="10.5" height="10.5" fill="#990080"/><rect x="1528" y="470" width="10.5" height="10.5" fill="#99007b"/><rect x="1538" y="470" width="10.5" height="10.5" fill="#990077"/><rect x="1548" y="470" width="10.5" height="10.5" fill="#990074"/><rect x="1558" y="470" width="10.5" height="10.5" fill="#990070"/><rect x="1568" y="470" width="10.5" height="10.5" fill="#99006d"/><rect x="1578" y="470" width="10.5" height="10.5" fill="#990069"/><rect x="1588" y="470" width="10.5" height="10.5" fill="#990066"/><rect x="1598" y="470" width="10.5" height="10.5" fill="#990063"/><rect x="1608" y="470" width="10.5" height="10.5" fill="#990061"/><rect x="1618" y="470" width="10.5" height="10.5" fill="#99005e"/><rect x="1628" y="470" width="10.5" height="10.5" fill="#99005c"/><rect x="1638" y="470" width="10.5" height="10.5" fill="#990059"/><rect x="1648" y="470" width="10.5" height="10.5" fill="#990057"/><rect x="1018" y="480" width="10.5" height="10.5" fill="#001899"/><rect x="1028" y="480" width="10.5" height="10.5" fill="#001799"/><rect x="1038" y="480" width="10.5" height="10.5" fill="#001699"/><rect x="1048" y="480" width="10.5" height="10.5" fill="#001499"/><rect x="1058" y="480" width="10.5" height="10.5" fill="#001399"/><rect x="1068" y="480" width="10.5" height="10.5" fill="#001299"/><rect x="1078" y="480" width="10.5" height="10.5" fill="#001099"/><rect x="1088" y="480" width="10.5" height="10.5" fill="#000f99"/><rect x="1098" y="480" width="10.5" height="10.5" fill="#000d99"/><rect x="1108" y="480" width="10.5" height="10.5" fill="#000c99"/><rect x="1118" y="480" width="10.5" height="10.5" fill="#000b99"/><rect x="1128" y="480" width="10.5" height="10.5" fill="#000999"/><rect x="1138" y="480" width="10.5" height="10.5" fill="#000899"/><rect x="1148" y="480" width="10.5" height="10.5" fill="#000799"/><rect x="1158" y="480" width="10.5" height="10.5" fill="#000599"/><rect x="1168" y="480" width="10.5" height="10.5" fill="#000499"/><rect x="1178" y="480" width="10.5" height="10.5" fill="#000299"/><rect x="1188" y="480" width="10.5" height="10.5" fill="#000199"/><rect x="1198" y="480" width="10.5" height="10.5" fill="#000099"/><rect x="1208" y="480" width="10.5" height="10.5" fill="#040099"/><rect x="1218" y="480" width="10.5" height="10.5" fill="#090099"/><rect x="1228" y="480" width="10.5" height="10.5" fill="#0e0099"/><rect x="1238" y="480" width="10.5" height="10.5" fill="#130099"/><rect x="1248" y="480" width="10.5" height="10.5" fill="#180099"/><rect x="1258" y="480" width="10.5" height="10.5" fill="#1d0099"/><rect x="1268" y="480" width="10.5" height="10.5" fill="#220099"/><rect x="1278" y="480" width="10.5" height="10.5" fill="#280099"/><rect x="1288" y="480" width="10.5" height="10.5" fill="#2d0099"/><rect x="1298" y="480" width="10.5" height="10.5" fill="#320099"/><rect x="1308" y="480" width="10.5" height="10.5" fill="#370099"/><rect x="1318" y="480" width="10.5" height="10.5" fill="#3d0099"/><rect x="1328" y="480" width="10.5" height="10.5" fill="#420099"/><rect x="1338" y="480" width="10.5" height="10.5" fill="#480099"/><rect x="1348" y="480" width="10.5" height="10.5" fill="#4d0099"/><rect x="1358" y="480" width="10.5" height="10.5" fill="#530099"/><rect x="1368" y="480" width="10.5" height="10.5" fill="#580099"/><rect x="1378" y="480" width="10.5" height="10.5" fill="#5e0099"/><rect x="1388" y="480" width="10.5" height="10.5" fill="#630099"/><rect x="1398" y="480" width="10.5" height="10.5" fill="#690099"/><rect x="1408" y="480" width="10.5" height="10.5" fill="#6e0099"/><rect x="1418" y="480" width="10.5" height="10.5" fill="#740099"/><rect x="1428" y="480" width="10.5" height="10.5" fill="#7a0099"/><rect x="1438" y="480" width="10.5" height="10.5" fill="#800099"/><rect x="1448" y="480" width="10.5" height="10.5" fill="#850099"/><rect x="1458" y="480" width="10.5" height="10.5" fill="#8b0099"/><rect x="1468" y="480" width="10.5" height="10.5" fill="#910099"/><rect x="1478" y="480" width="10.5" height="10.5" fill="#970099"/><rect x="1488" y="480" width="10.5" height="10.5" fill="#990094"/><rect x="1498" y="480" width="10.5" height="10.5" fill="#99008f"/><rect x="1508" y="480" width="10.5" height="10.5" fill="#99008a"/><rect x="1518" y="480" width="10.5" height="10.5" fill="#990085"/><rect x="1528" y="480" width="10.5" height="10.5" fill="#990080"/><rect x="1538" y="480" width="10.5" height="10.5" fill="#99007c"/><rect x="1548" y="480" width="10.5" height="10.5" fill="#990078"/><rect x="1558" y="480" width="10.5" height="10.5" fill="#990075"/><rect x="1568" y="480" width="10.5" height="10.5" fill="#990071"/><rect x="1578" y="480" width="10.5" height="10.5" fill="#99006e"/><rect x="1588" y="480" width="10.5" height="10.5" fill="#99006a"/><rect x="1598" y="480" width="10.5" height="10.5" fill="#990067"/><rect x="1608" y="480" width="10.5" height="10.5" fill="#990065"/><rect x="1618" y="480" width="10.5" height="10.5" fill="#990062"/><rect x="1628" y="480" width="10.5" height="10.5" fill="#99005f"/><rect x="1638" y="480" width="10.5" height="10.5" fill="#99005d"/><rect x="1648" y="480" width="10.5" height="10.5" fill="#99005a"/><rect x="1018" y="490" width="10.5" height="10.5" fill="#001699"/><rect x="1028" y="490" width="10.5" height="10.5" fill="#001599"/><rect x="1038" y="490" width="10.5" height="10.5" fill="#001499"/><rect x="1048" y="490" width="10.5" height="10.5" fill="#001299"/><rect x="1058" y="490" width="10.5" height="10.5" fill="#001199"/><rect x="1068" y="490" width="10.5" height="10.5" fill="#001099"/><rect x="1078" y="490" width="10.5" height="10.5" fill="#000e99"/><rect x="1088" y="490" width="10.5" height="10.5" fill="#000d99"/><rect x="1098" y="490" width="10.5" height="10.5" fill="#000c99"/><rect x="1108" y="490" width="10.5" height="10.5" fill="#000a99"/><rect x="1118" y="490" width="10.5" height="10.5" fill="#000999"/><rect x="1128" y="490" width="10.5" height="10.5" fill="#000899"/><rect x="1138" y="490" width="10.5" height="10.5" fill="#000699"/><rect x="1148" y="490" width="10.5" height="10.5" fill="#000599"/><rect x="1158" y="490" width="10.5" height="10.5" fill="#000499"/><rect x="1168" y="490" width="10.5" height="10.5" fill="#000299"/><rect x="1178" y="490" width="10.5" height="10.5" fill="#000199"/><rect x="1188" y="490" width="10.5" height="10.5" fill="#000099"/><rect x="1198" y="490" width="10.5" height="10.5" fill="#000099"/><rect x="1208" y="490" width="10.5" height="10.5" fill="#030099"/><rect x="1218" y="490" width="10.5" height="10.5" fill="#080099"/><rect x="1228" y="490" width="10.5" height="10.5" fill="#0d0099"/><rect x="1238" y="490" width="10.5" height="10.5" fill="#110099"/><rect x="1248" y="490" width="10.5" height="10.5" fill="#160099"/><rect x="1258" y="490" width="10.5" height="10.5" fill="#1b0099"/><rect x="1268" y="490" width="10.5" height="10.5" fill="#210099"/><rect x="1278" y="490" width="10.5" height="10.5" fill="#260099"/><rect x="1288" y="490" width="10.5" height="10.5" fill="#2b0099"/><rect x="1298" y="490" width="10.5" height="10.5" fill="#300099"/><rect x="1308" y="490" width="10.5" height="10.5" fill="#350099"/><rect x="1318" y="490" width="10.5" height="10.5" fill="#3a0099"/><rect x="1328" y="490" width="10.5" height="10.5" fill="#3f0099"/><rect x="1338" y="490" width="10.5" height="10.5" fill="#450099"/><rect x="1348" y="490" width="10.5" height="10.5" fill="#4a0099"/><rect x="1358" y="490" width="10.5" height="10.5" fill="#4f0099"/><rect x="1368" y="490" width="10.5" height="10.5" fill="#550099"/><rect x="1378" y="490" width="10.5" height="10.5" fill="#5a0099"/><rect x="1388" y="490" width="10.5" height="10.5" fill="#5f0099"/><rect x="1398" y="490" width="10.5" height="10.5" fill="#650099"/><rect x="1408" y="490" width="10.5" height="10.5" fill="#6a0099"/><rect x="1418" y="490" width="10.5" height="10.5" fill="#700099"/><rect x="1428" y="490" width="10.5" height="10.5" fill="#750099"/><rect x="1438" y="490" width="10.5" height="10.5" fill="#7b0099"/><rect x="1448" y="490" width="10.5" height="10.5" fill="#800099"/><rect x="1458" y="490" width="10.5" height="10.5" fill="#860099"/><rect x="1468" y="490" width="10.5" height="10.5" fill="#8c0099"/><rect x="1478" y="490" width="10.5" height="10.5" fill="#910099"/><rect x="1488" y="490" width="10.5" height="10.5" fill="#970099"/><rect x="1498" y="490" width="10.5" height="10.5" fill="#990094"/><rect x="1508" y="490" width="10.5" height="10.5" fill="#99008f"/><rect x="1518" y="490" width="10.5" height="10.5" fill="#99008a"/><rect x="1528" y="490" width="10.5" height="10.5" fill="#990085"/><rect x="1538" y="490" width="10.5" height="10.5" fill="#990081"/><rect x="1548" y="490" width="10.5" height="10.5" fill="#99007d"/><rect x="1558" y="490" width="10.5" height="10.5" fill="#990079"/><rect x="1568" y="490" width="10.5" height="10.5" fill="#990075"/><rect x="1578" y="490" width="10.5" height="10.5" fill="#990072"/><rect x="1588" y="490" width="10.5" height="10.5" fill="#99006f"/><rect x="1598" y="490" width="10.5" height="10.5" fill="#99006b"/><rect x="1608" y="490" width="10.5" height="10.5" fill="#990068"/><rect x="1618" y="490" width="10.5" height="10.5" fill="#990066"/><rect x="1628" y="490" width="10.5" height="10.5" fill="#990063"/><rect x="1638" y="490" width="10.5" height="10.5" fill="#990060"/><rect x="1648" y="490" width="10.5" height="10.5" fill="#99005e"/><rect x="1018" y="500" width="10.5" height="10.5" fill="#001499"/><rect x="1028" y="500" width="10.5" height="10.5" fill="#001399"/><rect x="1038" y="500" width="10.5" height="10.5" fill="#001299"/><rect x="1048" y="500" width="10.5" height="10.5" fill="#001199"/><rect x="1058" y="500" width="10.5" height="10.5" fill="#000f99"/><rect x="1068" y="500" width="10.5" height="10.5" fill="#000e99"/><rect x="1078" y="500" width="10.5" height="10.5" fill="#000d99"/><rect x="1088" y="500" width="10.5" height="10.5" fill="#000b99"/><rect x="1098" y="500" width="10.5" height="10.5" fill="#000a99"/><rect x="1108" y="500" width="10.5" height="10.5" fill="#000999"/><rect x="1118" y="500" width="10.5" height="10.5" fill="#000799"/><rect x="1128" y="500" width="10.5" height="10.5" fill="#000699"/><rect x="1138" y="500" width="10.5" height="10.5" fill="#000599"/><rect x="1148" y="500" width="10.5" height="10.5" fill="#000499"/><rect x="1158" y="500" width="10.5" height="10.5" fill="#000299"/><rect x="1168" y="500" width="10.5" height="10.5" fill="#000199"/><rect x="1178" y="500" width="10.5" height="10.5" fill="#000099"/><rect x="1188" y="500" width="10.5" height="10.5" fill="#000099"/><rect x="1198" y="500" width="10.5" height="10.5" fill="#000099"/><rect x="1208" y="500" width="10.5" height="10.5" fill="#020099"/><rect x="1218" y="500" width="10.5" height="10.5" fill="#070099"/><rect x="1228" y="500" width="10.5" height="10.5" fill="#0b0099"/><rect x="1238" y="500" width="10.5" height="10.5" fill="#100099"/><rect x="1248" y="500" width="10.5" height="10.5" fill="#150099"/><rect x="1258" y="500" width="10.5" height="10.5" fill="#1a0099"/><rect x="1268" y="500" width="10.5" height="10.5" fill="#1f0099"/><rect x="1278" y="500" width="10.5" height="10.5" fill="#240099"/><rect x="1288" y="500" width="10.5" height="10.5" fill="#290099"/><rect x="1298" y="500" width="10.5" height="10.5" fill="#2e0099"/><rect x="1308" y="500" width="10.5" height="10.5" fill="#330099"/><rect x="1318" y="500" width="10.5" height="10.5" fill="#380099"/><rect x="1328" y="500" width="10.5" height="10.5" fill="#3d0099"/><rect x="1338" y="500" width="10.5" height="10.5" fill="#420099"/><rect x="1348" y="500" width="10.5" height="10.5" fill="#470099"/><rect x="1358" y="500" width="10.5" height="10.5" fill="#4c0099"/><rect x="1368" y="500" width="10.5" height="10.5" fill="#510099"/><rect x="1378" y="500" width="10.5" height="10.5" fill="#560099"/><rect x="1388" y="500" width="10.5" height="10.5" fill="#5c0099"/><rect x="1398" y="500" width="10.5" height="10.5" fill="#610099"/><rect x="1408" y="500" width="10.5" height="10.5" fill="#660099"/><rect x="1418" y="500" width="10.5" height="10.5" fill="#6b0099"/><rect x="1428" y="500" width="10.5" height="10.5" fill="#710099"/><rect x="1438" y="500" width="10.5" height="10.5" fill="#760099"/><rect x="1448" y="500" width="10.5" height="10.5" fill="#7c0099"/><rect x="1458" y="500" width="10.5" height="10.5" fill="#810099"/><rect x="1468" y="500" width="10.5" height="10.5" fill="#860099"/><rect x="1478" y="500" width="10.5" height="10.5" fill="#8c0099"/><rect x="1488" y="500" width="10.5" height="10.5" fill="#910099"/><rect x="1498" y="500" width="10.5" height="10.5" fill="#970099"/><rect x="1508" y="500" width="10.5" height="10.5" fill="#990094"/><rect x="1518" y="500" width="10.5" height="10.5" fill="#99008f"/><rect x="1528" y="500" width="10.5" height="10.5" fill="#99008a"/><rect x="1538" y="500" width="10.5" height="10.5" fill="#990086"/><rect x="1548" y="500" width="10.5" height="10.5" fill="#990082"/><rect x="1558" y="500" width="10.5" height="10.5" fill="#99007e"/><rect x="1568" y="500" width="10.5" height="10.5" fill="#99007a"/><rect x="1578" y="500" width="10.5" height="10.5" fill="#990076"/><rect x="1588" y="500" width="10.5" height="10.5" fill="#990073"/><rect x="1598" y="500" width="10.5" height="10.5" fill="#99006f"/><rect x="1608" y="500" width="10.5" height="10.5" fill="#99006c"/><rect x="1618" y="500" width="10.5" height="10.5" fill="#990069"/><rect x="1628" y="500" width="10.5" height="10.5" fill="#990067"/><rect x="1638" y="500" width="10.5" height="10.5" fill="#990064"/><rect x="1648" y="500" width="10.5" height="10.5" fill="#990061"/><rect x="1018" y="510" width="10.5" height="10.5" fill="#001299"/><rect x="1028" y="510" width="10.5" height="10.5" fill="#001199"/><rect x="1038" y="510" width="10.5" height="10.5" fill="#001099"/><rect x="1048" y="510" width="10.5" height="10.5" fill="#000f99"/><rect x="1058" y="510" width="10.5" height="10.5" fill="#000e99"/><rect x="1068" y="510" width="10.5" height="10.5" fill="#000c99"/><rect x="1078" y="510" width="10.5" height="10.5" fill="#000b99"/><rect x="1088" y="510" width="10.5" height="10.5" fill="#000a99"/><rect x="1098" y="510" width="10.5" height="10.5" fill="#000999"/><rect x="1108" y="510" width="10.5" height="10.5" fill="#000799"/><rect x="1118" y="510" width="10.5" height="10.5" fill="#000699"/><rect x="1128" y="510" width="10.5" height="10.5" fill="#000599"/><rect x="1138" y="510" width="10.5" height="10.5" fill="#000399"/><rect x="1148" y="510" width="10.5" height="10.5" fill="#000299"/><rect x="1158" y="510" width="10.5" height="10.5" fill="#000199"/><rect x="1168" y="510" width="10.5" height="10.5" fill="#000099"/><rect x="1178" y="510" width="10.5" height="10.5" fill="#000099"/><rect x="1188" y="510" width="10.5" height="10.5" fill="#000099"/><rect x="1198" y="510" width="10.5" height="10.5" fill="#000099"/><rect x="1208" y="510" width="10.5" height="10.5" fill="#010099"/><rect x="1218" y="510" width="10.5" height="10.5" fill="#060099"/><rect x="1228" y="510" width="10.5" height="10.5" fill="#0a0099"/><rect x="1238" y="510" width="10.5" height="10.5" fill="#0f0099"/><rect x="1248" y="510" width="10.5" height="10.5" fill="#140099"/><rect x="1258" y="510" width="10.5" height="10.5" fill="#180099"/><rect x="1268" y="510" width="10.5" height="10.5" fill="#1d0099"/><rect x="1278" y="510" width="10.5" height="10.5" fill="#220099"/><rect x="1288" y="510" width="10.5" height="10.5" fill="#270099"/><rect x="1298" y="510" width="10.5" height="10.5" fill="#2c0099"/><rect x="1308" y="510" width="10.5" height="10.5" fill="#300099"/><rect x="1318" y="510" width="10.5" height="10.5" fill="#350099"/><rect x="1328" y="510" width="10.5" height="10.5" fill="#3a0099"/><rect x="1338" y="510" width="10.5" height="10.5" fill="#3f0099"/><rect x="1348" y="510" width="10.5" height="10.5" fill="#440099"/><rect x="1358" y="510" width="10.5" height="10.5" fill="#490099"/><rect x="1368" y="510" width="10.5" height="10.5" fill="#4e0099"/><rect x="1378" y="510" width="10.5" height="10.5" fill="#530099"/><rect x="1388" y="510" width="10.5" height="10.5" fill="#580099"/><rect x="1398" y="510" width="10.5" height="10.5" fill="#5d0099"/><rect x="1408" y="510" width="10.5" height="10.5" fill="#620099"/><rect x="1418" y="510" width="10.5" height="10.5" fill="#670099"/><rect x="1428" y="510" width="10.5" height="10.5" fill="#6d0099"/><rect x="1438" y="510" width="10.5" height="10.5" fill="#720099"/><rect x="1448" y="510" width="10.5" height="10.5" fill="#770099"/><rect x="1458" y="510" width="10.5" height="10.5" fill="#7c0099"/><rect x="1468" y="510" width="10.5" height="10.5" fill="#820099"/><rect x="1478" y="510" width="10.5" height="10.5" fill="#870099"/><rect x="1488" y="510" width="10.5" height="10.5" fill="#8c0099"/><rect x="1498" y="510" width="10.5" height="10.5" fill="#920099"/><rect x="1508" y="510" width="10.5" height="10.5" fill="#970099"/><rect x="1518" y="510" width="10.5" height="10.5" fill="#990095"/><rect x="1528" y="510" width="10.5" height="10.5" fill="#990090"/><rect x="1538" y="510" width="10.5" height="10.5" fill="#99008b"/><rect x="1548" y="510" width="10.5" height="10.5" fill="#990086"/><rect x="1558" y="510" width="10.5" height="10.5" fill="#990082"/><rect x="1568" y="510" width="10.5" height="10.5" fill="#99007e"/><rect x="1578" y="510" width="10.5" height="10.5" fill="#99007a"/><rect x="1588" y="510" width="10.5" height="10.5" fill="#990077"/><rect x="1598" y="510" width="10.5" height="10.5" fill="#990074"/><rect x="1608" y="510" width="10.5" height="10.5" fill="#990070"/><rect x="1618" y="510" width="10.5" height="10.5" fill="#99006d"/><rect x="1628" y="510" width="10.5" height="10.5" fill="#99006a"/><rect x="1638" y="510" width="10.5" height="10.5" fill="#990068"/><rect x="1648" y="510" width="10.5" height="10.5" fill="#990065"/><rect x="1018" y="520" width="10.5" height="10.5" fill="#001199"/><rect x="1028" y="520" width="10.5" height="10.5" fill="#001099"/><rect x="1038" y="520" width="10.5" height="10.5" fill="#000e99"/><rect x="1048" y="520" width="10.5" height="10.5" fill="#000d99"/><rect x="1058" y="520" width="10.5" height="10.5" fill="#000c99"/><rect x="1068" y="520" width="10.5" height="10.5" fill="#000b99"/><rect x="1078" y="520" width="10.5" height="10.5" fill="#000a99"/><rect x="1088" y="520" width="10.5" height="10.5" fill="#000899"/><rect x="1098" y="520" width="10.5" height="10.5" fill="#000799"/><rect x="1108" y="520" width="10.5" height="10.5" fill="#000699"/><rect x="1118" y="520" width="10.5" height="10.5" fill="#000599"/><rect x="1128" y="520" width="10.5" height="10.5" fill="#000399"/><rect x="1138" y="520" width="10.5" height="10.5" fill="#000299"/><rect x="1148" y="520" width="10.5" height="10.5" fill="#000199"/><rect x="1158" y="520" width="10.5" height="10.5" fill="#000099"/><rect x="1168" y="520" width="10.5" height="10.5" fill="#000099"/><rect x="1178" y="520" width="10.5" height="10.5" fill="#000099"/><rect x="1188" y="520" width="10.5" height="10.5" fill="#000099"/><rect x="1198" y="520" width="10.5" height="10.5" fill="#000099"/><rect x="1208" y="520" width="10.5" height="10.5" fill="#000099"/><rect x="1218" y="520" width="10.5" height="10.5" fill="#050099"/><rect x="1228" y="520" width="10.5" height="10.5" fill="#090099"/><rect x="1238" y="520" width="10.5" height="10.5" fill="#0e0099"/><rect x="1248" y="520" width="10.5" height="10.5" fill="#120099"/><rect x="1258" y="520" width="10.5" height="10.5" fill="#170099"/><rect x="1268" y="520" width="10.5" height="10.5" fill="#1c0099"/><rect x="1278" y="520" width="10.5" height="10.5" fill="#200099"/><rect x="1288" y="520" width="10.5" height="10.5" fill="#250099"/><rect x="1298" y="520" width="10.5" height="10.5" fill="#2a0099"/><rect x="1308" y="520" width="10.5" height="10.5" fill="#2e0099"/><rect x="1318" y="520" width="10.5" height="10.5" fill="#330099"/><rect x="1328" y="520" width="10.5" height="10.5" fill="#380099"/><rect x="1338" y="520" width="10.5" height="10.5" fill="#3d0099"/><rect x="1348" y="520" width="10.5" height="10.5" fill="#410099"/><rect x="1358" y="520" width="10.5" height="10.5" fill="#460099"/><rect x="1368" y="520" width="10.5" height="10.5" fill="#4b0099"/><rect x="1378" y="520" width="10.5" height="10.5" fill="#500099"/><rect x="1388" y="520" width="10.5" height="10.5" fill="#550099"/><rect x="1398" y="520" width="10.5" height="10.5" fill="#5a0099"/><rect x="1408" y="520" width="10.5" height="10.5" fill="#5f0099"/><rect x="1418" y="520" width="10.5" height="10.5" fill="#640099"/><rect x="1428" y="520" width="10.5" height="10.5" fill="#690099"/><rect x="1438" y="520" width="10.5" height="10.5" fill="#6e0099"/><rect x="1448" y="520" width="10.5" height="10.5" fill="#730099"/><rect x="1458" y="520" width="10.5" height="10.5" fill="#780099"/><rect x="1468" y="520" width="10.5" height="10.5" fill="#7d0099"/><rect x="1478" y="520" width="10.5" height="10.5" fill="#820099"/><rect x="1488" y="520" width="10.5" height="10.5" fill="#870099"/><rect x="1498" y="520" width="10.5" height="10.5" fill="#8d0099"/><rect x="1508" y="520" width="10.5" height="10.5" fill="#920099"/><rect x="1518" y="520" width="10.5" height="10.5" fill="#970099"/><rect x="1528" y="520" width="10.5" height="10.5" fill="#990095"/><rect x="1538" y="520" width="10.5" height="10.5" fill="#990090"/><rect x="1548" y="520" width="10.5" height="10.5" fill="#99008b"/><rect x="1558" y="520" width="10.5" height="10.5" fill="#990087"/><rect x="1568" y="520" width="10.5" height="10.5" fill="#990083"/><rect x="1578" y="520" width="10.5" height="10.5" fill="#99007f"/><rect x="1588" y="520" width="10.5" height="10.5" fill="#99007b"/><rect x="1598" y="520" width="10.5" height="10.5" fill="#990078"/><rect x="1608" y="520" width="10.5" height="10.5" fill="#990074"/><rect x="1618" y="520" width="10.5" height="10.5" fill="#990071"/><rect x="1628" y="520" width="10.5" height="10.5" fill="#99006e"/><rect x="1638" y="520" width="10.5" height="10.5" fill="#99006b"/><rect x="1648" y="520" width="10.5" height="10.5" fill="#990069"/><rect x="1018" y="530" width="10.5" height="10.5" fill="#000f99"/><rect x="1028" y="530" width="10.5" height="10.5" fill="#000e99"/><rect x="1038" y="530" width="10.5" height="10.5" fill="#000d99"/><rect x="1048" y="530" width="10.5" height="10.5" fill="#000c99"/><rect x="1058" y="530" width="10.5" height="10.5" fill="#000a99"/><rect x="1068" y="530" width="10.5" height="10.5" fill="#000999"/><rect x="1078" y="530" width="10.5" height="10.5" fill="#000899"/><rect x="1088" y="530" width="10.5" height="10.5" fill="#000799"/><rect x="1098" y="530" width="10.5" height="10.5" fill="#000699"/><rect x="1108" y="530" width="10.5" height="10.5" fill="#000499"/><rect x="1118" y="530" width="10.5" height="10.5" fill="#000399"/><rect x="1128" y="530" width="10.5" height="10.5" fill="#000299"/><rect x="1138" y="530" width="10.5" height="10.5" fill="#000199"/><rect x="1148" y="530" width="10.5" height="10.5" fill="#000099"/><rect x="1158" y="530" width="10.5" height="10.5" fill="#000099"/><rect x="1168" y="530" width="10.5" height="10.5" fill="#000099"/><rect x="1178" y="530" width="10.5" height="10.5" fill="#000099"/><rect x="1188" y="530" width="10.5" height="10.5" fill="#000099"/><rect x="1198" y="530" width="10.5" height="10.5" fill="#000099"/><rect x="1208" y="530" width="10.5" height="10.5" fill="#000099"/><rect x="1218" y="530" width="10.5" height="10.5" fill="#040099"/><rect x="1228" y="530" width="10.5" height="10.5" fill="#080099"/><rect x="1238" y="530" width="10.5" height="10.5" fill="#0d0099"/><rect x="1248" y="530" width="10.5" height="10.5" fill="#110099"/><rect x="1258" y="530" width="10.5" height="10.5" fill="#160099"/><rect x="1268" y="530" width="10.5" height="10.5" fill="#1a0099"/><rect x="1278" y="530" width="10.5" height="10.5" fill="#1f0099"/><rect x="1288" y="530" width="10.5" height="10.5" fill="#230099"/><rect x="1298" y="530" width="10.5" height="10.5" fill="#280099"/><rect x="1308" y="530" width="10.5" height="10.5" fill="#2c0099"/><rect x="1318" y="530" width="10.5" height="10.5" fill="#310099"/><rect x="1328" y="530" width="10.5" height="10.5" fill="#350099"/><rect x="1338" y="530" width="10.5" height="10.5" fill="#3a0099"/><rect x="1348" y="530" width="10.5" height="10.5" fill="#3f0099"/><rect x="1358" y="530" width="10.5" height="10.5" fill="#430099"/><rect x="1368" y="530" width="10.5" height="10.5" fill="#480099"/><rect x="1378" y="530" width="10.5" height="10.5" fill="#4d0099"/><rect x="1388" y="530" width="10.5" height="10.5" fill="#520099"/><rect x="1398" y="530" width="10.5" height="10.5" fill="#560099"/><rect x="1408" y="530" width="10.5" height="10.5" fill="#5b0099"/><rect x="1418" y="530" width="10.5" height="10.5" fill="#600099"/><rect x="1428" y="530" width="10.5" height="10.5" fill="#650099"/><rect x="1438" y="530" width="10.5" height="10.5" fill="#6a0099"/><rect x="1448" y="530" width="10.5" height="10.5" fill="#6f0099"/><rect x="1458" y="530" width="10.5" height="10.5" fill="#740099"/><rect x="1468" y="530" width="10.5" height="10.5" fill="#790099"/><rect x="1478" y="530" width="10.5" height="10.5" fill="#7e0099"/><rect x="1488" y="530" width="10.5" height="10.5" fill="#830099"/><rect x="1498" y="530" width="10.5" height="10.5" fill="#880099"/><rect x="1508" y="530" width="10.5" height="10.5" fill="#8d0099"/><rect x="1518" y="530" width="10.5" height="10.5" fill="#920099"/><rect x="1528" y="530" width="10.5" height="10.5" fill="#970099"/><rect x="1538" y="530" width="10.5" height="10.5" fill="#990095"/><rect x="1548" y="530" width="10.5" height="10.5" fill="#990090"/><rect x="1558" y="530" width="10.5" height="10.5" fill="#99008c"/><rect x="1568" y="530" width="10.5" height="10.5" fill="#990087"/><rect x="1578" y="530" width="10.5" height="10.5" fill="#990083"/><rect x="1588" y="530" width="10.5" height="10.5" fill="#99007f"/><rect x="1598" y="530" width="10.5" height="10.5" fill="#99007c"/><rect x="1608" y="530" width="10.5" height="10.5" fill="#990078"/><rect x="1618" y="530" width="10.5" height="10.5" fill="#990075"/><rect x="1628" y="530" width="10.5" height="10.5" fill="#990072"/><rect x="1638" y="530" width="10.5" height="10.5" fill="#99006f"/><rect x="1648" y="530" width="10.5" height="10.5" fill="#99006c"/><rect x="1018" y="540" width="10.5" height="10.5" fill="#000e99"/><rect x="1028" y="540" width="10.5" height="10.5" fill="#000d99"/><rect x="1038" y="540" width="10.5" height="10.5" fill="#000b99"/><rect x="1048" y="540" width="10.5" height="10.5" fill="#000a99"/><rect x="1058" y="540" width="10.5" height="10.5" fill="#000999"/><rect x="1068" y="540" width="10.5" height="10.5" fill="#000899"/><rect x="1078" y="540" width="10.5" height="10.5" fill="#000799"/><rect x="1088" y="540" width="10.5" height="10.5" fill="#000699"/><rect x="1098" y="540" width="10.5" height="10.5" fill="#000499"/><rect x="1108" y="540" width="10.5" height="10.5" fill="#000399"/><rect x="1118" y="540" width="10.5" height="10.5" fill="#000299"/><rect x="1128" y="540" width="10.5" height="10.5" fill="#000199"/><rect x="1138" y="540" width="10.5" height="10.5" fill="#000099"/><rect x="1148" y="540" width="10.5" height="10.5" fill="#000099"/><rect x="1158" y="540" width="10.5" height="10.5" fill="#000099"/><rect x="1168" y="540" width="10.5" height="10.5" fill="#000099"/><rect x="1178" y="540" width="10.5" height="10.5" fill="#000099"/><rect x="1188" y="540" width="10.5" height="10.5" fill="#000099"/><rect x="1198" y="540" width="10.5" height="10.5" fill="#000099"/><rect x="1208" y="540" width="10.5" height="10.5" fill="#000099"/><rect x="1218" y="540" width="10.5" height="10.5" fill="#030099"/><rect x="1228" y="540" width="10.5" height="10.5" fill="#070099"/><rect x="1238" y="540" width="10.5" height="10.5" fill="#0c0099"/><rect x="1248" y="540" width="10.5" height="10.5" fill="#100099"/><rect x="1258" y="540" width="10.5" height="10.5" fill="#140099"/><rect x="1268" y="540" width="10.5" height="10.5" fill="#190099"/><rect x="1278" y="540" width="10.5" height="10.5" fill="#1d0099"/><rect x="1288" y="540" width="10.5" height="10.5" fill="#210099"/><rect x="1298" y="540" width="10.5" height="10.5" fill="#260099"/><rect x="1308" y="540" width="10.5" height="10.5" fill="#2a0099"/><rect x="1318" y="540" width="10.5" height="10.5" fill="#2f0099"/><rect x="1328" y="540" width="10.5" height="10.5" fill="#330099"/><rect x="1338" y="540" width="10.5" height="10.5" fill="#380099"/><rect x="1348" y="540" width="10.5" height="10.5" fill="#3c0099"/><rect x="1358" y="540" width="10.5" height="10.5" fill="#410099"/><rect x="1368" y="540" width="10.5" height="10.5" fill="#460099"/><rect x="1378" y="540" width="10.5" height="10.5" fill="#4a0099"/><rect x="1388" y="540" width="10.5" height="10.5" fill="#4f0099"/><rect x="1398" y="540" width="10.5" height="10.5" fill="#530099"/><rect x="1408" y="540" width="10.5" height="10.5" fill="#580099"/><rect x="1418" y="540" width="10.5" height="10.5" fill="#5d0099"/><rect x="1428" y="540" width="10.5" height="10.5" fill="#610099"/><rect x="1438" y="540" width="10.5" height="10.5" fill="#660099"/><rect x="1448" y="540" width="10.5" height="10.5" fill="#6b0099"/><rect x="1458" y="540" width="10.5" height="10.5" fill="#700099"/><rect x="1468" y="540" width="10.5" height="10.5" fill="#750099"/><rect x="1478" y="540" width="10.5" height="10.5" fill="#790099"/><rect x="1488" y="540" width="10.5" height="10.5" fill="#7e0099"/><rect x="1498" y="540" width="10.5" height="10.5" fill="#830099"/><rect x="1508" y="540" width="10.5" height="10.5" fill="#880099"/><rect x="1518" y="540" width="10.5" height="10.5" fill="#8d0099"/><rect x="1528" y="540" width="10.5" height="10.5" fill="#920099"/><rect x="1538" y="540" width="10.5" height="10.5" fill="#970099"/><rect x="1548" y="540" width="10.5" height="10.5" fill="#990095"/><rect x="1558" y="540" width="10.5" height="10.5" fill="#990090"/><rect x="1568" y="540" width="10.5" height="10.5" fill="#99008c"/><rect x="1578" y="540" width="10.5" height="10.5" fill="#990088"/><rect x="1588" y="540" width="10.5" height="10.5" fill="#990084"/><rect x="1598" y="540" width="10.5" height="10.5" fill="#990080"/><rect x="1608" y="540" width="10.5" height="10.5" fill="#99007c"/><rect x="1618" y="540" width="10.5" height="10.5" fill="#990079"/><rect x="1628" y="540" width="10.5" height="10.5" fill="#990076"/><rect x="1638" y="540" width="10.5" height="10.5" fill="#990073"/><rect x="1648" y="540" width="10.5" height="10.5" fill="#990070"/><rect x="1018" y="550" width="10.5" height="10.5" fill="#000c99"/><rect x="1028" y="550" width="10.5" height="10.5" fill="#000b99"/><rect x="1038" y="550" width="10.5" height="10.5" fill="#000a99"/><rect x="1048" y="550" width="10.5" height="10.5" fill="#000999"/><rect x="1058" y="550" width="10.5" height="10.5" fill="#000899"/><rect x="1068" y="550" width="10.5" height="10.5" fill="#000799"/><rect x="1078" y="550" width="10.5" height="10.5" fill="#000599"/><rect x="1088" y="550" width="10.5" height="10.5" fill="#000499"/><rect x="1098" y="550" width="10.5" height="10.5" fill="#000399"/><rect x="1108" y="550" width="10.5" height="10.5" fill="#000299"/><rect x="1118" y="550" width="10.5" height="10.5" fill="#000199"/><rect x="1128" y="550" width="10.5" height="10.5" fill="#000099"/><rect x="1138" y="550" width="10.5" height="10.5" fill="#000099"/><rect x="1148" y="550" width="10.5" height="10.5" fill="#000099"/><rect x="1158" y="550" width="10.5" height="10.5" fill="#000099"/><rect x="1168" y="550" width="10.5" height="10.5" fill="#000099"/><rect x="1178" y="550" width="10.5" height="10.5" fill="#000099"/><rect x="1188" y="550" width="10.5" height="10.5" fill="#000099"/><rect x="1198" y="550" width="10.5" height="10.5" fill="#000099"/><rect x="1208" y="550" width="10.5" height="10.5" fill="#000099"/><rect x="1218" y="550" width="10.5" height="10.5" fill="#020099"/><rect x="1228" y="550" width="10.5" height="10.5" fill="#070099"/><rect x="1238" y="550" width="10.5" height="10.5" fill="#0b0099"/><rect x="1248" y="550" width="10.5" height="10.5" fill="#0f0099"/><rect x="1258" y="550" width="10.5" height="10.5" fill="#130099"/><rect x="1268" y="550" width="10.5" height="10.5" fill="#170099"/><rect x="1278" y="550" width="10.5" height="10.5" fill="#1c0099"/><rect x="1288" y="550" width="10.5" height="10.5" fill="#200099"/><rect x="1298" y="550" width="10.5" height="10.5" fill="#240099"/><rect x="1308" y="550" width="10.5" height="10.5" fill="#290099"/><rect x="1318" y="550" width="10.5" height="10.5" fill="#2d0099"/><rect x="1328" y="550" width="10.5" height="10.5" fill="#310099"/><rect x="1338" y="550" width="10.5" height="10.5" fill="#360099"/><rect x="1348" y="550" width="10.5" height="10.5" fill="#3a0099"/><rect x="1358" y="550" width="10.5" height="10.5" fill="#3f0099"/><rect x="1368" y="550" width="10.5" height="10.5" fill="#430099"/><rect x="1378" y="550" width="10.5" height="10.5" fill="#470099"/><rect x="1388" y="550" width="10.5" height="10.5" fill="#4c0099"/><rect x="1398" y="550" width="10.5" height="10.5" fill="#500099"/><rect x="1408" y="550" width="10.5" height="10.5" fill="#550099"/><rect x="1418" y="550" width="10.5" height="10.5" fill="#5a0099"/><rect x="1428" y="550" width="10.5" height="10.5" fill="#5e0099"/><rect x="1438" y="550" width="10.5" height="10.5" fill="#630099"/><rect x="1448" y="550" width="10.5" height="10.5" fill="#670099"/><rect x="1458" y="550" width="10.5" height="10.5" fill="#6c0099"/><rect x="1468" y="550" width="10.5" height="10.5" fill="#710099"/><rect x="1478" y="550" width="10.5" height="10.5" fill="#750099"/><rect x="1488" y="550" width="10.5" height="10.5" fill="#7a0099"/><rect x="1498" y="550" width="10.5" height="10.5" fill="#7f0099"/><rect x="1508" y="550" width="10.5" height="10.5" fill="#840099"/><rect x="1518" y="550" width="10.5" height="10.5" fill="#890099"/><rect x="1528" y="550" width="10.5" height="10.5" fill="#8d0099"/><rect x="1538" y="550" width="10.5" height="10.5" fill="#920099"/><rect x="1548" y="550" width="10.5" height="10.5" fill="#970099"/><rect x="1558" y="550" width="10.5" height="10.5" fill="#990095"/><rect x="1568" y="550" width="10.5" height="10.5" fill="#990091"/><rect x="1578" y="550" width="10.5" height="10.5" fill="#99008c"/><rect x="1588" y="550" width="10.5" height="10.5" fill="#990088"/><rect x="1598" y="550" width="10.5" height="10.5" fill="#990084"/><rect x="1608" y="550" width="10.5" height="10.5" fill="#990081"/><rect x="1618" y="550" width="10.5" height="10.5" fill="#99007d"/><rect x="1628" y="550" width="10.5" height="10.5" fill="#99007a"/><rect x="1638" y="550" width="10.5" height="10.5" fill="#990077"/><rect x="1648" y="550" width="10.5" height="10.5" fill="#990074"/><rect x="1018" y="560" width="10.5" height="10.5" fill="#000b99"/><rect x="1028" y="560" width="10.5" height="10.5" fill="#000a99"/><rect x="1038" y="560" width="10.5" height="10.5" fill="#000999"/><rect x="1048" y="560" width="10.5" height="10.5" fill="#000799"/><rect x="1058" y="560" width="10.5" height="10.5" fill="#000699"/><rect x="1068" y="560" width="10.5" height="10.5" fill="#000599"/><rect x="1078" y="560" width="10.5" height="10.5" fill="#000499"/><rect x="1088" y="560" width="10.5" height="10.5" fill="#000399"/><rect x="1098" y="560" width="10.5" height="10.5" fill="#000299"/><rect x="1108" y="560" width="10.5" height="10.5" fill="#000199"/><rect x="1118" y="560" width="10.5" height="10.5" fill="#000099"/><rect x="1128" y="560" width="10.5" height="10.5" fill="#000099"/><rect x="1138" y="560" width="10.5" height="10.5" fill="#000099"/><rect x="1148" y="560" width="10.5" height="10.5" fill="#000099"/><rect x="1158" y="560" width="10.5" height="10.5" fill="#000099"/><rect x="1168" y="560" width="10.5" height="10.5" fill="#000099"/><rect x="1178" y="560" width="10.5" height="10.5" fill="#000099"/><rect x="1188" y="560" width="10.5" height="10.5" fill="#000099"/><rect x="1198" y="560" width="10.5" height="10.5" fill="#000099"/><rect x="1208" y="560" width="10.5" height="10.5" fill="#000099"/><rect x="1218" y="560" width="10.5" height="10.5" fill="#020099"/><rect x="1228" y="560" width="10.5" height="10.5" fill="#060099"/><rect x="1238" y="560" width="10.5" height="10.5" fill="#0a0099"/><rect x="1248" y="560" width="10.5" height="10.5" fill="#0e0099"/><rect x="1258" y="560" width="10.5" height="10.5" fill="#120099"/><rect x="1268" y="560" width="10.5" height="10.5" fill="#160099"/><rect x="1278" y="560" width="10.5" height="10.5" fill="#1a0099"/><rect x="1288" y="560" width="10.5" height="10.5" fill="#1e0099"/><rect x="1298" y="560" width="10.5" height="10.5" fill="#230099"/><rect x="1308" y="560" width="10.5" height="10.5" fill="#270099"/><rect x="1318" y="560" width="10.5" height="10.5" fill="#2b0099"/><rect x="1328" y="560" width="10.5" height="10.5" fill="#2f0099"/><rect x="1338" y="560" width="10.5" height="10.5" fill="#340099"/><rect x="1348" y="560" width="10.5" height="10.5" fill="#380099"/><rect x="1358" y="560" width="10.5" height="10.5" fill="#3c0099"/><rect x="1368" y="560" width="10.5" height="10.5" fill="#410099"/><rect x="1378" y="560" width="10.5" height="10.5" fill="#450099"/><rect x="1388" y="560" width="10.5" height="10.5" fill="#490099"/><rect x="1398" y="560" width="10.5" height="10.5" fill="#4e0099"/><rect x="1408" y="560" width="10.5" height="10.5" fill="#520099"/><rect x="1418" y="560" width="10.5" height="10.5" fill="#570099"/><rect x="1428" y="560" width="10.5" height="10.5" fill="#5b0099"/><rect x="1438" y="560" width="10.5" height="10.5" fill="#600099"/><rect x="1448" y="560" width="10.5" height="10.5" fill="#640099"/><rect x="1458" y="560" width="10.5" height="10.5" fill="#690099"/><rect x="1468" y="560" width="10.5" height="10.5" fill="#6d0099"/><rect x="1478" y="560" width="10.5" height="10.5" fill="#720099"/><rect x="1488" y="560" width="10.5" height="10.5" fill="#760099"/><rect x="1498" y="560" width="10.5" height="10.5" fill="#7b0099"/><rect x="1508" y="560" width="10.5" height="10.5" fill="#800099"/><rect x="1518" y="560" width="10.5" height="10.5" fill="#840099"/><rect x="1528" y="560" width="10.5" height="10.5" fill="#890099"/><rect x="1538" y="560" width="10.5" height="10.5" fill="#8e0099"/><rect x="1548" y="560" width="10.5" height="10.5" fill="#920099"/><rect x="1558" y="560" width="10.5" height="10.5" fill="#970099"/><rect x="1568" y="560" width="10.5" height="10.5" fill="#990095"/><rect x="1578" y="560" width="10.5" height="10.5" fill="#990091"/><rect x="1588" y="560" width="10.5" height="10.5" fill="#99008c"/><rect x="1598" y="560" width="10.5" height="10.5" fill="#990088"/><rect x="1608" y="560" width="10.5" height="10.5" fill="#990085"/><rect x="1618" y="560" width="10.5" height="10.5" fill="#990081"/><rect x="1628" y="560" width="10.5" height="10.5" fill="#99007e"/><rect x="1638" y="560" width="10.5" height="10.5" fill="#99007a"/><rect x="1648" y="560" width="10.5" height="10.5" fill="#990077"/><rect x="1018" y="570" width="10.5" height="10.5" fill="#000999"/><rect x="1028" y="570" width="10.5" height="10.5" fill="#000899"/><rect x="1038" y="570" width="10.5" height="10.5" fill="#000799"/><rect x="1048" y="570" width="10.5" height="10.5" fill="#000699"/><rect x="1058" y="570" width="10.5" height="10.5" fill="#000599"/><rect x="1068" y="570" width="10.5" height="10.5" fill="#000499"/><rect x="1078" y="570" width="10.5" height="10.5" fill="#000399"/><rect x="1088" y="570" width="10.5" height="10.5" fill="#000299"/><rect x="1098" y="570" width="10.5" height="10.5" fill="#000199"/><rect x="1108" y="570" width="10.5" height="10.5" fill="#000099"/><rect x="1118" y="570" width="10.5" height="10.5" fill="#000099"/><rect x="1128" y="570" width="10.5" height="10.5" fill="#000099"/><rect x="1138" y="570" width="10.5" height="10.5" fill="#000099"/><rect x="1148" y="570" width="10.5" height="10.5" fill="#000099"/><rect x="1158" y="570" width="10.5" height="10.5" fill="#000099"/><rect x="1168" y="570" width="10.5" height="10.5" fill="#000099"/><rect x="1178" y="570" width="10.5" height="10.5" fill="#000099"/><rect x="1188" y="570" width="10.5" height="10.5" fill="#000099"/><rect x="1198" y="570" width="10.5" height="10.5" fill="#000099"/><rect x="1208" y="570" width="10.5" height="10.5" fill="#000099"/><rect x="1218" y="570" width="10.5" height="10.5" fill="#010099"/><rect x="1228" y="570" width="10.5" height="10.5" fill="#050099"/><rect x="1238" y="570" width="10.5" height="10.5" fill="#090099"/><rect x="1248" y="570" width="10.5" height="10.5" fill="#0d0099"/><rect x="1258" y="570" width="10.5" height="10.5" fill="#110099"/><rect x="1268" y="570" width="10.5" height="10.5" fill="#150099"/><rect x="1278" y="570" width="10.5" height="10.5" fill="#190099"/><rect x="1288" y="570" width="10.5" height="10.5" fill="#1d0099"/><rect x="1298" y="570" width="10.5" height="10.5" fill="#210099"/><rect x="1308" y="570" width="10.5" height="10.5" fill="#250099"/><rect x="1318" y="570" width="10.5" height="10.5" fill="#290099"/><rect x="1328" y="570" width="10.5" height="10.5" fill="#2e0099"/><rect x="1338" y="570" width="10.5" height="10.5" fill="#320099"/><rect x="1348" y="570" width="10.5" height="10.5" fill="#360099"/><rect x="1358" y="570" width="10.5" height="10.5" fill="#3a0099"/><rect x="1368" y="570" width="10.5" height="10.5" fill="#3e0099"/><rect x="1378" y="570" width="10.5" height="10.5" fill="#430099"/><rect x="1388" y="570" width="10.5" height="10.5" fill="#470099"/><rect x="1398" y="570" width="10.5" height="10.5" fill="#4b0099"/><rect x="1408" y="570" width="10.5" height="10.5" fill="#4f0099"/><rect x="1418" y="570" width="10.5" height="10.5" fill="#540099"/><rect x="1428" y="570" width="10.5" height="10.5" fill="#580099"/><rect x="1438" y="570" width="10.5" height="10.5" fill="#5c0099"/><rect x="1448" y="570" width="10.5" height="10.5" fill="#610099"/><rect x="1458" y="570" width="10.5" height="10.5" fill="#650099"/><rect x="1468" y="570" width="10.5" height="10.5" fill="#6a0099"/><rect x="1478" y="570" width="10.5" height="10.5" fill="#6e0099"/><rect x="1488" y="570" width="10.5" height="10.5" fill="#730099"/><rect x="1498" y="570" width="10.5" height="10.5" fill="#770099"/><rect x="1508" y="570" width="10.5" height="10.5" fill="#7c0099"/><rect x="1518" y="570" width="10.5" height="10.5" fill="#800099"/><rect x="1528" y="570" width="10.5" height="10.5" fill="#850099"/><rect x="1538" y="570" width="10.5" height="10.5" fill="#890099"/><rect x="1548" y="570" width="10.5" height="10.5" fill="#8e0099"/><rect x="1558" y="570" width="10.5" height="10.5" fill="#920099"/><rect x="1568" y="570" width="10.5" height="10.5" fill="#970099"/><rect x="1578" y="570" width="10.5" height="10.5" fill="#990095"/><rect x="1588" y="570" width="10.5" height="10.5" fill="#990091"/><rect x="1598" y="570" width="10.5" height="10.5" fill="#99008d"/><rect x="1608" y="570" width="10.5" height="10.5" fill="#990089"/><rect x="1618" y="570" width="10.5" height="10.5" fill="#990085"/><rect x="1628" y="570" width="10.5" height="10.5" fill="#990082"/><rect x="1638" y="570" width="10.5" height="10.5" fill="#99007e"/><rect x="1648" y="570" width="10.5" height="10.5" fill="#99007b"/><rect x="1018" y="580" width="10.5" height="10.5" fill="#000899"/><rect x="1028" y="580" width="10.5" height="10.5" fill="#000799"/><rect x="1038" y="580" width="10.5" height="10.5" fill="#000699"/><rect x="1048" y="580" width="10.5" height="10.5" fill="#000599"/><rect x="1058" y="580" width="10.5" height="10.5" fill="#000499"/><rect x="1068" y="580" width="10.5" height="10.5" fill="#000399"/><rect x="1078" y="580" width="10.5" height="10.5" fill="#000299"/><rect x="1088" y="580" width="10.5" height="10.5" fill="#000199"/><rect x="1098" y="580" width="10.5" height="10.5" fill="#000099"/><rect x="1108" y="580" width="10.5" height="10.5" fill="#000099"/><rect x="1118" y="580" width="10.5" height="10.5" fill="#000099"/><rect x="1128" y="580" width="10.5" height="10.5" fill="#000099"/><rect x="1138" y="580" width="10.5" height="10.5" fill="#000099"/><rect x="1148" y="580" width="10.5" height="10.5" fill="#000099"/><rect x="1158" y="580" width="10.5" height="10.5" fill="#000099"/><rect x="1168" y="580" width="10.5" height="10.5" fill="#000099"/><rect x="1178" y="580" width="10.5" height="10.5" fill="#000099"/><rect x="1188" y="580" width="10.5" height="10.5" fill="#000099"/><rect x="1198" y="580" width="10.5" height="10.5" fill="#000099"/><rect x="1208" y="580" width="10.5" height="10.5" fill="#000099"/><rect x="1218" y="580" width="10.5" height="10.5" fill="#000099"/><rect x="1228" y="580" width="10.5" height="10.5" fill="#040099"/><rect x="1238" y="580" width="10.5" height="10.5" fill="#080099"/><rect x="1248" y="580" width="10.5" height="10.5" fill="#0c0099"/><rect x="1258" y="580" width="10.5" height="10.5" fill="#100099"/><rect x="1268" y="580" width="10.5" height="10.5" fill="#140099"/><rect x="1278" y="580" width="10.5" height="10.5" fill="#180099"/><rect x="1288" y="580" width="10.5" height="10.5" fill="#1c0099"/><rect x="1298" y="580" width="10.5" height="10.5" fill="#200099"/><rect x="1308" y="580" width="10.5" height="10.5" fill="#240099"/><rect x="1318" y="580" width="10.5" height="10.5" fill="#280099"/><rect x="1328" y="580" width="10.5" height="10.5" fill="#2c0099"/><rect x="1338" y="580" width="10.5" height="10.5" fill="#300099"/><rect x="1348" y="580" width="10.5" height="10.5" fill="#340099"/><rect x="1358" y="580" width="10.5" height="10.5" fill="#380099"/><rect x="1368" y="580" width="10.5" height="10.5" fill="#3c0099"/><rect x="1378" y="580" width="10.5" height="10.5" fill="#400099"/><rect x="1388" y="580" width="10.5" height="10.5" fill="#440099"/><rect x="1398" y="580" width="10.5" height="10.5" fill="#490099"/><rect x="1408" y="580" width="10.5" height="10.5" fill="#4d0099"/><rect x="1418" y="580" width="10.5" height="10.5" fill="#510099"/><rect x="1428" y="580" width="10.5" height="10.5" fill="#550099"/><rect x="1438" y="580" width="10.5" height="10.5" fill="#590099"/><rect x="1448" y="580" width="10.5" height="10.5" fill="#5e0099"/><rect x="1458" y="580" width="10.5" height="10.5" fill="#620099"/><rect x="1468" y="580" width="10.5" height="10.5" fill="#660099"/><rect x="1478" y="580" width="10.5" height="10.5" fill="#6b0099"/><rect x="1488" y="580" width="10.5" height="10.5" fill="#6f0099"/><rect x="1498" y="580" width="10.5" height="10.5" fill="#730099"/><rect x="1508" y="580" width="10.5" height="10.5" fill="#780099"/><rect x="1518" y="580" width="10.5" height="10.5" fill="#7c0099"/><rect x="1528" y="580" width="10.5" height="10.5" fill="#810099"/><rect x="1538" y="580" width="10.5" height="10.5" fill="#850099"/><rect x="1548" y="580" width="10.5" height="10.5" fill="#8a0099"/><rect x="1558" y="580" width="10.5" height="10.5" fill="#8e0099"/><rect x="1568" y="580" width="10.5" height="10.5" fill="#930099"/><rect x="1578" y="580" width="10.5" height="10.5" fill="#970099"/><rect x="1588" y="580" width="10.5" height="10.5" fill="#990095"/><rect x="1598" y="580" width="10.5" height="10.5" fill="#990091"/><rect x="1608" y="580" width="10.5" height="10.5" fill="#99008d"/><rect x="1618" y="580" width="10.5" height="10.5" fill="#990089"/><rect x="1628" y="580" width="10.5" height="10.5" fill="#990086"/><rect x="1638" y="580" width="10.5" height="10.5" fill="#990082"/><rect x="1648" y="580" width="10.5" height="10.5" fill="#99007f"/><rect x="1018" y="590" width="10.5" height="10.5" fill="#000799"/><rect x="1028" y="590" width="10.5" height="10.5" fill="#000699"/><rect x="1038" y="590" width="10.5" height="10.5" fill="#000599"/><rect x="1048" y="590" width="10.5" height="10.5" fill="#000499"/><rect x="1058" y="590" width="10.5" height="10.5" fill="#000399"/><rect x="1068" y="590" width="10.5" height="10.5" fill="#000299"/><rect x="1078" y="590" width="10.5" height="10.5" fill="#000199"/><rect x="1088" y="590" width="10.5" height="10.5" fill="#000099"/><rect x="1098" y="590" width="10.5" height="10.5" fill="#000099"/><rect x="1108" y="590" width="10.5" height="10.5" fill="#000099"/><rect x="1118" y="590" width="10.5" height="10.5" fill="#000099"/><rect x="1128" y="590" width="10.5" height="10.5" fill="#000099"/><rect x="1138" y="590" width="10.5" height="10.5" fill="#000099"/><rect x="1148" y="590" width="10.5" height="10.5" fill="#000099"/><rect x="1158" y="590" width="10.5" height="10.5" fill="#000099"/><rect x="1168" y="590" width="10.5" height="10.5" fill="#000099"/><rect x="1178" y="590" width="10.5" height="10.5" fill="#000099"/><rect x="1188" y="590" width="10.5" height="10.5" fill="#000099"/><rect x="1198" y="590" width="10.5" height="10.5" fill="#000099"/><rect x="1208" y="590" width="10.5" height="10.5" fill="#000099"/><rect x="1218" y="590" width="10.5" height="10.5" fill="#000099"/><rect x="1228" y="590" width="10.5" height="10.5" fill="#030099"/><rect x="1238" y="590" width="10.5" height="10.5" fill="#070099"/><rect x="1248" y="590" width="10.5" height="10.5" fill="#0b0099"/><rect x="1258" y="590" width="10.5" height="10.5" fill="#0f0099"/><rect x="1268" y="590" width="10.5" height="10.5" fill="#130099"/><rect x="1278" y="590" width="10.5" height="10.5" fill="#170099"/><rect x="1288" y="590" width="10.5" height="10.5" fill="#1a0099"/><rect x="1298" y="590" width="10.5" height="10.5" fill="#1e0099"/><rect x="1308" y="590" width="10.5" height="10.5" fill="#220099"/><rect x="1318" y="590" width="10.5" height="10.5" fill="#260099"/><rect x="1328" y="590" width="10.5" height="10.5" fill="#2a0099"/><rect x="1338" y="590" width="10.5" height="10.5" fill="#2e0099"/><rect x="1348" y="590" width="10.5" height="10.5" fill="#320099"/><rect x="1358" y="590" width="10.5" height="10.5" fill="#360099"/><rect x="1368" y="590" width="10.5" height="10.5" fill="#3a0099"/><rect x="1378" y="590" width="10.5" height="10.5" fill="#3e0099"/><rect x="1388" y="590" width="10.5" height="10.5" fill="#420099"/><rect x="1398" y="590" width="10.5" height="10.5" fill="#460099"/><rect x="1408" y="590" width="10.5" height="10.5" fill="#4a0099"/><rect x="1418" y="590" width="10.5" height="10.5" fill="#4e0099"/><rect x="1428" y="590" width="10.5" height="10.5" fill="#530099"/><rect x="1438" y="590" width="10.5" height="10.5" fill="#570099"/><rect x="1448" y="590" width="10.5" height="10.5" fill="#5b0099"/><rect x="1458" y="590" width="10.5" height="10.5" fill="#5f0099"/><rect x="1468" y="590" width="10.5" height="10.5" fill="#630099"/><rect x="1478" y="590" width="10.5" height="10.5" fill="#670099"/><rect x="1488" y="590" width="10.5" height="10.5" fill="#6c0099"/><rect x="1498" y="590" width="10.5" height="10.5" fill="#700099"/><rect x="1508" y="590" width="10.5" height="10.5" fill="#740099"/><rect x="1518" y="590" width="10.5" height="10.5" fill="#790099"/><rect x="1528" y="590" width="10.5" height="10.5" fill="#7d0099"/><rect x="1538" y="590" width="10.5" height="10.5" fill="#810099"/><rect x="1548" y="590" width="10.5" height="10.5" fill="#860099"/><rect x="1558" y="590" width="10.5" height="10.5" fill="#8a0099"/><rect x="1568" y="590" width="10.5" height="10.5" fill="#8e0099"/><rect x="1578" y="590" width="10.5" height="10.5" fill="#930099"/><rect x="1588" y="590" width="10.5" height="10.5" fill="#970099"/><rect x="1598" y="590" width="10.5" height="10.5" fill="#990095"/><rect x="1608" y="590" width="10.5" height="10.5" fill="#990091"/><rect x="1618" y="590" width="10.5" height="10.5" fill="#99008d"/><rect x="1628" y="590" width="10.5" height="10.5" fill="#99008a"/><rect x="1638" y="590" width="10.5" height="10.5" fill="#990086"/><rect x="1648" y="590" width="10.5" height="10.5" fill="#990082"/><rect x="1018" y="600" width="10.5" height="10.5" fill="#000699"/><rect x="1028" y="600" width="10.5" height="10.5" fill="#000599"/><rect x="1038" y="600" width="10.5" height="10.5" fill="#000499"/><rect x="1048" y="600" width="10.5" height="10.5" fill="#000399"/><rect x="1058" y="600" width="10.5" height="10.5" fill="#000299"/><rect x="1068" y="600" width="10.5" height="10.5" fill="#000199"/><rect x="1078" y="600" width="10.5" height="10.5" fill="#000099"/><rect x="1088" y="600" width="10.5" height="10.5" fill="#000099"/><rect x="1098" y="600" width="10.5" height="10.5" fill="#000099"/><rect x="1108" y="600" width="10.5" height="10.5" fill="#000099"/><rect x="1118" y="600" width="10.5" height="10.5" fill="#000099"/><rect x="1128" y="600" width="10.5" height="10.5" fill="#000099"/><rect x="1138" y="600" width="10.5" height="10.5" fill="#000099"/><rect x="1148" y="600" width="10.5" height="10.5" fill="#000099"/><rect x="1158" y="600" width="10.5" height="10.5" fill="#000099"/><rect x="1168" y="600" width="10.5" height="10.5" fill="#000099"/><rect x="1178" y="600" width="10.5" height="10.5" fill="#000099"/><rect x="1188" y="600" width="10.5" height="10.5" fill="#000099"/><rect x="1198" y="600" width="10.5" height="10.5" fill="#000099"/><rect x="1208" y="600" width="10.5" height="10.5" fill="#000099"/><rect x="1218" y="600" width="10.5" height="10.5" fill="#000099"/><rect x="1228" y="600" width="10.5" height="10.5" fill="#030099"/><rect x="1238" y="600" width="10.5" height="10.5" fill="#060099"/><rect x="1248" y="600" width="10.5" height="10.5" fill="#0a0099"/><rect x="1258" y="600" width="10.5" height="10.5" fill="#0e0099"/><rect x="1268" y="600" width="10.5" height="10.5" fill="#120099"/><rect x="1278" y="600" width="10.5" height="10.5" fill="#150099"/><rect x="1288" y="600" width="10.5" height="10.5" fill="#190099"/><rect x="1298" y="600" width="10.5" height="10.5" fill="#1d0099"/><rect x="1308" y="600" width="10.5" height="10.5" fill="#210099"/><rect x="1318" y="600" width="10.5" height="10.5" fill="#250099"/><rect x="1328" y="600" width="10.5" height="10.5" fill="#290099"/><rect x="1338" y="600" width="10.5" height="10.5" fill="#2c0099"/><rect x="1348" y="600" width="10.5" height="10.5" fill="#300099"/><rect x="1358" y="600" width="10.5" height="10.5" fill="#340099"/><rect x="1368" y="600" width="10.5" height="10.5" fill="#380099"/><rect x="1378" y="600" width="10.5" height="10.5" fill="#3c0099"/><rect x="1388" y="600" width="10.5" height="10.5" fill="#400099"/><rect x="1398" y="600" width="10.5" height="10.5" fill="#440099"/><rect x="1408" y="600" width="10.5" height="10.5" fill="#480099"/><rect x="1418" y="600" width="10.5" height="10.5" fill="#4c0099"/><rect x="1428" y="600" width="10.5" height="10.5" fill="#500099"/><rect x="1438" y="600" width="10.5" height="10.5" fill="#540099"/><rect x="1448" y="600" width="10.5" height="10.5" fill="#580099"/><rect x="1458" y="600" width="10.5" height="10.5" fill="#5c0099"/><rect x="1468" y="600" width="10.5" height="10.5" fill="#600099"/><rect x="1478" y="600" width="10.5" height="10.5" fill="#640099"/><rect x="1488" y="600" width="10.5" height="10.5" fill="#680099"/><rect x="1498" y="600" width="10.5" height="10.5" fill="#6d0099"/><rect x="1508" y="600" width="10.5" height="10.5" fill="#710099"/><rect x="1518" y="600" width="10.5" height="10.5" fill="#750099"/><rect x="1528" y="600" width="10.5" height="10.5" fill="#790099"/><rect x="1538" y="600" width="10.5" height="10.5" fill="#7d0099"/><rect x="1548" y="600" width="10.5" height="10.5" fill="#820099"/><rect x="1558" y="600" width="10.5" height="10.5" fill="#860099"/><rect x="1568" y="600" width="10.5" height="10.5" fill="#8a0099"/><rect x="1578" y="600" width="10.5" height="10.5" fill="#8e0099"/><rect x="1588" y="600" width="10.5" height="10.5" fill="#930099"/><rect x="1598" y="600" width="10.5" height="10.5" fill="#970099"/><rect x="1608" y="600" width="10.5" height="10.5" fill="#990096"/><rect x="1618" y="600" width="10.5" height="10.5" fill="#990091"/><rect x="1628" y="600" width="10.5" height="10.5" fill="#99008e"/><rect x="1638" y="600" width="10.5" height="10.5" fill="#99008a"/><rect x="1648" y="600" width="10.5" height="10.5" fill="#990086"/><rect x="1018" y="610" width="10.5" height="10.5" fill="#000599"/><rect x="1028" y="610" width="10.5" height="10.5" fill="#000499"/><rect x="1038" y="610" width="10.5" height="10.5" fill="#000399"/><rect x="1048" y="610" width="10.5" height="10.5" fill="#000299"/><rect x="1058" y="610" width="10.5" height="10.5" fill="#000199"/><rect x="1068" y="610" width="10.5" height="10.5" fill="#000099"/><rect x="1078" y="610" width="10.5" height="10.5" fill="#000099"/><rect x="1088" y="610" width="10.5" height="10.5" fill="#000099"/><rect x="1098" y="610" width="10.5" height="10.5" fill="#000099"/><rect x="1108" y="610" width="10.5" height="10.5" fill="#000099"/><rect x="1118" y="610" width="10.5" height="10.5" fill="#000099"/><rect x="1128" y="610" width="10.5" height="10.5" fill="#000099"/><rect x="1138" y="610" width="10.5" height="10.5" fill="#000099"/><rect x="1148" y="610" width="10.5" height="10.5" fill="#000099"/><rect x="1158" y="610" width="10.5" height="10.5" fill="#000099"/><rect x="1168" y="610" width="10.5" height="10.5" fill="#000099"/><rect x="1178" y="610" width="10.5" height="10.5" fill="#000099"/><rect x="1188" y="610" width="10.5" height="10.5" fill="#000099"/><rect x="1198" y="610" width="10.5" height="10.5" fill="#000099"/><rect x="1208" y="610" width="10.5" height="10.5" fill="#000099"/><rect x="1218" y="610" width="10.5" height="10.5" fill="#000099"/><rect x="1228" y="610" width="10.5" height="10.5" fill="#020099"/><rect x="1238" y="610" width="10.5" height="10.5" fill="#060099"/><rect x="1248" y="610" width="10.5" height="10.5" fill="#0a0099"/><rect x="1258" y="610" width="10.5" height="10.5" fill="#0d0099"/><rect x="1268" y="610" width="10.5" height="10.5" fill="#110099"/><rect x="1278" y="610" width="10.5" height="10.5" fill="#150099"/><rect x="1288" y="610" width="10.5" height="10.5" fill="#180099"/><rect x="1298" y="610" width="10.5" height="10.5" fill="#1c0099"/><rect x="1308" y="610" width="10.5" height="10.5" fill="#200099"/><rect x="1318" y="610" width="10.5" height="10.5" fill="#240099"/><rect x="1328" y="610" width="10.5" height="10.5" fill="#280099"/><rect x="1338" y="610" width="10.5" height="10.5" fill="#2b0099"/><rect x="1348" y="610" width="10.5" height="10.5" fill="#2f0099"/><rect x="1358" y="610" width="10.5" height="10.5" fill="#330099"/><rect x="1368" y="610" width="10.5" height="10.5" fill="#370099"/><rect x="1378" y="610" width="10.5" height="10.5" fill="#3b0099"/><rect x="1388" y="610" width="10.5" height="10.5" fill="#3f0099"/><rect x="1398" y="610" width="10.5" height="10.5" fill="#430099"/><rect x="1408" y="610" width="10.5" height="10.5" fill="#460099"/><rect x="1418" y="610" width="10.5" height="10.5" fill="#4a0099"/><rect x="1428" y="610" width="10.5" height="10.5" fill="#4e0099"/><rect x="1438" y="610" width="10.5" height="10.5" fill="#520099"/><rect x="1448" y="610" width="10.5" height="10.5" fill="#560099"/><rect x="1458" y="610" width="10.5" height="10.5" fill="#5a0099"/><rect x="1468" y="610" width="10.5" height="10.5" fill="#5e0099"/><rect x="1478" y="610" width="10.5" height="10.5" fill="#620099"/><rect x="1488" y="610" width="10.5" height="10.5" fill="#670099"/><rect x="1498" y="610" width="10.5" height="10.5" fill="#6b0099"/><rect x="1508" y="610" width="10.5" height="10.5" fill="#6f0099"/><rect x="1518" y="610" width="10.5" height="10.5" fill="#730099"/><rect x="1528" y="610" width="10.5" height="10.5" fill="#770099"/><rect x="1538" y="610" width="10.5" height="10.5" fill="#7b0099"/><rect x="1548" y="610" width="10.5" height="10.5" fill="#7f0099"/><rect x="1558" y="610" width="10.5" height="10.5" fill="#830099"/><rect x="1568" y="610" width="10.5" height="10.5" fill="#880099"/><rect x="1578" y="610" width="10.5" height="10.5" fill="#8c0099"/><rect x="1588" y="610" width="10.5" height="10.5" fill="#900099"/><rect x="1598" y="610" width="10.5" height="10.5" fill="#940099"/><rect x="1608" y="610" width="10.5" height="10.5" fill="#990098"/><rect x="1618" y="610" width="10.5" height="10.5" fill="#990094"/><rect x="1628" y="610" width="10.5" height="10.5" fill="#990090"/><rect x="1638" y="610" width="10.5" height="10.5" fill="#99008c"/><rect x="1648" y="610" width="10.5" height="10.5" fill="#990089"/></g></g></svg>
<canvas id="cie" width="640" height="493" style="position:absolute;left:1017.9px;top:120.3px"></canvas>
<svg width="1668" height="1006" style="position:absolute;left:0;top:0"><defs><linearGradient id="ia" x1="0" y1="0" x2="1" y2="0"><stop offset="0" stop-color="#6a8c00"/><stop offset="1" stop-color="#8a7400"/></linearGradient><linearGradient id="ib" x1="0" y1="0" x2="1" y2="1"><stop offset="0" stop-color="#c4ff00"/><stop offset="0.55" stop-color="#ffff10"/><stop offset="1" stop-color="#ffb000"/></linearGradient></defs><rect x="1453.3" y="440.1" width="197.5" height="130.60000000000002" fill="url(#ia)"/><polygon points="1453.3,453.9 1650.8,555.3 1650.8,570.7 1453.3,570.7" fill="url(#ib)"/></svg>
<canvas id="ins" width="198" height="131" style="position:absolute;left:1453.3px;top:440.1px"></canvas>
<script>
(function(){
var L=[[0.25680,0.01659],[0.25668,0.01651],[0.25652,0.01640],[0.25632,0.01627],[0.25611,0.01613],[0.25590,0.01601],[0.25570,0.01594],[0.25552,0.01588],[0.25536,0.01585],[0.25519,0.01583],[0.25501,0.01583],[0.25480,0.01586],[0.25453,0.01593],[0.25426,0.01598],[0.25398,0.01600],[0.25368,0.01605],[0.25330,0.01618],[0.25283,0.01644],[0.25221,0.01688],[0.25147,0.01749],[0.25065,0.01820],[0.24973,0.01904],[0.24868,0.02004],[0.24749,0.02123],[0.24612,0.02262],[0.24461,0.02422],[0.24297,0.02598],[0.24119,0.02793],[0.23923,0.03008],[0.23707,0.03243],[0.23469,0.03501],[0.23193,0.03797],[0.22879,0.04132],[0.22546,0.04489],[0.22210,0.04847],[0.21891,0.05189],[0.21606,0.05495],[0.21363,0.05755],[0.21149,0.05984],[0.20951,0.06196],[0.20758,0.06406],[0.20556,0.06628],[0.20334,0.06878],[0.20094,0.07150],[0.19846,0.07432],[0.19591,0.07726],[0.19327,0.08035],[0.19054,0.08363],[0.18772,0.08711],[0.18485,0.09071],[0.18193,0.09438],[0.17892,0.09824],[0.17579,0.10238],[0.17248,0.10691],[0.16896,0.11195],[0.16522,0.11746],[0.16129,0.12337],[0.15718,0.12968],[0.15293,0.13638],[0.14856,0.14348],[0.14408,0.15098],[0.13947,0.15890],[0.13471,0.16723],[0.12982,0.17597],[0.12484,0.18508],[0.11979,0.19455],[0.11469,0.20437],[0.10951,0.21463],[0.10421,0.22536],[0.09884,0.23645],[0.09344,0.24779],[0.08809,0.25929],[0.08282,0.27083],[0.07756,0.28253],[0.07225,0.29449],[0.06698,0.30660],[0.06182,0.31875],[0.05685,0.33081],[0.05213,0.34269],[0.04766,0.35448],[0.04336,0.36630],[0.03925,0.37804],[0.03533,0.38959],[0.03163,0.40084],[0.02816,0.41168],[0.02491,0.42217],[0.02187,0.43242],[0.01905,0.44237],[0.01645,0.45196],[0.01406,0.46114],[0.01189,0.46984],[0.00996,0.47806],[0.00827,0.48584],[0.00679,0.49321],[0.00552,0.50018],[0.00442,0.50679],[0.00347,0.51307],[0.00270,0.51895],[0.00213,0.52442],[0.00173,0.52952],[0.00149,0.53431],[0.00140,0.53884],[0.00144,0.54316],[0.00162,0.54724],[0.00195,0.55103],[0.00244,0.55456],[0.00305,0.55786],[0.00379,0.56094],[0.00464,0.56384],[0.00562,0.56654],[0.00674,0.56902],[0.00799,0.57128],[0.00934,0.57335],[0.01078,0.57524],[0.01228,0.57697],[0.01388,0.57851],[0.01558,0.57983],[0.01737,0.58098],[0.01923,0.58198],[0.02115,0.58287],[0.02312,0.58367],[0.02513,0.58435],[0.02722,0.58487],[0.02936,0.58528],[0.03155,0.58561],[0.03377,0.58589],[0.03601,0.58614],[0.03828,0.58636],[0.04060,0.58652],[0.04295,0.58662],[0.04532,0.58668],[0.04769,0.58672],[0.05006,0.58675],[0.05242,0.58677],[0.05478,0.58676],[0.05714,0.58673],[0.05952,0.58668],[0.06192,0.58661],[0.06434,0.58652],[0.06677,0.58642],[0.06921,0.58629],[0.07167,0.58615],[0.07415,0.58599],[0.07667,0.58581],[0.07922,0.58562],[0.08182,0.58541],[0.08444,0.58518],[0.08709,0.58494],[0.08978,0.58468],[0.09250,0.58440],[0.09527,0.58411],[0.09807,0.58381],[0.10091,0.58349],[0.10379,0.58315],[0.10671,0.58281],[0.10968,0.58244],[0.11270,0.58207],[0.11577,0.58168],[0.11888,0.58128],[0.12204,0.58087],[0.12525,0.58044],[0.12852,0.58000],[0.13186,0.57955],[0.13525,0.57909],[0.13870,0.57862],[0.14221,0.57813],[0.14578,0.57763],[0.14941,0.57712],[0.15310,0.57659],[0.15686,0.57605],[0.16067,0.57550],[0.16455,0.57494],[0.16849,0.57437],[0.17250,0.57378],[0.17659,0.57318],[0.18075,0.57257],[0.18497,0.57196],[0.18927,0.57133],[0.19364,0.57068],[0.19808,0.57003],[0.20260,0.56936],[0.20718,0.56868],[0.21183,0.56799],[0.21656,0.56729],[0.22136,0.56657],[0.22623,0.56585],[0.23117,0.56511],[0.23619,0.56436],[0.24128,0.56360],[0.24644,0.56282],[0.25167,0.56204],[0.25698,0.56124],[0.26234,0.56044],[0.26778,0.55963],[0.27329,0.55880],[0.27888,0.55797],[0.28452,0.55712],[0.29021,0.55627],[0.29596,0.55541],[0.30176,0.55455],[0.30763,0.55367],[0.31356,0.55279],[0.31953,0.55190],[0.32552,0.55101],[0.33153,0.55012],[0.33757,0.54921],[0.34367,0.54829],[0.34980,0.54737],[0.35593,0.54645],[0.36202,0.54553],[0.36806,0.54463],[0.37368,0.54378],[0.37883,0.54301],[0.38394,0.54225],[0.38947,0.54142],[0.39583,0.54047],[0.40347,0.53933],[0.41284,0.53794],[0.42367,0.53633],[0.43534,0.53460],[0.44723,0.53283],[0.45872,0.53112],[0.46917,0.52956],[0.47870,0.52814],[0.48783,0.52677],[0.49655,0.52545],[0.50487,0.52420],[0.51277,0.52302],[0.52026,0.52189],[0.52723,0.52084],[0.53369,0.51985],[0.53972,0.51892],[0.54547,0.51806],[0.55102,0.51725],[0.55650,0.51649],[0.56199,0.51581],[0.56742,0.51521],[0.57265,0.51466],[0.57759,0.51415],[0.58210,0.51364],[0.58608,0.51311],[0.58926,0.51257],[0.59169,0.51204],[0.59370,0.51152],[0.59562,0.51100],[0.59778,0.51047],[0.60050,0.50993],[0.60409,0.50933],[0.60835,0.50867],[0.61285,0.50801],[0.61714,0.50739],[0.62080,0.50687],[0.62339,0.50649]];
function col(u,v){
  var den=6*u-16*v+12, x=9*u/den, y=4*v/den; if(y<1e-5)y=1e-5;
  var X=x/y, Z=(1-x-y)/y;
  var r=3.2406*X-1.5372-0.4986*Z, g=-0.9689*X+1.8758+0.0415*Z, b=0.0557*X-0.2040+1.0570*Z;
  var out=(r<0||g<0||b<0);
  r=Math.max(r,0);g=Math.max(g,0);b=Math.max(b,0);
  var m=Math.max(r,g,b); r/=m; g/=m; b/=m;
  if(out){return [r*153,g*153,b*153];}
  var p=1/1.15; return [Math.pow(r,p)*255,Math.pow(g,p)*255,Math.pow(b,p)*255];
}
function inside(u,v){var c=false;for(var i=0,j=L.length-1;i<L.length;j=i++){var a=L[i],bb=L[j];if(((a[1]>v)!=(bb[1]>v))&&(u<(bb[0]-a[0])*(v-a[1])/(bb[1]-a[1])+a[0]))c=!c;}return c;}
var cv=document.getElementById('cie'),ctx=cv.getContext('2d'),W=cv.width,H=cv.height;
var im=ctx.createImageData(W,H),d=im.data;
var X0=1017.900000,SX=1063.000000,Y0=612.500000,SY=818.000000,PL=1017.900000,PT=120.300000;
function xs(v){var r=[];for(var i=0,j=L.length-1;i<L.length;j=i++){var a=L[i],bb=L[j];if((a[1]>v)!=(bb[1]>v)){r.push((bb[0]-a[0])*(v-a[1])/(bb[1]-a[1])+a[0]);}}r.sort(function(p,q){return p-q;});return r;}
function ins(r,u){var c=false;for(var k=0;k<r.length;k++){if(u<r[k])break;c=!c;}return c;}
for(var py=0;py<H;py++){
  var r0=xs((Y0-(PT+py+0.25))/SY), r1=xs((Y0-(PT+py+0.75))/SY);
  for(var px=0;px<W;px++){
  var u=(PL+px+0.5-X0)/SX, v=(Y0-(PT+py+0.5))/SY;
  var ua=(PL+px+0.25-X0)/SX, ub=(PL+px+0.75-X0)/SX;
  var acc=(ins(r0,ua)?1:0)+(ins(r0,ub)?1:0)+(ins(r1,ua)?1:0)+(ins(r1,ub)?1:0);
  var o=(py*W+px)*4; var a=acc/4;
  var c=acc?col(u,v):[35,35,35];
  d[o]=c[0]*a+35*(1-a);d[o+1]=c[1]*a+35*(1-a);d[o+2]=c[2]*a+35*(1-a);d[o+3]=255;
}}
ctx.putImageData(im,0,0);
var iv=document.getElementById('ins'),ic=iv.getContext('2d'),iW=iv.width,iH=iv.height;
var im2=ic.createImageData(iW,iH),d2=im2.data;
for(var py=0;py<iH;py++){for(var px=0;px<iW;px++){
  var xx=0.4193+(1453.300000+px+0.5-1551)/4000, yy=0.5053-(440.100000+py+0.5-504)/2600;
  var dd=-2*xx+12*yy+3; var c=col(4*xx/dd,9*yy/dd),o=(py*iW+px)*4; d2[o]=c[0];d2[o+1]=c[1];d2[o+2]=c[2];d2[o+3]=255;
}}
ic.putImageData(im2,0,0);
})();
</script>
<svg width="1668" height="1006" style="position:absolute;left:0;top:0"><rect x="1017.9" y="120.3" width="639.6999999999999" height="492.2" fill="none" stroke="#a0a0a0" stroke-width="1.6"/><line x1="1011.4" y1="612.5" x2="1017.9" y2="612.5" stroke="#c8c8c8" stroke-width="1.4"/><line x1="1011.4" y1="571.6" x2="1017.9" y2="571.6" stroke="#c8c8c8" stroke-width="1.4"/><line x1="1011.4" y1="530.7" x2="1017.9" y2="530.7" stroke="#c8c8c8" stroke-width="1.4"/><line x1="1011.4" y1="489.8" x2="1017.9" y2="489.8" stroke="#c8c8c8" stroke-width="1.4"/><line x1="1011.4" y1="448.9" x2="1017.9" y2="448.9" stroke="#c8c8c8" stroke-width="1.4"/><line x1="1011.4" y1="408.0" x2="1017.9" y2="408.0" stroke="#c8c8c8" stroke-width="1.4"/><line x1="1011.4" y1="367.1" x2="1017.9" y2="367.1" stroke="#c8c8c8" stroke-width="1.4"/><line x1="1011.4" y1="326.2" x2="1017.9" y2="326.2" stroke="#c8c8c8" stroke-width="1.4"/><line x1="1011.4" y1="285.3" x2="1017.9" y2="285.3" stroke="#c8c8c8" stroke-width="1.4"/><line x1="1011.4" y1="244.4" x2="1017.9" y2="244.4" stroke="#c8c8c8" stroke-width="1.4"/><line x1="1011.4" y1="203.5" x2="1017.9" y2="203.5" stroke="#c8c8c8" stroke-width="1.4"/><line x1="1011.4" y1="162.6" x2="1017.9" y2="162.6" stroke="#c8c8c8" stroke-width="1.4"/><line x1="1017.9" y1="612.5" x2="1017.9" y2="618.5" stroke="#c8c8c8" stroke-width="1.4"/><line x1="1071.0" y1="612.5" x2="1071.0" y2="618.5" stroke="#c8c8c8" stroke-width="1.4"/><line x1="1124.2" y1="612.5" x2="1124.2" y2="618.5" stroke="#c8c8c8" stroke-width="1.4"/><line x1="1177.3" y1="612.5" x2="1177.3" y2="618.5" stroke="#c8c8c8" stroke-width="1.4"/><line x1="1230.5" y1="612.5" x2="1230.5" y2="618.5" stroke="#c8c8c8" stroke-width="1.4"/><line x1="1283.7" y1="612.5" x2="1283.7" y2="618.5" stroke="#c8c8c8" stroke-width="1.4"/><line x1="1336.8" y1="612.5" x2="1336.8" y2="618.5" stroke="#c8c8c8" stroke-width="1.4"/><line x1="1390.0" y1="612.5" x2="1390.0" y2="618.5" stroke="#c8c8c8" stroke-width="1.4"/><line x1="1443.1" y1="612.5" x2="1443.1" y2="618.5" stroke="#c8c8c8" stroke-width="1.4"/><line x1="1496.2" y1="612.5" x2="1496.2" y2="618.5" stroke="#c8c8c8" stroke-width="1.4"/><line x1="1549.4" y1="612.5" x2="1549.4" y2="618.5" stroke="#c8c8c8" stroke-width="1.4"/><line x1="1602.5" y1="612.5" x2="1602.5" y2="618.5" stroke="#c8c8c8" stroke-width="1.4"/><rect x="1453.3" y="440.1" width="197.5" height="130.60000000000002" fill="none" stroke="#909090" stroke-width="1.6"/><rect x="1144.3" y="143.9" width="12.6" height="12.6" fill="none" stroke="#f4f4f4" stroke-opacity="0.92" stroke-width="1.8"/><rect x="1167.5" y="167.9" width="12.6" height="12.6" fill="none" stroke="#f4f4f4" stroke-opacity="0.92" stroke-width="1.8"/><rect x="1207.6" y="159.4" width="12.6" height="12.6" fill="none" stroke="#f4f4f4" stroke-opacity="0.92" stroke-width="1.8"/><rect x="1227.9" y="151.7" width="12.6" height="12.6" fill="none" stroke="#f4f4f4" stroke-opacity="0.92" stroke-width="1.8"/><rect x="1254.7" y="156.1" width="12.6" height="12.6" fill="none" stroke="#f4f4f4" stroke-opacity="0.92" stroke-width="1.8"/><rect x="1287.1" y="163.1" width="12.6" height="12.6" fill="none" stroke="#f4f4f4" stroke-opacity="0.92" stroke-width="1.8"/><rect x="1330.1" y="167.1" width="12.6" height="12.6" fill="none" stroke="#f4f4f4" stroke-opacity="0.92" stroke-width="1.8"/><rect x="1490.9" y="176.3" width="12.6" height="12.6" fill="none" stroke="#f4f4f4" stroke-opacity="0.92" stroke-width="1.8"/><rect x="1205.0" y="181.8" width="12.6" height="12.6" fill="none" stroke="#f4f4f4" stroke-opacity="0.92" stroke-width="1.8"/><rect x="1269.8" y="195.8" width="12.6" height="12.6" fill="none" stroke="#f4f4f4" stroke-opacity="0.92" stroke-width="1.8"/><rect x="1259.1" y="201.7" width="12.6" height="12.6" fill="none" stroke="#f4f4f4" stroke-opacity="0.92" stroke-width="1.8"/><rect x="1348.9" y="209.1" width="12.6" height="12.6" fill="none" stroke="#f4f4f4" stroke-opacity="0.92" stroke-width="1.8"/><rect x="1410.0" y="196.5" width="12.6" height="12.6" fill="none" stroke="#f4f4f4" stroke-opacity="0.92" stroke-width="1.8"/><rect x="1175.2" y="213.1" width="12.6" height="12.6" fill="none" stroke="#f4f4f4" stroke-opacity="0.92" stroke-width="1.8"/><rect x="1159.1" y="231.9" width="12.6" height="12.6" fill="none" stroke="#f4f4f4" stroke-opacity="0.92" stroke-width="1.8"/><rect x="1163.8" y="264.2" width="12.6" height="12.6" fill="none" stroke="#f4f4f4" stroke-opacity="0.92" stroke-width="1.8"/><rect x="1198.1" y="260.9" width="12.6" height="12.6" fill="none" stroke="#f4f4f4" stroke-opacity="0.92" stroke-width="1.8"/><rect x="1218.7" y="266.1" width="12.6" height="12.6" fill="none" stroke="#f4f4f4" stroke-opacity="0.92" stroke-width="1.8"/><rect x="1254.0" y="284.1" width="12.6" height="12.6" fill="none" stroke="#f4f4f4" stroke-opacity="0.92" stroke-width="1.8"/><rect x="1316.2" y="255.0" width="12.6" height="12.6" fill="none" stroke="#f4f4f4" stroke-opacity="0.92" stroke-width="1.8"/><rect x="1201.0" y="313.9" width="12.6" height="12.6" fill="none" stroke="#f4f4f4" stroke-opacity="0.92" stroke-width="1.8"/><rect x="1336.0" y="334.1" width="12.6" height="12.6" fill="none" stroke="#f4f4f4" stroke-opacity="0.92" stroke-width="1.8"/><rect x="1201.0" y="364.3" width="12.6" height="12.6" fill="none" stroke="#f4f4f4" stroke-opacity="0.92" stroke-width="1.8"/><rect x="1198.1" y="475.8" width="12.6" height="12.6" fill="none" stroke="#f4f4f4" stroke-opacity="0.92" stroke-width="1.8"/><ellipse cx="1151" cy="150.2" rx="4.6" ry="4.4" fill="#22ee22" stroke="#111" stroke-width="1.1"/><ellipse cx="1173.8" cy="173.4" rx="4.6" ry="4.4" fill="#4a7a4a" stroke="#111" stroke-width="1.1"/><ellipse cx="1211.3" cy="165.3" rx="4.6" ry="4.4" fill="#9aaa50" stroke="#111" stroke-width="1.1"/><ellipse cx="1231.6" cy="158" rx="4.6" ry="4.4" fill="#ffee00" stroke="#111" stroke-width="1.1"/><ellipse cx="1257" cy="162.4" rx="4.6" ry="4.4" fill="#e8c030" stroke="#111" stroke-width="1.1"/><ellipse cx="1287.5" cy="167.5" rx="4.6" ry="4.4" fill="#e0a040" stroke="#111" stroke-width="1.1"/><ellipse cx="1330.2" cy="171.6" rx="4.6" ry="4.4" fill="#d08040" stroke="#111" stroke-width="1.1"/><ellipse cx="1496.9" cy="181.9" rx="4.6" ry="4.4" fill="#ee1111" stroke="#111" stroke-width="1.1"/><ellipse cx="1208.4" cy="187" rx="4.6" ry="4.4" fill="#5a6a45" stroke="#111" stroke-width="1.1"/><ellipse cx="1273.9" cy="199.9" rx="4.6" ry="4.4" fill="#6a5040" stroke="#111" stroke-width="1.1"/><ellipse cx="1258.8" cy="207.3" rx="4.6" ry="4.4" fill="#b09080" stroke="#111" stroke-width="1.1"/><ellipse cx="1349" cy="215.4" rx="4.6" ry="4.4" fill="#b04050" stroke="#111" stroke-width="1.1"/><ellipse cx="1418.5" cy="202.1" rx="4.6" ry="4.4" fill="#a03a40" stroke="#111" stroke-width="1.1"/><ellipse cx="1181.5" cy="219.4" rx="4.6" ry="4.4" fill="#70a090" stroke="#111" stroke-width="1.1"/><ellipse cx="1165" cy="237.4" rx="4.6" ry="4.4" fill="#00eeff" stroke="#111" stroke-width="1.1"/><ellipse cx="1168" cy="267.2" rx="4.6" ry="4.4" fill="#207090" stroke="#111" stroke-width="1.1"/><ellipse cx="1201.8" cy="265.4" rx="4.6" ry="4.4" fill="#6080a0" stroke="#111" stroke-width="1.1"/><ellipse cx="1222.8" cy="269.8" rx="4.6" ry="4.4" fill="#8080a0" stroke="#111" stroke-width="1.1"/><ellipse cx="1257.3" cy="293" rx="4.6" ry="4.4" fill="#5a4060" stroke="#111" stroke-width="1.1"/><ellipse cx="1317.3" cy="261.3" rx="4.6" ry="4.4" fill="#b04090" stroke="#111" stroke-width="1.1"/><ellipse cx="1202.9" cy="318.7" rx="4.6" ry="4.4" fill="#5060a0" stroke="#111" stroke-width="1.1"/><ellipse cx="1336.4" cy="343.4" rx="4.6" ry="4.4" fill="#ff00ff" stroke="#111" stroke-width="1.1"/><ellipse cx="1204.4" cy="374.7" rx="4.6" ry="4.4" fill="#404890" stroke="#111" stroke-width="1.1"/><ellipse cx="1203.6" cy="478" rx="4.6" ry="4.4" fill="#0000ee" stroke="#111" stroke-width="1.1"/><circle cx="1209.9" cy="267.2" r="5" fill="#000"/><rect x="1220.9" y="220.8" width="12.6" height="12.6" fill="none" stroke="#000" stroke-width="2.6"/><ellipse cx="1225.7" cy="226.4" rx="5" ry="4.8" fill="#9a9a9a" stroke="#111" stroke-width="1.2"/><rect x="1544" y="497" width="14" height="14" fill="none" stroke="#f4f4f4" stroke-width="1.8"/><circle cx="1533.6" cy="499.2" r="4.6" fill="none" stroke="#111" stroke-width="1.6"/></svg>
<div class="t" style="left:1002.40px;top:605.63px;font-size:13.66px;line-height:13.66px;color:#dcdcdc;">0</div>
<div class="t" style="left:983.40px;top:564.73px;font-size:13.66px;line-height:13.66px;color:#dcdcdc;">0,05</div>
<div class="t" style="left:991.40px;top:523.83px;font-size:13.66px;line-height:13.66px;color:#dcdcdc;">0,1</div>
<div class="t" style="left:983.40px;top:482.93px;font-size:13.66px;line-height:13.66px;color:#dcdcdc;">0,15</div>
<div class="t" style="left:991.40px;top:442.03px;font-size:13.66px;line-height:13.66px;color:#dcdcdc;">0,2</div>
<div class="t" style="left:983.40px;top:401.13px;font-size:13.66px;line-height:13.66px;color:#dcdcdc;">0,25</div>
<div class="t" style="left:991.40px;top:360.23px;font-size:13.66px;line-height:13.66px;color:#dcdcdc;">0,3</div>
<div class="t" style="left:983.40px;top:319.33px;font-size:13.66px;line-height:13.66px;color:#dcdcdc;">0,35</div>
<div class="t" style="left:991.40px;top:278.43px;font-size:13.66px;line-height:13.66px;color:#dcdcdc;">0,4</div>
<div class="t" style="left:983.40px;top:237.53px;font-size:13.66px;line-height:13.66px;color:#dcdcdc;">0,45</div>
<div class="t" style="left:991.40px;top:196.63px;font-size:13.66px;line-height:13.66px;color:#dcdcdc;">0,5</div>
<div class="t" style="left:983.40px;top:155.73px;font-size:13.66px;line-height:13.66px;color:#dcdcdc;">0,55</div>
<div class="t" style="left:1014.40px;top:621.98px;font-size:13.37px;line-height:13.37px;color:#dcdcdc;">0</div>
<div class="t" style="left:1058.05px;top:621.98px;font-size:13.37px;line-height:13.37px;color:#dcdcdc;">0,05</div>
<div class="t" style="left:1115.20px;top:621.98px;font-size:13.37px;line-height:13.37px;color:#dcdcdc;">0,1</div>
<div class="t" style="left:1164.35px;top:621.98px;font-size:13.37px;line-height:13.37px;color:#dcdcdc;">0,15</div>
<div class="t" style="left:1221.50px;top:621.98px;font-size:13.37px;line-height:13.37px;color:#dcdcdc;">0,2</div>
<div class="t" style="left:1270.65px;top:621.98px;font-size:13.37px;line-height:13.37px;color:#dcdcdc;">0,25</div>
<div class="t" style="left:1327.80px;top:621.98px;font-size:13.37px;line-height:13.37px;color:#dcdcdc;">0,3</div>
<div class="t" style="left:1376.95px;top:621.98px;font-size:13.37px;line-height:13.37px;color:#dcdcdc;">0,35</div>
<div class="t" style="left:1434.10px;top:621.98px;font-size:13.37px;line-height:13.37px;color:#dcdcdc;">0,4</div>
<div class="t" style="left:1483.25px;top:621.98px;font-size:13.37px;line-height:13.37px;color:#dcdcdc;">0,45</div>
<div class="t" style="left:1540.40px;top:621.98px;font-size:13.37px;line-height:13.37px;color:#dcdcdc;">0,5</div>
<div class="t" style="left:1589.55px;top:621.98px;font-size:13.37px;line-height:13.37px;color:#dcdcdc;">0,55</div>
<div style="position:absolute;left:1402.40px;top:580.20px;width:252.60px;height:27.80px;background:#2b2b2b"></div>
<div class="t" style="left:1404.00px;top:585.22px;font-size:20.06px;line-height:20.06px;color:#f0f0f0;transform:scaleX(0.9767);transform-origin:0 0;">RGB Triplet: 255, 255, 0</div>
<div style="position:absolute;left:320.20px;top:662.00px;width:1347.80px;height:213.00px;background:#0c0c0c"></div>
<div style="position:absolute;left:322.00px;top:663.40px;width:1344.00px;height:12.60px;background:#313131"></div>
<div style="position:absolute;left:322.00px;top:676.00px;width:1344.00px;height:11.90px;background:#171717"></div>
<div style="position:absolute;left:322.00px;top:687.90px;width:1344.00px;height:23.57px;background:#444444"></div>
<div style="position:absolute;left:322.00px;top:711.27px;width:1344.00px;height:23.57px;background:#808080"></div>
<div style="position:absolute;left:322.00px;top:734.64px;width:1344.00px;height:23.57px;background:#444444"></div>
<div style="position:absolute;left:322.00px;top:758.01px;width:1344.00px;height:23.57px;background:#808080"></div>
<div style="position:absolute;left:322.00px;top:781.38px;width:1344.00px;height:23.57px;background:#444444"></div>
<div style="position:absolute;left:322.00px;top:804.75px;width:1344.00px;height:23.57px;background:#808080"></div>
<div style="position:absolute;left:322.00px;top:828.12px;width:1344.00px;height:23.57px;background:#444444"></div>
<div style="position:absolute;left:322.00px;top:851.49px;width:1344.00px;height:23.57px;background:#808080"></div>
<div style="position:absolute;left:320.20px;top:874.60px;width:1345.80px;height:14.10px;background:#656565"></div>
<div style="position:absolute;left:343.7px;top:876.5px;width:634.5px;height:10.5px;border-radius:5px;background:#3a3a3a"></div>
<div style="position:absolute;left:323px;top:875.5px;width:17px;height:13px;border-radius:3px;background:#808080;border:1px solid #8a8a8a;box-sizing:border-box"></div>
<svg width="8" height="10" style="left:328px;top:877px"><path d="M6.5 0.5 L6.5 9.5 L1 5 Z" fill="#404040"/></svg>
<div style="position:absolute;left:1648.5px;top:875.5px;width:15.5px;height:13px;border-radius:3px;background:#7a7a7a;border:1px solid #8a8a8a;box-sizing:border-box"></div>
<svg width="8" height="10" style="left:1653px;top:877px"><path d="M1 0.5 L1 9.5 L6.5 5 Z" fill="#3a3a3a"/></svg>
<div style="position:absolute;left:0;top:0;width:1665px;height:1006px;overflow:hidden">
<div class="t" style="left:492.40px;top:669.51px;font-size:13.81px;line-height:13.81px;color:#f2f2f2;transform:scaleX(1.3222);transform-origin:0 0;-webkit-text-stroke:0.5px #f2f2f2">White</div>
<div class="t" style="left:554.40px;top:669.51px;font-size:13.81px;line-height:13.81px;color:#f2f2f2;transform:scaleX(1.2408);transform-origin:0 0;-webkit-text-stroke:0.5px #f2f2f2">Gray 80</div>
<div class="t" style="left:625.00px;top:669.51px;font-size:13.81px;line-height:13.81px;color:#f2f2f2;transform:scaleX(1.2408);transform-origin:0 0;-webkit-text-stroke:0.5px #f2f2f2">Gray 65</div>
<div class="t" style="left:696.00px;top:669.51px;font-size:13.81px;line-height:13.81px;color:#f2f2f2;transform:scaleX(1.2408);transform-origin:0 0;-webkit-text-stroke:0.5px #f2f2f2">Gray 50</div>
<div class="t" style="left:766.70px;top:669.51px;font-size:13.81px;line-height:13.81px;color:#f2f2f2;transform:scaleX(1.2408);transform-origin:0 0;-webkit-text-stroke:0.5px #f2f2f2">Gray 35</div>
<div class="t" style="left:840.70px;top:669.51px;font-size:13.81px;line-height:13.81px;color:#f2f2f2;transform:scaleX(1.1714);transform-origin:0 0;-webkit-text-stroke:0.5px #f2f2f2">Black</div>
<div class="t" style="left:894.00px;top:669.51px;font-size:13.81px;line-height:13.81px;color:#f2f2f2;transform:scaleX(1.2333);transform-origin:0 0;-webkit-text-stroke:0.5px #f2f2f2">Dark Skin</div>
<div class="t" style="left:979.00px;top:669.51px;font-size:13.81px;line-height:13.81px;color:#f2f2f2;transform:scaleX(1.2333);transform-origin:0 0;-webkit-text-stroke:0.5px #f2f2f2">Light Skin</div>
<div class="t" style="left:1064.40px;top:669.51px;font-size:13.81px;line-height:13.81px;color:#f2f2f2;transform:scaleX(1.2185);transform-origin:0 0;-webkit-text-stroke:0.5px #f2f2f2">Blue Sky</div>
<div class="t" style="left:1140.80px;top:669.51px;font-size:13.81px;line-height:13.81px;color:#f2f2f2;transform:scaleX(1.2289);transform-origin:0 0;-webkit-text-stroke:0.5px #f2f2f2">Foliage</div>
<div class="t" style="left:1207.50px;top:669.51px;font-size:13.81px;line-height:13.81px;color:#f2f2f2;transform:scaleX(1.2808);transform-origin:0 0;-webkit-text-stroke:0.5px #f2f2f2">Blue Flower</div>
<div class="t" style="left:1311.00px;top:669.51px;font-size:13.81px;line-height:13.81px;color:#f2f2f2;transform:scaleX(1.2722);transform-origin:0 0;-webkit-text-stroke:0.5px #f2f2f2">Bluish Green</div>
<div class="t" style="left:1421.70px;top:669.51px;font-size:13.81px;line-height:13.81px;color:#f2f2f2;transform:scaleX(1.2457);transform-origin:0 0;-webkit-text-stroke:0.5px #f2f2f2">Orange</div>
<div class="t" style="left:1489.60px;top:669.51px;font-size:13.81px;line-height:13.81px;color:#f2f2f2;transform:scaleX(1.2741);transform-origin:0 0;-webkit-text-stroke:0.5px #f2f2f2">Purplish Blue</div>
<div class="t" style="left:1603.40px;top:669.51px;font-size:13.81px;line-height:13.81px;color:#f2f2f2;transform:scaleX(1.2741);transform-origin:0 0;-webkit-text-stroke:0.5px #f2f2f2">Moderate Red</div>
</div>
<div class="t" style="left:336.30px;top:691.32px;font-size:16.28px;line-height:16.28px;color:#f4f4f4;font-weight:bold;transform:scaleX(1.1250);transform-origin:0 0;">x: CIE31</div>
<div class="t" style="left:487.60px;top:691.32px;font-size:16.28px;line-height:16.28px;color:#f0f0f0;transform:scaleX(1.1700);transform-origin:0 0;">0,31</div>
<div class="t" style="left:554.40px;top:691.32px;font-size:16.28px;line-height:16.28px;color:#f0f0f0;transform:scaleX(1.1700);transform-origin:0 0;">0,31</div>
<div class="t" style="left:625.00px;top:691.32px;font-size:16.28px;line-height:16.28px;color:#f0f0f0;transform:scaleX(1.1700);transform-origin:0 0;">0,31</div>
<div class="t" style="left:696.00px;top:691.32px;font-size:16.28px;line-height:16.28px;color:#f0f0f0;transform:scaleX(1.1700);transform-origin:0 0;">0,31</div>
<div class="t" style="left:766.70px;top:691.32px;font-size:16.28px;line-height:16.28px;color:#f0f0f0;transform:scaleX(1.1700);transform-origin:0 0;">0,31</div>
<div class="t" style="left:837.80px;top:691.32px;font-size:16.28px;line-height:16.28px;color:#f0f0f0;transform:scaleX(1.1700);transform-origin:0 0;">0,26</div>
<div class="t" style="left:894.00px;top:691.32px;font-size:16.28px;line-height:16.28px;color:#f0f0f0;transform:scaleX(1.1700);transform-origin:0 0;">0,40</div>
<div class="t" style="left:978.00px;top:691.32px;font-size:16.28px;line-height:16.28px;color:#f0f0f0;transform:scaleX(1.1700);transform-origin:0 0;">0,37</div>
<div class="t" style="left:1064.00px;top:691.32px;font-size:16.28px;line-height:16.28px;color:#f0f0f0;transform:scaleX(1.1700);transform-origin:0 0;">0,25</div>
<div class="t" style="left:1140.00px;top:691.32px;font-size:16.28px;line-height:16.28px;color:#f0f0f0;transform:scaleX(1.1700);transform-origin:0 0;">0,34</div>
<div class="t" style="left:1206.70px;top:691.32px;font-size:16.28px;line-height:16.28px;color:#f0f0f0;transform:scaleX(1.1700);transform-origin:0 0;">0,27</div>
<div class="t" style="left:1311.00px;top:691.32px;font-size:16.28px;line-height:16.28px;color:#f0f0f0;transform:scaleX(1.1700);transform-origin:0 0;">0,26</div>
<div class="t" style="left:1421.70px;top:691.32px;font-size:16.28px;line-height:16.28px;color:#f0f0f0;transform:scaleX(1.1700);transform-origin:0 0;">0,51</div>
<div class="t" style="left:1489.60px;top:691.32px;font-size:16.28px;line-height:16.28px;color:#f0f0f0;transform:scaleX(1.1700);transform-origin:0 0;">0,21</div>
<div class="t" style="left:1603.40px;top:691.32px;font-size:16.28px;line-height:16.28px;color:#f0f0f0;transform:scaleX(1.1700);transform-origin:0 0;">0,46</div>
<div class="t" style="left:336.30px;top:714.69px;font-size:16.28px;line-height:16.28px;color:#f4f4f4;font-weight:bold;transform:scaleX(1.1250);transform-origin:0 0;">y: CIE31</div>
<div class="t" style="left:487.60px;top:714.69px;font-size:16.28px;line-height:16.28px;color:#f0f0f0;transform:scaleX(1.1700);transform-origin:0 0;">0,33</div>
<div class="t" style="left:554.40px;top:714.69px;font-size:16.28px;line-height:16.28px;color:#f0f0f0;transform:scaleX(1.1700);transform-origin:0 0;">0,33</div>
<div class="t" style="left:625.00px;top:714.69px;font-size:16.28px;line-height:16.28px;color:#f0f0f0;transform:scaleX(1.1700);transform-origin:0 0;">0,33</div>
<div class="t" style="left:696.00px;top:714.69px;font-size:16.28px;line-height:16.28px;color:#f0f0f0;transform:scaleX(1.1700);transform-origin:0 0;">0,33</div>
<div class="t" style="left:766.70px;top:714.69px;font-size:16.28px;line-height:16.28px;color:#f0f0f0;transform:scaleX(1.1700);transform-origin:0 0;">0,33</div>
<div class="t" style="left:837.80px;top:714.69px;font-size:16.28px;line-height:16.28px;color:#f0f0f0;transform:scaleX(1.1700);transform-origin:0 0;">0,26</div>
<div class="t" style="left:894.00px;top:714.69px;font-size:16.28px;line-height:16.28px;color:#f0f0f0;transform:scaleX(1.1700);transform-origin:0 0;">0,37</div>
<div class="t" style="left:978.00px;top:714.69px;font-size:16.28px;line-height:16.28px;color:#f0f0f0;transform:scaleX(1.1700);transform-origin:0 0;">0,36</div>
<div class="t" style="left:1064.00px;top:714.69px;font-size:16.28px;line-height:16.28px;color:#f0f0f0;transform:scaleX(1.1700);transform-origin:0 0;">0,27</div>
<div class="t" style="left:1140.00px;top:714.69px;font-size:16.28px;line-height:16.28px;color:#f0f0f0;transform:scaleX(1.1700);transform-origin:0 0;">0,43</div>
<div class="t" style="left:1206.70px;top:714.69px;font-size:16.28px;line-height:16.28px;color:#f0f0f0;transform:scaleX(1.1700);transform-origin:0 0;">0,26</div>
<div class="t" style="left:1311.00px;top:714.69px;font-size:16.28px;line-height:16.28px;color:#f0f0f0;transform:scaleX(1.1700);transform-origin:0 0;">0,36</div>
<div class="t" style="left:1421.70px;top:714.69px;font-size:16.28px;line-height:16.28px;color:#f0f0f0;transform:scaleX(1.1700);transform-origin:0 0;">0,41</div>
<div class="t" style="left:1489.60px;top:714.69px;font-size:16.28px;line-height:16.28px;color:#f0f0f0;transform:scaleX(1.1700);transform-origin:0 0;">0,19</div>
<div class="t" style="left:1603.40px;top:714.69px;font-size:16.28px;line-height:16.28px;color:#f0f0f0;transform:scaleX(1.1700);transform-origin:0 0;">0,31</div>
<div class="t" style="left:336.30px;top:738.06px;font-size:16.28px;line-height:16.28px;color:#f4f4f4;font-weight:bold;transform:scaleX(1.1000);transform-origin:0 0;">Y</div>
<div class="t" style="left:487.60px;top:738.06px;font-size:16.28px;line-height:16.28px;color:#f0f0f0;transform:scaleX(1.1700);transform-origin:0 0;">620,42</div>
<div class="t" style="left:554.40px;top:738.06px;font-size:16.28px;line-height:16.28px;color:#f0f0f0;transform:scaleX(1.1700);transform-origin:0 0;">494,67</div>
<div class="t" style="left:625.00px;top:738.06px;font-size:16.28px;line-height:16.28px;color:#f0f0f0;transform:scaleX(1.1700);transform-origin:0 0;">401,79</div>
<div class="t" style="left:696.00px;top:738.06px;font-size:16.28px;line-height:16.28px;color:#f0f0f0;transform:scaleX(1.1700);transform-origin:0 0;">310,18</div>
<div class="t" style="left:766.70px;top:738.06px;font-size:16.28px;line-height:16.28px;color:#f0f0f0;transform:scaleX(1.1700);transform-origin:0 0;">217,56</div>
<div class="t" style="left:837.80px;top:738.06px;font-size:16.28px;line-height:16.28px;color:#f0f0f0;transform:scaleX(1.1700);transform-origin:0 0;">0,62</div>
<div class="t" style="left:894.00px;top:738.06px;font-size:16.28px;line-height:16.28px;color:#f0f0f0;transform:scaleX(1.1700);transform-origin:0 0;">61,69</div>
<div class="t" style="left:978.00px;top:738.06px;font-size:16.28px;line-height:16.28px;color:#f0f0f0;transform:scaleX(1.1700);transform-origin:0 0;">220,86</div>
<div class="t" style="left:1064.00px;top:738.06px;font-size:16.28px;line-height:16.28px;color:#f0f0f0;transform:scaleX(1.1700);transform-origin:0 0;">119,69</div>
<div class="t" style="left:1140.00px;top:738.06px;font-size:16.28px;line-height:16.28px;color:#f0f0f0;transform:scaleX(1.1700);transform-origin:0 0;">81,41</div>
<div class="t" style="left:1206.70px;top:738.06px;font-size:16.28px;line-height:16.28px;color:#f0f0f0;transform:scaleX(1.1700);transform-origin:0 0;">148,76</div>
<div class="t" style="left:1311.00px;top:738.06px;font-size:16.28px;line-height:16.28px;color:#f0f0f0;transform:scaleX(1.1700);transform-origin:0 0;">265,85</div>
<div class="t" style="left:1421.70px;top:738.06px;font-size:16.28px;line-height:16.28px;color:#f0f0f0;transform:scaleX(1.1700);transform-origin:0 0;">174,92</div>
<div class="t" style="left:1489.60px;top:738.06px;font-size:16.28px;line-height:16.28px;color:#f0f0f0;transform:scaleX(1.1700);transform-origin:0 0;">74,89</div>
<div class="t" style="left:1603.40px;top:738.06px;font-size:16.28px;line-height:16.28px;color:#f0f0f0;transform:scaleX(1.1700);transform-origin:0 0;">115,44</div>
<div class="t" style="left:336.30px;top:761.43px;font-size:16.28px;line-height:16.28px;color:#f4f4f4;font-weight:bold;transform:scaleX(1.1478);transform-origin:0 0;">Target x:CIE31</div>
<div class="t" style="left:487.60px;top:761.43px;font-size:16.28px;line-height:16.28px;color:#f0f0f0;transform:scaleX(1.1700);transform-origin:0 0;">0,31</div>
<div class="t" style="left:554.40px;top:761.43px;font-size:16.28px;line-height:16.28px;color:#f0f0f0;transform:scaleX(1.1700);transform-origin:0 0;">0,31</div>
<div class="t" style="left:625.00px;top:761.43px;font-size:16.28px;line-height:16.28px;color:#f0f0f0;transform:scaleX(1.1700);transform-origin:0 0;">0,31</div>
<div class="t" style="left:696.00px;top:761.43px;font-size:16.28px;line-height:16.28px;color:#f0f0f0;transform:scaleX(1.1700);transform-origin:0 0;">0,31</div>
<div class="t" style="left:766.70px;top:761.43px;font-size:16.28px;line-height:16.28px;color:#f0f0f0;transform:scaleX(1.1700);transform-origin:0 0;">0,31</div>
<div class="t" style="left:837.80px;top:761.43px;font-size:16.28px;line-height:16.28px;color:#f0f0f0;transform:scaleX(1.1700);transform-origin:0 0;">0,31</div>
<div class="t" style="left:894.00px;top:761.43px;font-size:16.28px;line-height:16.28px;color:#f0f0f0;transform:scaleX(1.1700);transform-origin:0 0;">0,40</div>
<div class="t" style="left:978.00px;top:761.43px;font-size:16.28px;line-height:16.28px;color:#f0f0f0;transform:scaleX(1.1700);transform-origin:0 0;">0,38</div>
<div class="t" style="left:1064.00px;top:761.43px;font-size:16.28px;line-height:16.28px;color:#f0f0f0;transform:scaleX(1.1700);transform-origin:0 0;">0,25</div>
<div class="t" style="left:1140.00px;top:761.43px;font-size:16.28px;line-height:16.28px;color:#f0f0f0;transform:scaleX(1.1700);transform-origin:0 0;">0,34</div>
<div class="t" style="left:1206.70px;top:761.43px;font-size:16.28px;line-height:16.28px;color:#f0f0f0;transform:scaleX(1.1700);transform-origin:0 0;">0,27</div>
<div class="t" style="left:1311.00px;top:761.43px;font-size:16.28px;line-height:16.28px;color:#f0f0f0;transform:scaleX(1.1700);transform-origin:0 0;">0,26</div>
<div class="t" style="left:1421.70px;top:761.43px;font-size:16.28px;line-height:16.28px;color:#f0f0f0;transform:scaleX(1.1700);transform-origin:0 0;">0,51</div>
<div class="t" style="left:1489.60px;top:761.43px;font-size:16.28px;line-height:16.28px;color:#f0f0f0;transform:scaleX(1.1700);transform-origin:0 0;">0,22</div>
<div class="t" style="left:1603.40px;top:761.43px;font-size:16.28px;line-height:16.28px;color:#f0f0f0;transform:scaleX(1.1700);transform-origin:0 0;">0,46</div>
<div class="t" style="left:336.30px;top:784.80px;font-size:16.28px;line-height:16.28px;color:#f4f4f4;font-weight:bold;transform:scaleX(1.1478);transform-origin:0 0;">Target y:CIE31</div>
<div class="t" style="left:487.60px;top:784.80px;font-size:16.28px;line-height:16.28px;color:#f0f0f0;transform:scaleX(1.1700);transform-origin:0 0;">0,33</div>
<div class="t" style="left:554.40px;top:784.80px;font-size:16.28px;line-height:16.28px;color:#f0f0f0;transform:scaleX(1.1700);transform-origin:0 0;">0,33</div>
<div class="t" style="left:625.00px;top:784.80px;font-size:16.28px;line-height:16.28px;color:#f0f0f0;transform:scaleX(1.1700);transform-origin:0 0;">0,33</div>
<div class="t" style="left:696.00px;top:784.80px;font-size:16.28px;line-height:16.28px;color:#f0f0f0;transform:scaleX(1.1700);transform-origin:0 0;">0,33</div>
<div class="t" style="left:766.70px;top:784.80px;font-size:16.28px;line-height:16.28px;color:#f0f0f0;transform:scaleX(1.1700);transform-origin:0 0;">0,33</div>
<div class="t" style="left:837.80px;top:784.80px;font-size:16.28px;line-height:16.28px;color:#f0f0f0;transform:scaleX(1.1700);transform-origin:0 0;">0,33</div>
<div class="t" style="left:894.00px;top:784.80px;font-size:16.28px;line-height:16.28px;color:#f0f0f0;transform:scaleX(1.1700);transform-origin:0 0;">0,36</div>
<div class="t" style="left:978.00px;top:784.80px;font-size:16.28px;line-height:16.28px;color:#f0f0f0;transform:scaleX(1.1700);transform-origin:0 0;">0,36</div>
<div class="t" style="left:1064.00px;top:784.80px;font-size:16.28px;line-height:16.28px;color:#f0f0f0;transform:scaleX(1.1700);transform-origin:0 0;">0,27</div>
<div class="t" style="left:1140.00px;top:784.80px;font-size:16.28px;line-height:16.28px;color:#f0f0f0;transform:scaleX(1.1700);transform-origin:0 0;">0,43</div>
<div class="t" style="left:1206.70px;top:784.80px;font-size:16.28px;line-height:16.28px;color:#f0f0f0;transform:scaleX(1.1700);transform-origin:0 0;">0,25</div>
<div class="t" style="left:1311.00px;top:784.80px;font-size:16.28px;line-height:16.28px;color:#f0f0f0;transform:scaleX(1.1700);transform-origin:0 0;">0,36</div>
<div class="t" style="left:1421.70px;top:784.80px;font-size:16.28px;line-height:16.28px;color:#f0f0f0;transform:scaleX(1.1700);transform-origin:0 0;">0,41</div>
<div class="t" style="left:1489.60px;top:784.80px;font-size:16.28px;line-height:16.28px;color:#f0f0f0;transform:scaleX(1.1700);transform-origin:0 0;">0,19</div>
<div class="t" style="left:1603.40px;top:784.80px;font-size:16.28px;line-height:16.28px;color:#f0f0f0;transform:scaleX(1.1700);transform-origin:0 0;">0,31</div>
<div class="t" style="left:336.30px;top:808.17px;font-size:16.28px;line-height:16.28px;color:#f4f4f4;font-weight:bold;transform:scaleX(1.1875);transform-origin:0 0;">Target Y</div>
<div class="t" style="left:487.60px;top:808.17px;font-size:16.28px;line-height:16.28px;color:#f0f0f0;transform:scaleX(1.1700);transform-origin:0 0;">620,42</div>
<div class="t" style="left:554.40px;top:808.17px;font-size:16.28px;line-height:16.28px;color:#f0f0f0;transform:scaleX(1.1700);transform-origin:0 0;">490,93</div>
<div class="t" style="left:625.00px;top:808.17px;font-size:16.28px;line-height:16.28px;color:#f0f0f0;transform:scaleX(1.1700);transform-origin:0 0;">395,58</div>
<div class="t" style="left:696.00px;top:808.17px;font-size:16.28px;line-height:16.28px;color:#f0f0f0;transform:scaleX(1.1700);transform-origin:0 0;">304,64</div>
<div class="t" style="left:766.70px;top:808.17px;font-size:16.28px;line-height:16.28px;color:#f0f0f0;transform:scaleX(1.1700);transform-origin:0 0;">212,13</div>
<div class="t" style="left:837.80px;top:808.17px;font-size:16.28px;line-height:16.28px;color:#f0f0f0;transform:scaleX(1.1700);transform-origin:0 0;">0,00</div>
<div class="t" style="left:894.00px;top:808.17px;font-size:16.28px;line-height:16.28px;color:#f0f0f0;transform:scaleX(1.1700);transform-origin:0 0;">62,50</div>
<div class="t" style="left:978.00px;top:808.17px;font-size:16.28px;line-height:16.28px;color:#f0f0f0;transform:scaleX(1.1700);transform-origin:0 0;">216,50</div>
<div class="t" style="left:1064.00px;top:808.17px;font-size:16.28px;line-height:16.28px;color:#f0f0f0;transform:scaleX(1.1700);transform-origin:0 0;">116,01</div>
<div class="t" style="left:1140.00px;top:808.17px;font-size:16.28px;line-height:16.28px;color:#f0f0f0;transform:scaleX(1.1700);transform-origin:0 0;">80,86</div>
<div class="t" style="left:1206.70px;top:808.17px;font-size:16.28px;line-height:16.28px;color:#f0f0f0;transform:scaleX(1.1700);transform-origin:0 0;">144,67</div>
<div class="t" style="left:1311.00px;top:808.17px;font-size:16.28px;line-height:16.28px;color:#f0f0f0;transform:scaleX(1.1700);transform-origin:0 0;">259,79</div>
<div class="t" style="left:1421.70px;top:808.17px;font-size:16.28px;line-height:16.28px;color:#f0f0f0;transform:scaleX(1.1700);transform-origin:0 0;">175,87</div>
<div class="t" style="left:1489.60px;top:808.17px;font-size:16.28px;line-height:16.28px;color:#f0f0f0;transform:scaleX(1.1700);transform-origin:0 0;">72,92</div>
<div class="t" style="left:1603.40px;top:808.17px;font-size:16.28px;line-height:16.28px;color:#f0f0f0;transform:scaleX(1.1700);transform-origin:0 0;">115,87</div>
<div class="t" style="left:336.30px;top:831.54px;font-size:16.28px;line-height:16.28px;color:#f4f4f4;font-weight:bold;transform:scaleX(1.1921);transform-origin:0 0;">ΔE 2000</div>
<div class="t" style="left:487.60px;top:831.54px;font-size:16.28px;line-height:16.28px;color:#f0f0f0;transform:scaleX(1.1700);transform-origin:0 0;">4,11</div>
<div class="t" style="left:554.40px;top:831.54px;font-size:16.28px;line-height:16.28px;color:#f0f0f0;transform:scaleX(1.1700);transform-origin:0 0;">4,13</div>
<div class="t" style="left:625.00px;top:831.54px;font-size:16.28px;line-height:16.28px;color:#f0f0f0;transform:scaleX(1.1700);transform-origin:0 0;">3,93</div>
<div class="t" style="left:696.00px;top:831.54px;font-size:16.28px;line-height:16.28px;color:#f0f0f0;transform:scaleX(1.1700);transform-origin:0 0;">3,68</div>
<div class="t" style="left:766.70px;top:831.54px;font-size:16.28px;line-height:16.28px;color:#f0f0f0;transform:scaleX(1.1700);transform-origin:0 0;">3,24</div>
<div class="t" style="left:837.80px;top:831.54px;font-size:16.28px;line-height:16.28px;color:#f0f0f0;transform:scaleX(1.1700);transform-origin:0 0;">1,14</div>
<div class="t" style="left:894.00px;top:831.54px;font-size:16.28px;line-height:16.28px;color:#f0f0f0;transform:scaleX(1.1700);transform-origin:0 0;">1,60</div>
<div class="t" style="left:978.00px;top:831.54px;font-size:16.28px;line-height:16.28px;color:#f0f0f0;transform:scaleX(1.1700);transform-origin:0 0;">2,77</div>
<div class="t" style="left:1064.00px;top:831.54px;font-size:16.28px;line-height:16.28px;color:#f0f0f0;transform:scaleX(1.1700);transform-origin:0 0;">2,00</div>
<div class="t" style="left:1140.00px;top:831.54px;font-size:16.28px;line-height:16.28px;color:#f0f0f0;transform:scaleX(1.1700);transform-origin:0 0;">1,11</div>
<div class="t" style="left:1206.70px;top:831.54px;font-size:16.28px;line-height:16.28px;color:#f0f0f0;transform:scaleX(1.1700);transform-origin:0 0;">1,68</div>
<div class="t" style="left:1311.00px;top:831.54px;font-size:16.28px;line-height:16.28px;color:#f0f0f0;transform:scaleX(1.1700);transform-origin:0 0;">0,66</div>
<div class="t" style="left:1421.70px;top:831.54px;font-size:16.28px;line-height:16.28px;color:#f0f0f0;transform:scaleX(1.1700);transform-origin:0 0;">1,92</div>
<div class="t" style="left:1489.60px;top:831.54px;font-size:16.28px;line-height:16.28px;color:#f0f0f0;transform:scaleX(1.1700);transform-origin:0 0;">1,36</div>
<div class="t" style="left:1603.40px;top:831.54px;font-size:16.28px;line-height:16.28px;color:#f0f0f0;transform:scaleX(1.1700);transform-origin:0 0;">0,76</div>
<div class="t" style="left:336.30px;top:854.91px;font-size:16.28px;line-height:16.28px;color:#f4f4f4;font-weight:bold;transform:scaleX(1.1673);transform-origin:0 0;">ΔE ITP</div>
<div class="t" style="left:487.60px;top:854.91px;font-size:16.28px;line-height:16.28px;color:#f0f0f0;transform:scaleX(1.1700);transform-origin:0 0;">3,03</div>
<div class="t" style="left:554.40px;top:854.91px;font-size:16.28px;line-height:16.28px;color:#f0f0f0;transform:scaleX(1.1700);transform-origin:0 0;">3,30</div>
<div class="t" style="left:625.00px;top:854.91px;font-size:16.28px;line-height:16.28px;color:#f0f0f0;transform:scaleX(1.1700);transform-origin:0 0;">3,44</div>
<div class="t" style="left:696.00px;top:854.91px;font-size:16.28px;line-height:16.28px;color:#f0f0f0;transform:scaleX(1.1700);transform-origin:0 0;">3,39</div>
<div class="t" style="left:766.70px;top:854.91px;font-size:16.28px;line-height:16.28px;color:#f0f0f0;transform:scaleX(1.1700);transform-origin:0 0;">3,60</div>
<div class="t" style="left:837.80px;top:854.91px;font-size:16.28px;line-height:16.28px;color:#f0f0f0;transform:scaleX(1.1700);transform-origin:0 0;">93,32</div>
<div class="t" style="left:894.00px;top:854.91px;font-size:16.28px;line-height:16.28px;color:#f0f0f0;transform:scaleX(1.1700);transform-origin:0 0;">3,19</div>
<div class="t" style="left:978.00px;top:854.91px;font-size:16.28px;line-height:16.28px;color:#f0f0f0;transform:scaleX(1.1700);transform-origin:0 0;">5,32</div>
<div class="t" style="left:1064.00px;top:854.91px;font-size:16.28px;line-height:16.28px;color:#f0f0f0;transform:scaleX(1.1700);transform-origin:0 0;">3,39</div>
<div class="t" style="left:1140.00px;top:854.91px;font-size:16.28px;line-height:16.28px;color:#f0f0f0;transform:scaleX(1.1700);transform-origin:0 0;">3,24</div>
<div class="t" style="left:1206.70px;top:854.91px;font-size:16.28px;line-height:16.28px;color:#f0f0f0;transform:scaleX(1.1700);transform-origin:0 0;">3,70</div>
<div class="t" style="left:1311.00px;top:854.91px;font-size:16.28px;line-height:16.28px;color:#f0f0f0;transform:scaleX(1.1700);transform-origin:0 0;">1,84</div>
<div class="t" style="left:1421.70px;top:854.91px;font-size:16.28px;line-height:16.28px;color:#f0f0f0;transform:scaleX(1.1700);transform-origin:0 0;">5,49</div>
<div class="t" style="left:1489.60px;top:854.91px;font-size:16.28px;line-height:16.28px;color:#f0f0f0;transform:scaleX(1.1700);transform-origin:0 0;">3,81</div>
<div class="t" style="left:1603.40px;top:854.91px;font-size:16.28px;line-height:16.28px;color:#f0f0f0;transform:scaleX(1.1700);transform-origin:0 0;">5,45</div>
<div style="position:absolute;left:0;top:925px;width:1263px;height:81px;overflow:hidden">
<div style="position:absolute;left:-32.80px;top:5.60px;width:62.2px;height:60.90px;border-radius:5px;background:linear-gradient(#acacac,#8e8e8e 45%,#7a7a7a);box-shadow:inset 0 1px 0 rgba(255,255,255,0.25)"></div>
<div style="position:absolute;left:-26.50px;top:11.70px;width:49.4px;height:15px;border-radius:4px;background:#8a80c8;box-shadow:inset 0 1px 2px rgba(0,0,0,0.35),0 1px 0 rgba(255,255,255,0.2)"></div>
<div style="position:absolute;left:32.20px;top:5.60px;width:62.2px;height:60.90px;border-radius:5px;background:linear-gradient(#acacac,#8e8e8e 45%,#7a7a7a);box-shadow:inset 0 1px 0 rgba(255,255,255,0.25)"></div>
<div style="position:absolute;left:38.50px;top:11.70px;width:49.4px;height:15px;border-radius:4px;background:#5ec4aa;box-shadow:inset 0 1px 2px rgba(0,0,0,0.35),0 1px 0 rgba(255,255,255,0.2)"></div>
<div style="position:absolute;left:97.20px;top:5.60px;width:62.2px;height:60.90px;border-radius:5px;background:linear-gradient(#acacac,#8e8e8e 45%,#7a7a7a);box-shadow:inset 0 1px 0 rgba(255,255,255,0.25)"></div>
<div style="position:absolute;left:103.50px;top:11.70px;width:49.4px;height:30px;border-radius:4px;background:#dd7a2a;box-shadow:inset 0 1px 2px rgba(0,0,0,0.35),0 1px 0 rgba(255,255,255,0.2)"></div>
<div style="position:absolute;left:162.20px;top:5.60px;width:62.2px;height:60.90px;border-radius:5px;background:linear-gradient(#acacac,#8e8e8e 45%,#7a7a7a);box-shadow:inset 0 1px 0 rgba(255,255,255,0.25)"></div>
<div style="position:absolute;left:168.50px;top:11.70px;width:49.4px;height:15px;border-radius:4px;background:#4a5cb0;box-shadow:inset 0 1px 2px rgba(0,0,0,0.35),0 1px 0 rgba(255,255,255,0.2)"></div>
<div style="position:absolute;left:227.20px;top:5.60px;width:62.2px;height:60.90px;border-radius:5px;background:linear-gradient(#acacac,#8e8e8e 45%,#7a7a7a);box-shadow:inset 0 1px 0 rgba(255,255,255,0.25)"></div>
<div style="position:absolute;left:233.50px;top:11.70px;width:49.4px;height:15px;border-radius:4px;background:#cc5566;box-shadow:inset 0 1px 2px rgba(0,0,0,0.35),0 1px 0 rgba(255,255,255,0.2)"></div>
<div style="position:absolute;left:292.20px;top:5.60px;width:62.2px;height:60.90px;border-radius:5px;background:linear-gradient(#acacac,#8e8e8e 45%,#7a7a7a);box-shadow:inset 0 1px 0 rgba(255,255,255,0.25)"></div>
<div style="position:absolute;left:298.50px;top:11.70px;width:49.4px;height:30px;border-radius:4px;background:#5e3a72;box-shadow:inset 0 1px 2px rgba(0,0,0,0.35),0 1px 0 rgba(255,255,255,0.2)"></div>
<div style="position:absolute;left:357.20px;top:5.60px;width:62.2px;height:60.90px;border-radius:5px;background:linear-gradient(#acacac,#8e8e8e 45%,#7a7a7a);box-shadow:inset 0 1px 0 rgba(255,255,255,0.25)"></div>
<div style="position:absolute;left:363.50px;top:11.70px;width:49.4px;height:15px;border-radius:4px;background:#a0c040;box-shadow:inset 0 1px 2px rgba(0,0,0,0.35),0 1px 0 rgba(255,255,255,0.2)"></div>
<div style="position:absolute;left:422.20px;top:5.60px;width:62.2px;height:60.90px;border-radius:5px;background:linear-gradient(#acacac,#8e8e8e 45%,#7a7a7a);box-shadow:inset 0 1px 0 rgba(255,255,255,0.25)"></div>
<div style="position:absolute;left:428.50px;top:11.70px;width:49.4px;height:15px;border-radius:4px;background:#e8a030;box-shadow:inset 0 1px 2px rgba(0,0,0,0.35),0 1px 0 rgba(255,255,255,0.2)"></div>
<div style="position:absolute;left:487.20px;top:5.60px;width:62.2px;height:60.90px;border-radius:5px;background:linear-gradient(#acacac,#8e8e8e 45%,#7a7a7a);box-shadow:inset 0 1px 0 rgba(255,255,255,0.25)"></div>
<div style="position:absolute;left:493.50px;top:11.70px;width:49.4px;height:30px;border-radius:4px;background:#3040a0;box-shadow:inset 0 1px 2px rgba(0,0,0,0.35),0 1px 0 rgba(255,255,255,0.2)"></div>
<div style="position:absolute;left:552.20px;top:5.60px;width:62.2px;height:60.90px;border-radius:5px;background:linear-gradient(#acacac,#8e8e8e 45%,#7a7a7a);box-shadow:inset 0 1px 0 rgba(255,255,255,0.25)"></div>
<div style="position:absolute;left:558.50px;top:11.70px;width:49.4px;height:30px;border-radius:4px;background:#3a9a48;box-shadow:inset 0 1px 2px rgba(0,0,0,0.35),0 1px 0 rgba(255,255,255,0.2)"></div>
<div style="position:absolute;left:617.20px;top:5.60px;width:62.2px;height:60.90px;border-radius:5px;background:linear-gradient(#acacac,#8e8e8e 45%,#7a7a7a);box-shadow:inset 0 1px 0 rgba(255,255,255,0.25)"></div>
<div style="position:absolute;left:623.50px;top:11.70px;width:49.4px;height:30px;border-radius:4px;background:#bb2a33;box-shadow:inset 0 1px 2px rgba(0,0,0,0.35),0 1px 0 rgba(255,255,255,0.2)"></div>
<div style="position:absolute;left:682.20px;top:5.60px;width:62.2px;height:60.90px;border-radius:5px;background:linear-gradient(#acacac,#8e8e8e 45%,#7a7a7a);box-shadow:inset 0 1px 0 rgba(255,255,255,0.25)"></div>
<div style="position:absolute;left:688.50px;top:11.70px;width:49.4px;height:30px;border-radius:4px;background:#f0c820;box-shadow:inset 0 1px 2px rgba(0,0,0,0.35),0 1px 0 rgba(255,255,255,0.2)"></div>
<div style="position:absolute;left:747.20px;top:5.60px;width:62.2px;height:60.90px;border-radius:5px;background:linear-gradient(#acacac,#8e8e8e 45%,#7a7a7a);box-shadow:inset 0 1px 0 rgba(255,255,255,0.25)"></div>
<div style="position:absolute;left:753.50px;top:11.70px;width:49.4px;height:30px;border-radius:4px;background:#c050a0;box-shadow:inset 0 1px 2px rgba(0,0,0,0.35),0 1px 0 rgba(255,255,255,0.2)"></div>
<div style="position:absolute;left:812.20px;top:5.60px;width:62.2px;height:60.90px;border-radius:5px;background:linear-gradient(#acacac,#8e8e8e 45%,#7a7a7a);box-shadow:inset 0 1px 0 rgba(255,255,255,0.25)"></div>
<div style="position:absolute;left:818.50px;top:11.70px;width:49.4px;height:30px;border-radius:4px;background:#0088aa;box-shadow:inset 0 1px 2px rgba(0,0,0,0.35),0 1px 0 rgba(255,255,255,0.2)"></div>
<div style="position:absolute;left:877.20px;top:5.60px;width:62.2px;height:60.90px;border-radius:5px;background:linear-gradient(#acacac,#8e8e8e 45%,#7a7a7a);box-shadow:inset 0 1px 0 rgba(255,255,255,0.25)"></div>
<div style="position:absolute;left:883.50px;top:11.70px;width:49.4px;height:30px;border-radius:4px;background:#ff0000;box-shadow:inset 0 1px 2px rgba(0,0,0,0.35),0 1px 0 rgba(255,255,255,0.2)"></div>
<div style="position:absolute;left:942.20px;top:5.60px;width:62.2px;height:60.90px;border-radius:5px;background:linear-gradient(#acacac,#8e8e8e 45%,#7a7a7a);box-shadow:inset 0 1px 0 rgba(255,255,255,0.25)"></div>
<div style="position:absolute;left:948.50px;top:11.70px;width:49.4px;height:15px;border-radius:4px;background:#00ff00;box-shadow:inset 0 1px 2px rgba(0,0,0,0.35),0 1px 0 rgba(255,255,255,0.2)"></div>
<div style="position:absolute;left:1007.20px;top:5.60px;width:62.2px;height:60.90px;border-radius:5px;background:linear-gradient(#acacac,#8e8e8e 45%,#7a7a7a);box-shadow:inset 0 1px 0 rgba(255,255,255,0.25)"></div>
<div style="position:absolute;left:1013.50px;top:11.70px;width:49.4px;height:15px;border-radius:4px;background:#0000ff;box-shadow:inset 0 1px 2px rgba(0,0,0,0.35),0 1px 0 rgba(255,255,255,0.2)"></div>
<div style="position:absolute;left:1072.20px;top:5.60px;width:62.2px;height:60.90px;border-radius:5px;background:linear-gradient(#acacac,#8e8e8e 45%,#7a7a7a);box-shadow:inset 0 1px 0 rgba(255,255,255,0.25)"></div>
<div style="position:absolute;left:1078.50px;top:11.70px;width:49.4px;height:15px;border-radius:4px;background:#00ffff;box-shadow:inset 0 1px 2px rgba(0,0,0,0.35),0 1px 0 rgba(255,255,255,0.2)"></div>
<div style="position:absolute;left:1137.20px;top:5.60px;width:62.2px;height:60.90px;border-radius:5px;background:linear-gradient(#acacac,#8e8e8e 45%,#7a7a7a);box-shadow:inset 0 1px 0 rgba(255,255,255,0.25)"></div>
<div style="position:absolute;left:1143.50px;top:11.70px;width:49.4px;height:15px;border-radius:4px;background:#ff00ff;box-shadow:inset 0 1px 2px rgba(0,0,0,0.35),0 1px 0 rgba(255,255,255,0.2)"></div>
</div>
<div class="t" style="left:-22.95px;top:959.82px;font-size:13.08px;line-height:13.08px;color:#1c1c1c;transform:scaleX(1.0500);transform-origin:0 0;-webkit-text-stroke:0.55px #1c1c1c">Blue</div>
<div class="t" style="left:-22.95px;top:974.42px;font-size:13.08px;line-height:13.08px;color:#1c1c1c;transform:scaleX(1.0500);transform-origin:0 0;-webkit-text-stroke:0.55px #1c1c1c">Flower</div>
<div class="t" style="left:44.15px;top:959.82px;font-size:13.08px;line-height:13.08px;color:#1c1c1c;transform:scaleX(1.0500);transform-origin:0 0;-webkit-text-stroke:0.55px #1c1c1c">Bluish</div>
<div class="t" style="left:44.15px;top:974.42px;font-size:13.08px;line-height:13.08px;color:#1c1c1c;transform:scaleX(1.0500);transform-origin:0 0;-webkit-text-stroke:0.55px #1c1c1c">Green</div>
<div class="t" style="left:105.48px;top:974.42px;font-size:13.08px;line-height:13.08px;color:#1c1c1c;transform:scaleX(1.0500);transform-origin:0 0;-webkit-text-stroke:0.55px #1c1c1c">Orange</div>
<div class="t" style="left:168.37px;top:959.82px;font-size:13.08px;line-height:13.08px;color:#1c1c1c;transform:scaleX(1.0500);transform-origin:0 0;-webkit-text-stroke:0.55px #1c1c1c">Purplish</div>
<div class="t" style="left:168.37px;top:974.42px;font-size:13.08px;line-height:13.08px;color:#1c1c1c;transform:scaleX(1.0500);transform-origin:0 0;-webkit-text-stroke:0.55px #1c1c1c">Blue</div>
<div class="t" style="left:229.18px;top:959.82px;font-size:13.08px;line-height:13.08px;color:#1c1c1c;transform:scaleX(1.0500);transform-origin:0 0;-webkit-text-stroke:0.55px #1c1c1c">Moderate</div>
<div class="t" style="left:229.18px;top:974.42px;font-size:13.08px;line-height:13.08px;color:#1c1c1c;transform:scaleX(1.0500);transform-origin:0 0;-webkit-text-stroke:0.55px #1c1c1c">Red</div>
<div class="t" style="left:303.10px;top:974.42px;font-size:13.08px;line-height:13.08px;color:#1c1c1c;transform:scaleX(1.0500);transform-origin:0 0;-webkit-text-stroke:0.55px #1c1c1c">Purple</div>
<div class="t" style="left:368.10px;top:959.82px;font-size:13.08px;line-height:13.08px;color:#1c1c1c;transform:scaleX(1.0500);transform-origin:0 0;-webkit-text-stroke:0.55px #1c1c1c">Yellow</div>
<div class="t" style="left:368.10px;top:974.42px;font-size:13.08px;line-height:13.08px;color:#1c1c1c;transform:scaleX(1.0500);transform-origin:0 0;-webkit-text-stroke:0.55px #1c1c1c">Green</div>
<div class="t" style="left:430.48px;top:959.82px;font-size:13.08px;line-height:13.08px;color:#1c1c1c;transform:scaleX(1.0500);transform-origin:0 0;-webkit-text-stroke:0.55px #1c1c1c">Orange</div>
<div class="t" style="left:430.48px;top:974.42px;font-size:13.08px;line-height:13.08px;color:#1c1c1c;transform:scaleX(1.0500);transform-origin:0 0;-webkit-text-stroke:0.55px #1c1c1c">Yellow</div>
<div class="t" style="left:504.40px;top:974.42px;font-size:13.08px;line-height:13.08px;color:#1c1c1c;transform:scaleX(1.0500);transform-origin:0 0;-webkit-text-stroke:0.55px #1c1c1c">Blue</div>
<div class="t" style="left:564.15px;top:974.42px;font-size:13.08px;line-height:13.08px;color:#1c1c1c;transform:scaleX(1.0500);transform-origin:0 0;-webkit-text-stroke:0.55px #1c1c1c">Green</div>
<div class="t" style="left:635.45px;top:974.42px;font-size:13.08px;line-height:13.08px;color:#1c1c1c;transform:scaleX(1.0500);transform-origin:0 0;-webkit-text-stroke:0.55px #1c1c1c">Red</div>
<div class="t" style="left:693.10px;top:974.42px;font-size:13.08px;line-height:13.08px;color:#1c1c1c;transform:scaleX(1.0500);transform-origin:0 0;-webkit-text-stroke:0.55px #1c1c1c">Yellow</div>
<div class="t" style="left:751.28px;top:974.42px;font-size:13.08px;line-height:13.08px;color:#1c1c1c;transform:scaleX(1.0500);transform-origin:0 0;-webkit-text-stroke:0.55px #1c1c1c">Magenta</div>
<div class="t" style="left:827.30px;top:974.42px;font-size:13.08px;line-height:13.08px;color:#1c1c1c;transform:scaleX(1.0500);transform-origin:0 0;-webkit-text-stroke:0.55px #1c1c1c">Cyan</div>
<div class="t" style="left:876.03px;top:974.42px;font-size:13.08px;line-height:13.08px;color:#1c1c1c;transform:scaleX(1.0500);transform-origin:0 0;-webkit-text-stroke:0.55px #1c1c1c">100% Red</div>
<div class="t" style="left:954.15px;top:959.82px;font-size:13.08px;line-height:13.08px;color:#1c1c1c;transform:scaleX(1.0500);transform-origin:0 0;-webkit-text-stroke:0.55px #1c1c1c">100%</div>
<div class="t" style="left:954.15px;top:974.42px;font-size:13.08px;line-height:13.08px;color:#1c1c1c;transform:scaleX(1.0500);transform-origin:0 0;-webkit-text-stroke:0.55px #1c1c1c">Green</div>
<div class="t" style="left:1020.20px;top:959.82px;font-size:13.08px;line-height:13.08px;color:#1c1c1c;transform:scaleX(1.0500);transform-origin:0 0;-webkit-text-stroke:0.55px #1c1c1c">100%</div>
<div class="t" style="left:1020.20px;top:974.42px;font-size:13.08px;line-height:13.08px;color:#1c1c1c;transform:scaleX(1.0500);transform-origin:0 0;-webkit-text-stroke:0.55px #1c1c1c">Blue</div>
<div class="t" style="left:1085.20px;top:959.82px;font-size:13.08px;line-height:13.08px;color:#1c1c1c;transform:scaleX(1.0500);transform-origin:0 0;-webkit-text-stroke:0.55px #1c1c1c">100%</div>
<div class="t" style="left:1085.20px;top:974.42px;font-size:13.08px;line-height:13.08px;color:#1c1c1c;transform:scaleX(1.0500);transform-origin:0 0;-webkit-text-stroke:0.55px #1c1c1c">Cyan</div>
<div class="t" style="left:1141.27px;top:959.82px;font-size:13.08px;line-height:13.08px;color:#1c1c1c;transform:scaleX(1.0500);transform-origin:0 0;-webkit-text-stroke:0.55px #1c1c1c">100%</div>
<div class="t" style="left:1141.27px;top:974.42px;font-size:13.08px;line-height:13.08px;color:#1c1c1c;transform:scaleX(1.0500);transform-origin:0 0;-webkit-text-stroke:0.55px #1c1c1c">Magenta</div>
<div style="position:absolute;left:-10.00px;top:960.00px;width:10.00px;height:30.00px;background:#333"></div>
<div style="position:absolute;left:1202px;top:930.6px;width:61px;height:60.9px;border-radius:5px;background:linear-gradient(#2a2a2a,#333)"></div>
<div style="position:absolute;left:1207.5px;top:937px;width:49px;height:15px;border-radius:4px;background:#ffff00;box-shadow:inset 0 -1px 2px rgba(0,0,0,0.3)"></div>
<div class="t" style="left:1215.40px;top:958.99px;font-size:13.95px;line-height:13.95px;color:#ffffff;font-weight:bold;transform:scaleX(0.9500);transform-origin:0 0;">100%</div>
<div class="t" style="left:1211.60px;top:973.89px;font-size:13.95px;line-height:13.95px;color:#ffffff;font-weight:bold;transform:scaleX(0.9500);transform-origin:0 0;">Yellow</div>
<div style="position:absolute;left:0.00px;top:992.00px;width:1263.00px;height:14.00px;background:#5e5e5e"></div>
<div style="position:absolute;left:449px;top:993.5px;width:800px;height:11px;border-radius:5px;background:#3e3e3e"></div>
<div style="position:absolute;left:1px;top:993px;width:13px;height:13px;border-radius:3px;background:#6c6c6c;border:1px solid #8a8a8a;box-sizing:border-box"></div>
<svg width="8" height="10" style="left:3.5px;top:994.5px"><path d="M6.5 0.5 L6.5 9.5 L1 5 Z" fill="#3a3a3a"/></svg>
<div style="position:absolute;left:1249px;top:993px;width:13px;height:13px;border-radius:3px;background:#6c6c6c;border:1px solid #8a8a8a;box-sizing:border-box"></div>
<svg width="8" height="10" style="left:1252.5px;top:994.5px"><path d="M1 0.5 L1 9.5 L6.5 5 Z" fill="#3a3a3a"/></svg>
<div style="position:absolute;left:1263.50px;top:928.00px;width:404.50px;height:78.00px;background:#2a2a2a"></div>
<div style="position:absolute;left:1265.6px;top:930.6px;width:59.2px;height:22.4px;border-radius:4px 4px 0 0;background:linear-gradient(#b4b4b4,#9a9a9a 40%,#7c7c7c)"></div>
<div style="position:absolute;left:1265.6px;top:954px;width:59.2px;height:52px;background:linear-gradient(#9a9a9a,#7a7a7a)"></div>
<div style="position:absolute;left:1286.0px;top:932.3px;width:19.0px;height:19.0px;border-radius:50%;background:linear-gradient(#5a5a5a,#7a7a7a 55%,#9c9c9c)"></div>
<svg width="14" height="8" style="left:1288.5px;top:937.5px"><path d="M0.5 7 L13 7 L6.8 0.5 Z" fill="#303030"/></svg>
<div style="position:absolute;left:1275.7px;top:961.3px;width:39px;height:38.2px;border-radius:6px;border:3px solid #2c2c2c;box-sizing:border-box;background:linear-gradient(#c4c4c4,#a8a8a8 50%,#9a9a9a)"></div>
<div style="position:absolute;left:1287px;top:972px;width:17px;height:17px;background:linear-gradient(#1c1c1c 50%,#000 50%)"></div>
<div style="position:absolute;left:1326px;top:930.6px;width:58.0px;height:36.9px;background:linear-gradient(#b4b4b4,#9a9a9a 40%,#7c7c7c)"></div>
<div style="position:absolute;left:1385.2px;top:930.6px;width:55.0px;height:36.9px;background:linear-gradient(#b4b4b4,#9a9a9a 40%,#7c7c7c)"></div>
<div style="position:absolute;left:1440.7px;top:930.6px;width:55.3px;height:36.9px;background:linear-gradient(#6a6a6a,#4e4e4e 50%,#404040)"></div>
<div style="position:absolute;left:1498.2px;top:930.6px;width:54.8px;height:36.9px;background:linear-gradient(#b4b4b4,#9a9a9a 40%,#7c7c7c)"></div>
<div style="position:absolute;left:1553.5px;top:930.6px;width:56.0px;height:36.9px;background:linear-gradient(#444,#333 50%,#2c2c2c)"></div>
<div style="position:absolute;left:1610px;top:930.6px;width:55.0px;height:36.9px;background:linear-gradient(#b4b4b4,#9a9a9a 40%,#7c7c7c)"></div>
<div style="position:absolute;left:1343.2px;top:936.8px;width:24px;height:24px;border-radius:50%;background:linear-gradient(#5a5a5a,#7a7a7a 55%,#9c9c9c)"></div>
<div style="position:absolute;left:1350.2px;top:943.8px;width:10px;height:10px;background:#2a2a2a"></div>
<div style="position:absolute;left:1400.6px;top:936.8px;width:24px;height:24px;border-radius:50%;background:linear-gradient(#5a5a5a,#7a7a7a 55%,#9c9c9c)"></div>
<svg width="12" height="14" style="left:1408px;top:942px"><path d="M0.5 0.5 L11 7 L0.5 13.5 Z" fill="#2a2a2a"/></svg>
<div style="position:absolute;left:1456.5px;top:937.0px;width:24px;height:24px;border-radius:50%;background:linear-gradient(#2a2a2a,#3a3a3a 60%,#444)"></div>
<div class="t" style="left:1460.90px;top:942.19px;font-size:14.53px;line-height:14.53px;color:#1e1e1e;font-weight:bold;transform:scaleX(0.8000);transform-origin:0 0;">[··]</div>
<div style="position:absolute;left:1513.3px;top:937.0px;width:24px;height:24px;border-radius:50%;background:linear-gradient(#5a5a5a,#7a7a7a 55%,#9c9c9c)"></div>
<svg width="24" height="14" style="left:1513.3px;top:942px"><ellipse cx="7.3" cy="7" rx="4.6" ry="3.6" fill="none" stroke="#262626" stroke-width="2.4"/><ellipse cx="16.7" cy="7" rx="4.6" ry="3.6" fill="none" stroke="#262626" stroke-width="2.4"/></svg>
<div style="position:absolute;left:1569.3px;top:937.0px;width:24px;height:24px;border-radius:50%;background:linear-gradient(#2a2a2a,#3a3a3a 60%,#444)"></div>
<svg width="18" height="18" style="left:1572.3px;top:940px" viewBox="0 0 18 18"><path d="M3.5 8 A5.5 5.5 0 0 1 13.5 5.5 M14.5 10 A5.5 5.5 0 0 1 4.5 12.5" stroke="#1a1a1a" stroke-width="2.6" fill="none"/><path d="M11 3 L15.5 2.5 L15 7 Z M7 15 L2.5 15.5 L3 11 Z" fill="#1a1a1a"/></svg>
<div style="position:absolute;left:1626.6px;top:937.0px;width:24px;height:24px;border-radius:50%;background:linear-gradient(#5a5a5a,#7a7a7a 55%,#9c9c9c)"></div>
<div style="position:absolute;left:1326px;top:968.5px;width:170.4px;height:38px;background:linear-gradient(#b4b4b4,#9a9a9a 40%,#7c7c7c)"></div>
<div style="position:absolute;left:1498px;top:968.5px;width:167px;height:38px;background:linear-gradient(#b4b4b4,#9a9a9a 40%,#7c7c7c)"></div>
<div style="position:absolute;left:1352.6px;top:975.0px;width:24px;height:24px;border-radius:50%;background:linear-gradient(#5a5a5a,#7a7a7a 55%,#9c9c9c)"></div>
<svg width="16" height="14" style="left:1356.6px;top:980px"><path d="M7 1.5 L2 7 L7 12.5 M13.5 1.5 L8.5 7 L13.5 12.5" fill="none" stroke="#2a2a2a" stroke-width="2.2"/></svg>
<div style="position:absolute;left:1619.2px;top:975.8px;width:24px;height:24px;border-radius:50%;background:linear-gradient(#5a5a5a,#7a7a7a 55%,#9c9c9c)"></div>
<svg width="16" height="14" style="left:1623.2px;top:980.8px"><path d="M2.5 1.5 L7.5 7 L2.5 12.5 M9 1.5 L14 7 L9 12.5" fill="none" stroke="#2a2a2a" stroke-width="2.2"/></svg>
<div class="t" style="left:1398.90px;top:973.80px;font-size:30.23px;line-height:30.23px;color:#353535;transform:scaleX(0.9191);transform-origin:0 0;-webkit-text-stroke:0">Back</div>
<div class="t" style="left:1532.70px;top:973.05px;font-size:29.94px;line-height:29.94px;color:#353535;transform:scaleX(1.0323);transform-origin:0 0;-webkit-text-stroke:0">Next</div>
<div style="position:absolute;left:1665.00px;top:928.00px;width:3.00px;height:78.00px;background:#222"></div>
<div style="position:absolute;left:1666.00px;top:0.00px;width:2.00px;height:1006.00px;background:#141414"></div>
</body></html>
